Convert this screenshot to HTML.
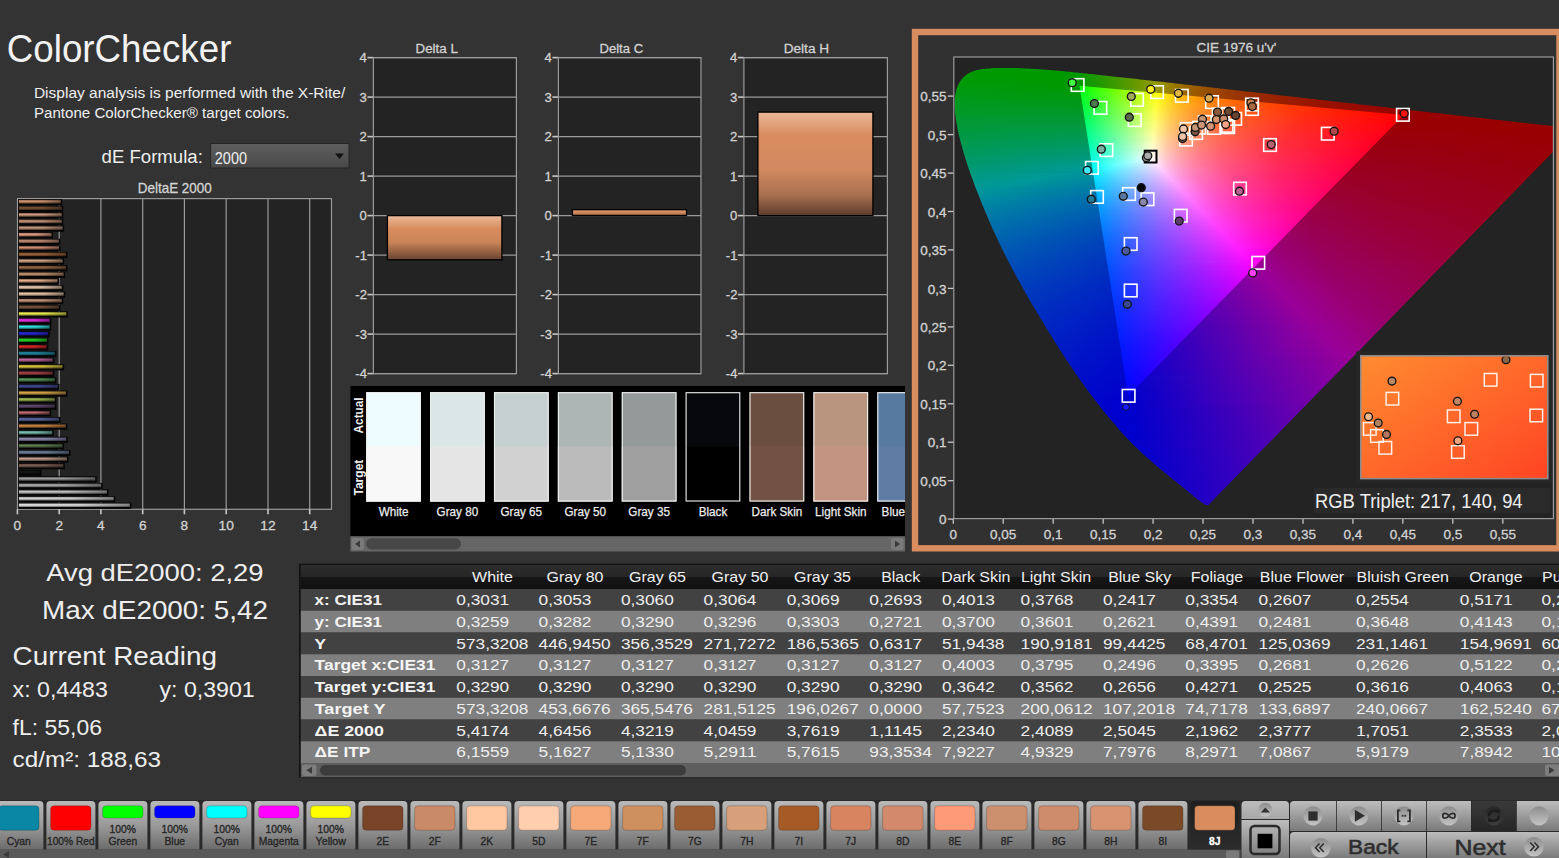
<!DOCTYPE html>
<html><head><meta charset="utf-8"><title>ColorChecker</title>
<style>html,body{margin:0;padding:0;background:#333;overflow:hidden;width:1559px;height:858px}
svg{display:block}text{font-family:"Liberation Sans",sans-serif}</style></head>
<body><svg width="1559" height="858" viewBox="0 0 1559 858" font-family="Liberation Sans, sans-serif">
<defs><linearGradient id="dd" x1="0" y1="0" x2="0" y2="1"><stop offset="0" stop-color="#5e5e5e"/><stop offset="1" stop-color="#484848"/></linearGradient>
<linearGradient id="bshade" x1="0" y1="0" x2="0" y2="1"><stop offset="0" stop-color="#000" stop-opacity="0.35"/><stop offset="0.4" stop-color="#000" stop-opacity="0"/><stop offset="1" stop-color="#000" stop-opacity="0.5"/></linearGradient>
<linearGradient id="bar0" x1="0" y1="0" x2="1" y2="0"><stop offset="0" stop-color="#f4f4f4"/><stop offset="0.55" stop-color="#f4f4f4" stop-opacity="0.95"/><stop offset="1" stop-color="#f4f4f4" stop-opacity="0.6"/></linearGradient>
<linearGradient id="bar1" x1="0" y1="0" x2="1" y2="0"><stop offset="0" stop-color="#e2e2e2"/><stop offset="0.55" stop-color="#e2e2e2" stop-opacity="0.95"/><stop offset="1" stop-color="#e2e2e2" stop-opacity="0.6"/></linearGradient>
<linearGradient id="bar2" x1="0" y1="0" x2="1" y2="0"><stop offset="0" stop-color="#cfcfcf"/><stop offset="0.55" stop-color="#cfcfcf" stop-opacity="0.95"/><stop offset="1" stop-color="#cfcfcf" stop-opacity="0.6"/></linearGradient>
<linearGradient id="bar3" x1="0" y1="0" x2="1" y2="0"><stop offset="0" stop-color="#b9b9b9"/><stop offset="0.55" stop-color="#b9b9b9" stop-opacity="0.95"/><stop offset="1" stop-color="#b9b9b9" stop-opacity="0.6"/></linearGradient>
<linearGradient id="bar4" x1="0" y1="0" x2="1" y2="0"><stop offset="0" stop-color="#a2a2a2"/><stop offset="0.55" stop-color="#a2a2a2" stop-opacity="0.95"/><stop offset="1" stop-color="#a2a2a2" stop-opacity="0.6"/></linearGradient>
<linearGradient id="bar5" x1="0" y1="0" x2="1" y2="0"><stop offset="0" stop-color="#161616"/><stop offset="0.55" stop-color="#161616" stop-opacity="0.95"/><stop offset="1" stop-color="#161616" stop-opacity="0.6"/></linearGradient>
<linearGradient id="bar6" x1="0" y1="0" x2="1" y2="0"><stop offset="0" stop-color="#846558"/><stop offset="0.55" stop-color="#846558" stop-opacity="0.95"/><stop offset="1" stop-color="#846558" stop-opacity="0.6"/></linearGradient>
<linearGradient id="bar7" x1="0" y1="0" x2="1" y2="0"><stop offset="0" stop-color="#caa595"/><stop offset="0.55" stop-color="#caa595" stop-opacity="0.95"/><stop offset="1" stop-color="#caa595" stop-opacity="0.6"/></linearGradient>
<linearGradient id="bar8" x1="0" y1="0" x2="1" y2="0"><stop offset="0" stop-color="#7389a6"/><stop offset="0.55" stop-color="#7389a6" stop-opacity="0.95"/><stop offset="1" stop-color="#7389a6" stop-opacity="0.6"/></linearGradient>
<linearGradient id="bar9" x1="0" y1="0" x2="1" y2="0"><stop offset="0" stop-color="#638455"/><stop offset="0.55" stop-color="#638455" stop-opacity="0.95"/><stop offset="1" stop-color="#638455" stop-opacity="0.6"/></linearGradient>
<linearGradient id="bar10" x1="0" y1="0" x2="1" y2="0"><stop offset="0" stop-color="#9793be"/><stop offset="0.55" stop-color="#9793be" stop-opacity="0.95"/><stop offset="1" stop-color="#9793be" stop-opacity="0.6"/></linearGradient>
<linearGradient id="bar11" x1="0" y1="0" x2="1" y2="0"><stop offset="0" stop-color="#7ec9b8"/><stop offset="0.55" stop-color="#7ec9b8" stop-opacity="0.95"/><stop offset="1" stop-color="#7ec9b8" stop-opacity="0.6"/></linearGradient>
<linearGradient id="bar12" x1="0" y1="0" x2="1" y2="0"><stop offset="0" stop-color="#d48a45"/><stop offset="0.55" stop-color="#d48a45" stop-opacity="0.95"/><stop offset="1" stop-color="#d48a45" stop-opacity="0.6"/></linearGradient>
<linearGradient id="bar13" x1="0" y1="0" x2="1" y2="0"><stop offset="0" stop-color="#606aad"/><stop offset="0.55" stop-color="#606aad" stop-opacity="0.95"/><stop offset="1" stop-color="#606aad" stop-opacity="0.6"/></linearGradient>
<linearGradient id="bar14" x1="0" y1="0" x2="1" y2="0"><stop offset="0" stop-color="#c36d75"/><stop offset="0.55" stop-color="#c36d75" stop-opacity="0.95"/><stop offset="1" stop-color="#c36d75" stop-opacity="0.6"/></linearGradient>
<linearGradient id="bar15" x1="0" y1="0" x2="1" y2="0"><stop offset="0" stop-color="#6b4e7b"/><stop offset="0.55" stop-color="#6b4e7b" stop-opacity="0.95"/><stop offset="1" stop-color="#6b4e7b" stop-opacity="0.6"/></linearGradient>
<linearGradient id="bar16" x1="0" y1="0" x2="1" y2="0"><stop offset="0" stop-color="#a6c256"/><stop offset="0.55" stop-color="#a6c256" stop-opacity="0.95"/><stop offset="1" stop-color="#a6c256" stop-opacity="0.6"/></linearGradient>
<linearGradient id="bar17" x1="0" y1="0" x2="1" y2="0"><stop offset="0" stop-color="#e1ad4a"/><stop offset="0.55" stop-color="#e1ad4a" stop-opacity="0.95"/><stop offset="1" stop-color="#e1ad4a" stop-opacity="0.6"/></linearGradient>
<linearGradient id="bar18" x1="0" y1="0" x2="1" y2="0"><stop offset="0" stop-color="#474d9c"/><stop offset="0.55" stop-color="#474d9c" stop-opacity="0.95"/><stop offset="1" stop-color="#474d9c" stop-opacity="0.6"/></linearGradient>
<linearGradient id="bar19" x1="0" y1="0" x2="1" y2="0"><stop offset="0" stop-color="#559a57"/><stop offset="0.55" stop-color="#559a57" stop-opacity="0.95"/><stop offset="1" stop-color="#559a57" stop-opacity="0.6"/></linearGradient>
<linearGradient id="bar20" x1="0" y1="0" x2="1" y2="0"><stop offset="0" stop-color="#b2454b"/><stop offset="0.55" stop-color="#b2454b" stop-opacity="0.95"/><stop offset="1" stop-color="#b2454b" stop-opacity="0.6"/></linearGradient>
<linearGradient id="bar21" x1="0" y1="0" x2="1" y2="0"><stop offset="0" stop-color="#e6cf41"/><stop offset="0.55" stop-color="#e6cf41" stop-opacity="0.95"/><stop offset="1" stop-color="#e6cf41" stop-opacity="0.6"/></linearGradient>
<linearGradient id="bar22" x1="0" y1="0" x2="1" y2="0"><stop offset="0" stop-color="#c76ba6"/><stop offset="0.55" stop-color="#c76ba6" stop-opacity="0.95"/><stop offset="1" stop-color="#c76ba6" stop-opacity="0.6"/></linearGradient>
<linearGradient id="bar23" x1="0" y1="0" x2="1" y2="0"><stop offset="0" stop-color="#2292ac"/><stop offset="0.55" stop-color="#2292ac" stop-opacity="0.95"/><stop offset="1" stop-color="#2292ac" stop-opacity="0.6"/></linearGradient>
<linearGradient id="bar24" x1="0" y1="0" x2="1" y2="0"><stop offset="0" stop-color="#e42828"/><stop offset="0.55" stop-color="#e42828" stop-opacity="0.95"/><stop offset="1" stop-color="#e42828" stop-opacity="0.6"/></linearGradient>
<linearGradient id="bar25" x1="0" y1="0" x2="1" y2="0"><stop offset="0" stop-color="#28e428"/><stop offset="0.55" stop-color="#28e428" stop-opacity="0.95"/><stop offset="1" stop-color="#28e428" stop-opacity="0.6"/></linearGradient>
<linearGradient id="bar26" x1="0" y1="0" x2="1" y2="0"><stop offset="0" stop-color="#2828e4"/><stop offset="0.55" stop-color="#2828e4" stop-opacity="0.95"/><stop offset="1" stop-color="#2828e4" stop-opacity="0.6"/></linearGradient>
<linearGradient id="bar27" x1="0" y1="0" x2="1" y2="0"><stop offset="0" stop-color="#35f1f1"/><stop offset="0.55" stop-color="#35f1f1" stop-opacity="0.95"/><stop offset="1" stop-color="#35f1f1" stop-opacity="0.6"/></linearGradient>
<linearGradient id="bar28" x1="0" y1="0" x2="1" y2="0"><stop offset="0" stop-color="#f135f1"/><stop offset="0.55" stop-color="#f135f1" stop-opacity="0.95"/><stop offset="1" stop-color="#f135f1" stop-opacity="0.6"/></linearGradient>
<linearGradient id="bar29" x1="0" y1="0" x2="1" y2="0"><stop offset="0" stop-color="#f3f352"/><stop offset="0.55" stop-color="#f3f352" stop-opacity="0.95"/><stop offset="1" stop-color="#f3f352" stop-opacity="0.6"/></linearGradient>
<linearGradient id="bar30" x1="0" y1="0" x2="1" y2="0"><stop offset="0" stop-color="#825b42"/><stop offset="0.55" stop-color="#825b42" stop-opacity="0.95"/><stop offset="1" stop-color="#825b42" stop-opacity="0.6"/></linearGradient>
<linearGradient id="bar31" x1="0" y1="0" x2="1" y2="0"><stop offset="0" stop-color="#cf9c80"/><stop offset="0.55" stop-color="#cf9c80" stop-opacity="0.95"/><stop offset="1" stop-color="#cf9c80" stop-opacity="0.6"/></linearGradient>
<linearGradient id="bar32" x1="0" y1="0" x2="1" y2="0"><stop offset="0" stop-color="#f7d1b1"/><stop offset="0.55" stop-color="#f7d1b1" stop-opacity="0.95"/><stop offset="1" stop-color="#f7d1b1" stop-opacity="0.6"/></linearGradient>
<linearGradient id="bar33" x1="0" y1="0" x2="1" y2="0"><stop offset="0" stop-color="#f8d7be"/><stop offset="0.55" stop-color="#f8d7be" stop-opacity="0.95"/><stop offset="1" stop-color="#f8d7be" stop-opacity="0.6"/></linearGradient>
<linearGradient id="bar34" x1="0" y1="0" x2="1" y2="0"><stop offset="0" stop-color="#edb28e"/><stop offset="0.55" stop-color="#edb28e" stop-opacity="0.95"/><stop offset="1" stop-color="#edb28e" stop-opacity="0.6"/></linearGradient>
<linearGradient id="bar35" x1="0" y1="0" x2="1" y2="0"><stop offset="0" stop-color="#d19d76"/><stop offset="0.55" stop-color="#d19d76" stop-opacity="0.95"/><stop offset="1" stop-color="#d19d76" stop-opacity="0.6"/></linearGradient>
<linearGradient id="bar36" x1="0" y1="0" x2="1" y2="0"><stop offset="0" stop-color="#9e6b49"/><stop offset="0.55" stop-color="#9e6b49" stop-opacity="0.95"/><stop offset="1" stop-color="#9e6b49" stop-opacity="0.6"/></linearGradient>
<linearGradient id="bar37" x1="0" y1="0" x2="1" y2="0"><stop offset="0" stop-color="#dbad8c"/><stop offset="0.55" stop-color="#dbad8c" stop-opacity="0.95"/><stop offset="1" stop-color="#dbad8c" stop-opacity="0.6"/></linearGradient>
<linearGradient id="bar38" x1="0" y1="0" x2="1" y2="0"><stop offset="0" stop-color="#ab6b3f"/><stop offset="0.55" stop-color="#ab6b3f" stop-opacity="0.95"/><stop offset="1" stop-color="#ab6b3f" stop-opacity="0.6"/></linearGradient>
<linearGradient id="bar39" x1="0" y1="0" x2="1" y2="0"><stop offset="0" stop-color="#d48f73"/><stop offset="0.55" stop-color="#d48f73" stop-opacity="0.95"/><stop offset="1" stop-color="#d48f73" stop-opacity="0.6"/></linearGradient>
<linearGradient id="bar40" x1="0" y1="0" x2="1" y2="0"><stop offset="0" stop-color="#d1967c"/><stop offset="0.55" stop-color="#d1967c" stop-opacity="0.95"/><stop offset="1" stop-color="#d1967c" stop-opacity="0.6"/></linearGradient>
<linearGradient id="bar41" x1="0" y1="0" x2="1" y2="0"><stop offset="0" stop-color="#f2a88d"/><stop offset="0.55" stop-color="#f2a88d" stop-opacity="0.95"/><stop offset="1" stop-color="#f2a88d" stop-opacity="0.6"/></linearGradient>
<linearGradient id="bar42" x1="0" y1="0" x2="1" y2="0"><stop offset="0" stop-color="#cf9e82"/><stop offset="0.55" stop-color="#cf9e82" stop-opacity="0.95"/><stop offset="1" stop-color="#cf9e82" stop-opacity="0.6"/></linearGradient>
<linearGradient id="bar43" x1="0" y1="0" x2="1" y2="0"><stop offset="0" stop-color="#d29a80"/><stop offset="0.55" stop-color="#d29a80" stop-opacity="0.95"/><stop offset="1" stop-color="#d29a80" stop-opacity="0.6"/></linearGradient>
<linearGradient id="bar44" x1="0" y1="0" x2="1" y2="0"><stop offset="0" stop-color="#daa284"/><stop offset="0.55" stop-color="#daa284" stop-opacity="0.95"/><stop offset="1" stop-color="#daa284" stop-opacity="0.6"/></linearGradient>
<linearGradient id="bar45" x1="0" y1="0" x2="1" y2="0"><stop offset="0" stop-color="#82593b"/><stop offset="0.55" stop-color="#82593b" stop-opacity="0.95"/><stop offset="1" stop-color="#82593b" stop-opacity="0.6"/></linearGradient>
<linearGradient id="bar46" x1="0" y1="0" x2="1" y2="0"><stop offset="0" stop-color="#d89a74"/><stop offset="0.55" stop-color="#d89a74" stop-opacity="0.95"/><stop offset="1" stop-color="#d89a74" stop-opacity="0.6"/></linearGradient>
<linearGradient id="dbar" x1="0" y1="0" x2="0" y2="1"><stop offset="0" stop-color="#e9b89a"/><stop offset="0.22" stop-color="#d98c5e"/><stop offset="0.55" stop-color="#d38a60"/><stop offset="0.8" stop-color="#a87050"/><stop offset="1" stop-color="#5e3c2c"/></linearGradient>
<linearGradient id="dbar2" x1="0" y1="0" x2="0" y2="1"><stop offset="0" stop-color="#e9b89a"/><stop offset="0.3" stop-color="#d98c5e"/><stop offset="0.6" stop-color="#c98458"/><stop offset="1" stop-color="#6a4430"/></linearGradient>
<linearGradient id="go7" gradientUnits="userSpaceOnUse" x1="967" y1="0" x2="1083" y2="0"><stop offset="0.0043" stop-color="#009900"/><stop offset="0.9440" stop-color="#009900"/><stop offset="0.9957" stop-color="#089900"/></linearGradient><linearGradient id="go8" gradientUnits="userSpaceOnUse" x1="964" y1="0" x2="1102" y2="0"><stop offset="0.0036" stop-color="#009900"/><stop offset="0.8225" stop-color="#009900"/><stop offset="0.9964" stop-color="#259900"/></linearGradient><linearGradient id="go9" gradientUnits="userSpaceOnUse" x1="962" y1="0" x2="1120" y2="0"><stop offset="0.0032" stop-color="#009901"/><stop offset="0.7310" stop-color="#009900"/><stop offset="0.9968" stop-color="#459900"/></linearGradient><linearGradient id="go10" gradientUnits="userSpaceOnUse" x1="960" y1="0" x2="1138" y2="0"><stop offset="0.0028" stop-color="#009903"/><stop offset="0.6657" stop-color="#009900"/><stop offset="0.8399" stop-color="#339900"/><stop offset="0.9972" stop-color="#699900"/></linearGradient><linearGradient id="go11" gradientUnits="userSpaceOnUse" x1="958" y1="0" x2="1156" y2="0"><stop offset="0.0025" stop-color="#009905"/><stop offset="0.6086" stop-color="#009900"/><stop offset="0.8157" stop-color="#459900"/><stop offset="0.9975" stop-color="#929900"/></linearGradient><linearGradient id="go12" gradientUnits="userSpaceOnUse" x1="957" y1="0" x2="1174" y2="0"><stop offset="0.0023" stop-color="#009907"/><stop offset="0.5599" stop-color="#009900"/><stop offset="0.7488" stop-color="#459900"/><stop offset="0.9240" stop-color="#979900"/><stop offset="0.9977" stop-color="#997a00"/></linearGradient><linearGradient id="go13" gradientUnits="userSpaceOnUse" x1="956" y1="0" x2="1192" y2="0"><stop offset="0.0021" stop-color="#009909"/><stop offset="0.5233" stop-color="#009900"/><stop offset="0.6970" stop-color="#469900"/><stop offset="0.8581" stop-color="#999800"/><stop offset="0.9216" stop-color="#997900"/><stop offset="0.9979" stop-color="#995f00"/></linearGradient><linearGradient id="go14" gradientUnits="userSpaceOnUse" x1="955" y1="0" x2="1209" y2="0"><stop offset="0.0020" stop-color="#00990b"/><stop offset="0.4902" stop-color="#009900"/><stop offset="0.6516" stop-color="#469900"/><stop offset="0.8012" stop-color="#999800"/><stop offset="0.8878" stop-color="#996d00"/><stop offset="0.9980" stop-color="#994c00"/></linearGradient><linearGradient id="go15" gradientUnits="userSpaceOnUse" x1="955" y1="0" x2="1227" y2="0"><stop offset="0.0018" stop-color="#00990d"/><stop offset="0.4577" stop-color="#009903"/><stop offset="0.6085" stop-color="#469900"/><stop offset="0.7445" stop-color="#989900"/><stop offset="0.7960" stop-color="#997c00"/><stop offset="0.8548" stop-color="#996300"/><stop offset="0.9982" stop-color="#993d00"/></linearGradient><linearGradient id="go16" gradientUnits="userSpaceOnUse" x1="954" y1="0" x2="1244" y2="0"><stop offset="0.0017" stop-color="#009910"/><stop offset="0.4362" stop-color="#019906"/><stop offset="0.5776" stop-color="#489901"/><stop offset="0.7017" stop-color="#999900"/><stop offset="0.7569" stop-color="#997800"/><stop offset="0.8224" stop-color="#995c00"/><stop offset="0.9983" stop-color="#993200"/></linearGradient><linearGradient id="go17" gradientUnits="userSpaceOnUse" x1="954" y1="0" x2="1262" y2="0"><stop offset="0.0016" stop-color="#009912"/><stop offset="0.4107" stop-color="#009908"/><stop offset="0.5406" stop-color="#469904"/><stop offset="0.6575" stop-color="#979900"/><stop offset="0.7256" stop-color="#997000"/><stop offset="0.7971" stop-color="#995300"/><stop offset="0.8880" stop-color="#993b00"/><stop offset="0.9984" stop-color="#992800"/></linearGradient><linearGradient id="go18" gradientUnits="userSpaceOnUse" x1="953" y1="0" x2="1280" y2="0"><stop offset="0.0015" stop-color="#009914"/><stop offset="0.3899" stop-color="#00990b"/><stop offset="0.5122" stop-color="#469907"/><stop offset="0.6223" stop-color="#979902"/><stop offset="0.6896" stop-color="#996e00"/><stop offset="0.7691" stop-color="#994e00"/><stop offset="0.8700" stop-color="#993400"/><stop offset="0.9985" stop-color="#992000"/></linearGradient><linearGradient id="go19" gradientUnits="userSpaceOnUse" x1="953" y1="0" x2="1297" y2="0"><stop offset="0.0015" stop-color="#009916"/><stop offset="0.3735" stop-color="#01990e"/><stop offset="0.4898" stop-color="#48990a"/><stop offset="0.5916" stop-color="#989906"/><stop offset="0.6613" stop-color="#996b01"/><stop offset="0.7456" stop-color="#994900"/><stop offset="0.8561" stop-color="#992e00"/><stop offset="0.9985" stop-color="#991a00"/></linearGradient><linearGradient id="go20" gradientUnits="userSpaceOnUse" x1="953" y1="0" x2="1315" y2="0"><stop offset="0.0014" stop-color="#009918"/><stop offset="0.3550" stop-color="#009911"/><stop offset="0.4655" stop-color="#48990d"/><stop offset="0.5622" stop-color="#98990a"/><stop offset="0.6312" stop-color="#996904"/><stop offset="0.7224" stop-color="#994400"/><stop offset="0.8412" stop-color="#992900"/><stop offset="0.9986" stop-color="#991400"/></linearGradient><linearGradient id="go21" gradientUnits="userSpaceOnUse" x1="953" y1="0" x2="1332" y2="0"><stop offset="0.0013" stop-color="#00991a"/><stop offset="0.3391" stop-color="#009914"/><stop offset="0.4420" stop-color="#469911"/><stop offset="0.5369" stop-color="#98990d"/><stop offset="0.6082" stop-color="#996506"/><stop offset="0.7005" stop-color="#994002"/><stop offset="0.8272" stop-color="#992400"/><stop offset="0.9987" stop-color="#990f00"/></linearGradient><linearGradient id="go22" gradientUnits="userSpaceOnUse" x1="953" y1="0" x2="1350" y2="0"><stop offset="0.0013" stop-color="#00991d"/><stop offset="0.3237" stop-color="#009917"/><stop offset="0.4219" stop-color="#469914"/><stop offset="0.5126" stop-color="#999911"/><stop offset="0.5453" stop-color="#997c0d"/><stop offset="0.5831" stop-color="#996309"/><stop offset="0.6814" stop-color="#993c03"/><stop offset="0.8149" stop-color="#992000"/><stop offset="0.9987" stop-color="#990b00"/></linearGradient><linearGradient id="go23" gradientUnits="userSpaceOnUse" x1="953" y1="0" x2="1368" y2="0"><stop offset="0.0012" stop-color="#00991f"/><stop offset="0.3120" stop-color="#00991a"/><stop offset="0.4060" stop-color="#479918"/><stop offset="0.4904" stop-color="#999815"/><stop offset="0.5241" stop-color="#997910"/><stop offset="0.5627" stop-color="#99600b"/><stop offset="0.6614" stop-color="#993805"/><stop offset="0.8012" stop-color="#991c00"/><stop offset="0.9988" stop-color="#990700"/></linearGradient><linearGradient id="go24" gradientUnits="userSpaceOnUse" x1="953" y1="0" x2="1385" y2="0"><stop offset="0.0012" stop-color="#009921"/><stop offset="0.2998" stop-color="#00991d"/><stop offset="0.3877" stop-color="#45991b"/><stop offset="0.4711" stop-color="#999819"/><stop offset="0.5035" stop-color="#997913"/><stop offset="0.5428" stop-color="#995e0e"/><stop offset="0.6447" stop-color="#993506"/><stop offset="0.7905" stop-color="#991801"/><stop offset="0.9988" stop-color="#990400"/></linearGradient><linearGradient id="go25" gradientUnits="userSpaceOnUse" x1="953" y1="0" x2="1403" y2="0"><stop offset="0.0011" stop-color="#009923"/><stop offset="0.2878" stop-color="#009920"/><stop offset="0.3700" stop-color="#43991f"/><stop offset="0.4522" stop-color="#99971d"/><stop offset="0.4856" stop-color="#997616"/><stop offset="0.5256" stop-color="#995b10"/><stop offset="0.6300" stop-color="#993207"/><stop offset="0.7811" stop-color="#991501"/><stop offset="0.9989" stop-color="#990100"/></linearGradient><linearGradient id="go26" gradientUnits="userSpaceOnUse" x1="953" y1="0" x2="1421" y2="0"><stop offset="0.0011" stop-color="#009925"/><stop offset="0.2788" stop-color="#009923"/><stop offset="0.3579" stop-color="#459922"/><stop offset="0.4348" stop-color="#999720"/><stop offset="0.4669" stop-color="#997619"/><stop offset="0.5075" stop-color="#995912"/><stop offset="0.5566" stop-color="#99420d"/><stop offset="0.6165" stop-color="#992e08"/><stop offset="0.7810" stop-color="#991102"/><stop offset="0.9989" stop-color="#990000"/></linearGradient><linearGradient id="go27" gradientUnits="userSpaceOnUse" x1="953" y1="0" x2="1438" y2="0"><stop offset="0.0010" stop-color="#009928"/><stop offset="0.2691" stop-color="#009926"/><stop offset="0.3474" stop-color="#479926"/><stop offset="0.4175" stop-color="#999925"/><stop offset="0.4505" stop-color="#99751c"/><stop offset="0.4918" stop-color="#995715"/><stop offset="0.5412" stop-color="#993f0f"/><stop offset="0.6031" stop-color="#992c0a"/><stop offset="0.7845" stop-color="#990d02"/><stop offset="0.9990" stop-color="#990000"/></linearGradient><linearGradient id="go28" gradientUnits="userSpaceOnUse" x1="953" y1="0" x2="1456" y2="0"><stop offset="0.0010" stop-color="#00992a"/><stop offset="0.2594" stop-color="#00992a"/><stop offset="0.3330" stop-color="#459929"/><stop offset="0.4026" stop-color="#999829"/><stop offset="0.4364" stop-color="#99731f"/><stop offset="0.4781" stop-color="#995416"/><stop offset="0.5298" stop-color="#993c10"/><stop offset="0.5915" stop-color="#99290b"/><stop offset="0.7903" stop-color="#990902"/><stop offset="0.8976" stop-color="#990000"/><stop offset="0.9990" stop-color="#990000"/></linearGradient><linearGradient id="go29" gradientUnits="userSpaceOnUse" x1="953" y1="0" x2="1474" y2="0"><stop offset="0.0010" stop-color="#00992c"/><stop offset="0.2524" stop-color="#01992d"/><stop offset="0.3234" stop-color="#47992d"/><stop offset="0.3887" stop-color="#99982d"/><stop offset="0.4213" stop-color="#997222"/><stop offset="0.4635" stop-color="#995319"/><stop offset="0.5154" stop-color="#993a11"/><stop offset="0.5806" stop-color="#99260c"/><stop offset="0.6747" stop-color="#991406"/><stop offset="0.7975" stop-color="#990502"/><stop offset="0.9990" stop-color="#990000"/></linearGradient><linearGradient id="go30" gradientUnits="userSpaceOnUse" x1="954" y1="0" x2="1491" y2="0"><stop offset="0.0009" stop-color="#00992f"/><stop offset="0.2430" stop-color="#009930"/><stop offset="0.3101" stop-color="#459931"/><stop offset="0.3752" stop-color="#999731"/><stop offset="0.4088" stop-color="#997025"/><stop offset="0.4497" stop-color="#99511b"/><stop offset="0.5019" stop-color="#993813"/><stop offset="0.5689" stop-color="#99230d"/><stop offset="0.6713" stop-color="#991007"/><stop offset="0.8035" stop-color="#990202"/><stop offset="0.9991" stop-color="#990000"/></linearGradient><linearGradient id="go31" gradientUnits="userSpaceOnUse" x1="954" y1="0" x2="1509" y2="0"><stop offset="0.0009" stop-color="#009931"/><stop offset="0.2351" stop-color="#009934"/><stop offset="0.2982" stop-color="#429935"/><stop offset="0.3631" stop-color="#999735"/><stop offset="0.3973" stop-color="#996e27"/><stop offset="0.4387" stop-color="#994e1d"/><stop offset="0.4928" stop-color="#993514"/><stop offset="0.5595" stop-color="#99210d"/><stop offset="0.6622" stop-color="#990e07"/><stop offset="0.7991" stop-color="#990002"/><stop offset="0.9991" stop-color="#990000"/></linearGradient><linearGradient id="go32" gradientUnits="userSpaceOnUse" x1="954" y1="0" x2="1527" y2="0"><stop offset="0.0009" stop-color="#009934"/><stop offset="0.2295" stop-color="#019937"/><stop offset="0.2906" stop-color="#449939"/><stop offset="0.3517" stop-color="#999639"/><stop offset="0.3848" stop-color="#996d2b"/><stop offset="0.4267" stop-color="#994d1f"/><stop offset="0.4808" stop-color="#993316"/><stop offset="0.5489" stop-color="#991f0e"/><stop offset="0.6466" stop-color="#990d08"/><stop offset="0.7723" stop-color="#990003"/><stop offset="0.9991" stop-color="#990000"/></linearGradient><linearGradient id="go33" gradientUnits="userSpaceOnUse" x1="955" y1="0" x2="1545" y2="0"><stop offset="0.0008" stop-color="#009936"/><stop offset="0.2212" stop-color="#00993a"/><stop offset="0.2822" stop-color="#46993c"/><stop offset="0.3381" stop-color="#99983f"/><stop offset="0.3703" stop-color="#996e2e"/><stop offset="0.4127" stop-color="#994c21"/><stop offset="0.4669" stop-color="#993217"/><stop offset="0.5364" stop-color="#991d0f"/><stop offset="0.7449" stop-color="#990004"/><stop offset="0.9992" stop-color="#990000"/></linearGradient><linearGradient id="go34" gradientUnits="userSpaceOnUse" x1="955" y1="0" x2="1553" y2="0"><stop offset="0.0008" stop-color="#009938"/><stop offset="0.2182" stop-color="#00993e"/><stop offset="0.2768" stop-color="#449940"/><stop offset="0.3336" stop-color="#999843"/><stop offset="0.3671" stop-color="#996c31"/><stop offset="0.4089" stop-color="#994a24"/><stop offset="0.4624" stop-color="#993119"/><stop offset="0.5326" stop-color="#991c11"/><stop offset="0.7316" stop-color="#990005"/><stop offset="0.9992" stop-color="#990000"/></linearGradient><linearGradient id="go35" gradientUnits="userSpaceOnUse" x1="955" y1="0" x2="1553" y2="0"><stop offset="0.0008" stop-color="#00993b"/><stop offset="0.2199" stop-color="#019942"/><stop offset="0.2784" stop-color="#469945"/><stop offset="0.3336" stop-color="#999747"/><stop offset="0.3671" stop-color="#996b34"/><stop offset="0.4089" stop-color="#994a26"/><stop offset="0.4624" stop-color="#99301b"/><stop offset="0.5326" stop-color="#991b12"/><stop offset="0.7283" stop-color="#990006"/><stop offset="0.9992" stop-color="#990000"/></linearGradient><linearGradient id="go36" gradientUnits="userSpaceOnUse" x1="956" y1="0" x2="1553" y2="0"><stop offset="0.0008" stop-color="#00993d"/><stop offset="0.2186" stop-color="#009945"/><stop offset="0.2755" stop-color="#449949"/><stop offset="0.3325" stop-color="#99974c"/><stop offset="0.3660" stop-color="#996b38"/><stop offset="0.4079" stop-color="#994929"/><stop offset="0.4615" stop-color="#99301d"/><stop offset="0.5318" stop-color="#991b14"/><stop offset="0.7245" stop-color="#990007"/><stop offset="0.9992" stop-color="#990000"/></linearGradient><linearGradient id="go37" gradientUnits="userSpaceOnUse" x1="956" y1="0" x2="1553" y2="0"><stop offset="0.0008" stop-color="#009940"/><stop offset="0.2186" stop-color="#009949"/><stop offset="0.2739" stop-color="#42994d"/><stop offset="0.3325" stop-color="#999650"/><stop offset="0.3660" stop-color="#996a3b"/><stop offset="0.4079" stop-color="#99492b"/><stop offset="0.4615" stop-color="#992f1f"/><stop offset="0.5318" stop-color="#991b15"/><stop offset="0.7211" stop-color="#990009"/><stop offset="0.9992" stop-color="#990001"/></linearGradient><linearGradient id="go38" gradientUnits="userSpaceOnUse" x1="956" y1="0" x2="1553" y2="0"><stop offset="0.0008" stop-color="#009942"/><stop offset="0.2186" stop-color="#00994d"/><stop offset="0.2755" stop-color="#449951"/><stop offset="0.3308" stop-color="#999856"/><stop offset="0.3626" stop-color="#996d40"/><stop offset="0.4045" stop-color="#994a2f"/><stop offset="0.4581" stop-color="#993022"/><stop offset="0.5285" stop-color="#991b17"/><stop offset="0.7178" stop-color="#99000a"/><stop offset="0.9992" stop-color="#990002"/></linearGradient><linearGradient id="go39" gradientUnits="userSpaceOnUse" x1="957" y1="0" x2="1553" y2="0"><stop offset="0.0008" stop-color="#009945"/><stop offset="0.2190" stop-color="#009950"/><stop offset="0.2760" stop-color="#469955"/><stop offset="0.3297" stop-color="#99985b"/><stop offset="0.3616" stop-color="#996c44"/><stop offset="0.4035" stop-color="#994a31"/><stop offset="0.4572" stop-color="#992f24"/><stop offset="0.5277" stop-color="#991b19"/><stop offset="0.7139" stop-color="#99000b"/><stop offset="0.9992" stop-color="#990002"/></linearGradient><linearGradient id="go40" gradientUnits="userSpaceOnUse" x1="957" y1="0" x2="1553" y2="0"><stop offset="0.0008" stop-color="#009948"/><stop offset="0.2190" stop-color="#009954"/><stop offset="0.2743" stop-color="#439959"/><stop offset="0.3297" stop-color="#99975f"/><stop offset="0.3616" stop-color="#996c47"/><stop offset="0.4035" stop-color="#994934"/><stop offset="0.4572" stop-color="#992f26"/><stop offset="0.5277" stop-color="#991a1a"/><stop offset="0.7106" stop-color="#99000c"/><stop offset="0.9992" stop-color="#990003"/></linearGradient><linearGradient id="go41" gradientUnits="userSpaceOnUse" x1="958" y1="0" x2="1553" y2="0"><stop offset="0.0008" stop-color="#00994a"/><stop offset="0.2176" stop-color="#009958"/><stop offset="0.2731" stop-color="#43995e"/><stop offset="0.3286" stop-color="#999764"/><stop offset="0.3605" stop-color="#996b4b"/><stop offset="0.4025" stop-color="#994937"/><stop offset="0.4563" stop-color="#992e28"/><stop offset="0.5269" stop-color="#991a1c"/><stop offset="0.7067" stop-color="#99000d"/><stop offset="0.9992" stop-color="#990003"/></linearGradient><linearGradient id="go42" gradientUnits="userSpaceOnUse" x1="958" y1="0" x2="1553" y2="0"><stop offset="0.0008" stop-color="#00994d"/><stop offset="0.2193" stop-color="#00995c"/><stop offset="0.2731" stop-color="#439962"/><stop offset="0.3286" stop-color="#999669"/><stop offset="0.3605" stop-color="#996a4e"/><stop offset="0.4025" stop-color="#994839"/><stop offset="0.4563" stop-color="#992e2a"/><stop offset="0.5269" stop-color="#99191d"/><stop offset="0.7034" stop-color="#99000e"/><stop offset="0.9992" stop-color="#990004"/></linearGradient><linearGradient id="go43" gradientUnits="userSpaceOnUse" x1="959" y1="0" x2="1553" y2="0"><stop offset="0.0008" stop-color="#009950"/><stop offset="0.2180" stop-color="#009960"/><stop offset="0.2736" stop-color="#459967"/><stop offset="0.3258" stop-color="#99986f"/><stop offset="0.3577" stop-color="#996c53"/><stop offset="0.3998" stop-color="#99493d"/><stop offset="0.4537" stop-color="#992e2c"/><stop offset="0.5244" stop-color="#99191f"/><stop offset="0.7012" stop-color="#99000f"/><stop offset="0.9992" stop-color="#990005"/></linearGradient><linearGradient id="go44" gradientUnits="userSpaceOnUse" x1="959" y1="0" x2="1553" y2="0"><stop offset="0.0008" stop-color="#009952"/><stop offset="0.2180" stop-color="#009964"/><stop offset="0.2736" stop-color="#45996c"/><stop offset="0.3258" stop-color="#999874"/><stop offset="0.3577" stop-color="#996b57"/><stop offset="0.3998" stop-color="#994840"/><stop offset="0.4537" stop-color="#992d2e"/><stop offset="0.5227" stop-color="#991921"/><stop offset="0.6978" stop-color="#990010"/><stop offset="0.9992" stop-color="#990005"/></linearGradient><linearGradient id="go45" gradientUnits="userSpaceOnUse" x1="960" y1="0" x2="1553" y2="0"><stop offset="0.0008" stop-color="#009955"/><stop offset="0.2184" stop-color="#019969"/><stop offset="0.2723" stop-color="#459970"/><stop offset="0.3246" stop-color="#999779"/><stop offset="0.3567" stop-color="#996a5a"/><stop offset="0.3988" stop-color="#994742"/><stop offset="0.4528" stop-color="#992d30"/><stop offset="0.5219" stop-color="#991922"/><stop offset="0.6939" stop-color="#990012"/><stop offset="0.9992" stop-color="#990006"/></linearGradient><linearGradient id="go46" gradientUnits="userSpaceOnUse" x1="961" y1="0" x2="1553" y2="0"><stop offset="0.0008" stop-color="#009958"/><stop offset="0.2171" stop-color="#00996d"/><stop offset="0.2711" stop-color="#459975"/><stop offset="0.3235" stop-color="#99977e"/><stop offset="0.3556" stop-color="#996a5e"/><stop offset="0.3961" stop-color="#994846"/><stop offset="0.4502" stop-color="#992d33"/><stop offset="0.5211" stop-color="#991824"/><stop offset="0.6900" stop-color="#990013"/><stop offset="0.9992" stop-color="#990006"/></linearGradient><linearGradient id="go47" gradientUnits="userSpaceOnUse" x1="961" y1="0" x2="1553" y2="0"><stop offset="0.0008" stop-color="#00995b"/><stop offset="0.2171" stop-color="#009971"/><stop offset="0.2694" stop-color="#42997a"/><stop offset="0.3235" stop-color="#999683"/><stop offset="0.3556" stop-color="#996962"/><stop offset="0.3961" stop-color="#994749"/><stop offset="0.4502" stop-color="#992d35"/><stop offset="0.5211" stop-color="#991826"/><stop offset="0.6867" stop-color="#990014"/><stop offset="0.9992" stop-color="#990007"/></linearGradient><linearGradient id="go48" gradientUnits="userSpaceOnUse" x1="962" y1="0" x2="1553" y2="0"><stop offset="0.0008" stop-color="#00995e"/><stop offset="0.2174" stop-color="#019976"/><stop offset="0.2682" stop-color="#42997f"/><stop offset="0.3223" stop-color="#999688"/><stop offset="0.3545" stop-color="#996865"/><stop offset="0.3951" stop-color="#99474b"/><stop offset="0.4492" stop-color="#992c37"/><stop offset="0.5203" stop-color="#991727"/><stop offset="0.6827" stop-color="#990015"/><stop offset="0.9992" stop-color="#990008"/></linearGradient><linearGradient id="go49" gradientUnits="userSpaceOnUse" x1="962" y1="0" x2="1552" y2="0"><stop offset="0.0008" stop-color="#009961"/><stop offset="0.2178" stop-color="#00997a"/><stop offset="0.2720" stop-color="#479984"/><stop offset="0.3212" stop-color="#999890"/><stop offset="0.3534" stop-color="#996a6b"/><stop offset="0.3941" stop-color="#99474f"/><stop offset="0.4483" stop-color="#992c3a"/><stop offset="0.5178" stop-color="#991829"/><stop offset="0.6805" stop-color="#990017"/><stop offset="0.9992" stop-color="#990008"/></linearGradient><linearGradient id="go50" gradientUnits="userSpaceOnUse" x1="963" y1="0" x2="1550" y2="0"><stop offset="0.0009" stop-color="#009964"/><stop offset="0.2172" stop-color="#00997e"/><stop offset="0.2700" stop-color="#449989"/><stop offset="0.3211" stop-color="#999795"/><stop offset="0.3535" stop-color="#99696f"/><stop offset="0.3944" stop-color="#994752"/><stop offset="0.4489" stop-color="#992c3c"/><stop offset="0.5187" stop-color="#99172b"/><stop offset="0.6789" stop-color="#990018"/><stop offset="0.9991" stop-color="#990009"/></linearGradient><linearGradient id="go51" gradientUnits="userSpaceOnUse" x1="964" y1="0" x2="1548" y2="0"><stop offset="0.0009" stop-color="#009967"/><stop offset="0.2166" stop-color="#009983"/><stop offset="0.2646" stop-color="#3d998d"/><stop offset="0.3228" stop-color="#999497"/><stop offset="0.3553" stop-color="#996671"/><stop offset="0.3964" stop-color="#994554"/><stop offset="0.4512" stop-color="#992a3d"/><stop offset="0.5214" stop-color="#99162c"/><stop offset="0.6772" stop-color="#990019"/><stop offset="0.9991" stop-color="#99000a"/></linearGradient><linearGradient id="go52" gradientUnits="userSpaceOnUse" x1="964" y1="0" x2="1546" y2="0"><stop offset="0.0009" stop-color="#00996a"/><stop offset="0.2191" stop-color="#009988"/><stop offset="0.2895" stop-color="#619998"/><stop offset="0.3273" stop-color="#998d97"/><stop offset="0.3600" stop-color="#996272"/><stop offset="0.4029" stop-color="#994154"/><stop offset="0.4579" stop-color="#99283e"/><stop offset="0.5284" stop-color="#99152d"/><stop offset="0.6761" stop-color="#99001a"/><stop offset="0.9991" stop-color="#99000a"/></linearGradient><linearGradient id="go53" gradientUnits="userSpaceOnUse" x1="965" y1="0" x2="1544" y2="0"><stop offset="0.0009" stop-color="#00996d"/><stop offset="0.2185" stop-color="#00998c"/><stop offset="0.2720" stop-color="#469898"/><stop offset="0.3307" stop-color="#998797"/><stop offset="0.3636" stop-color="#995e72"/><stop offset="0.4067" stop-color="#993e55"/><stop offset="0.4620" stop-color="#99263f"/><stop offset="0.5345" stop-color="#99132e"/><stop offset="0.6744" stop-color="#99001c"/><stop offset="0.9991" stop-color="#99000b"/></linearGradient><linearGradient id="go54" gradientUnits="userSpaceOnUse" x1="966" y1="0" x2="1542" y2="0"><stop offset="0.0009" stop-color="#009970"/><stop offset="0.2179" stop-color="#009991"/><stop offset="0.2561" stop-color="#2f9799"/><stop offset="0.3342" stop-color="#998197"/><stop offset="0.3672" stop-color="#995a73"/><stop offset="0.4106" stop-color="#993c56"/><stop offset="0.4661" stop-color="#992540"/><stop offset="0.5391" stop-color="#99122f"/><stop offset="0.6727" stop-color="#99001d"/><stop offset="0.9991" stop-color="#99000c"/></linearGradient><linearGradient id="go55" gradientUnits="userSpaceOnUse" x1="966" y1="0" x2="1540" y2="0"><stop offset="0.0009" stop-color="#009973"/><stop offset="0.2204" stop-color="#009996"/><stop offset="0.3389" stop-color="#997b97"/><stop offset="0.3737" stop-color="#995572"/><stop offset="0.4172" stop-color="#993956"/><stop offset="0.4730" stop-color="#992240"/><stop offset="0.5462" stop-color="#99112f"/><stop offset="0.6716" stop-color="#99001f"/><stop offset="0.9991" stop-color="#99000d"/></linearGradient><linearGradient id="go56" gradientUnits="userSpaceOnUse" x1="967" y1="0" x2="1538" y2="0"><stop offset="0.0009" stop-color="#009977"/><stop offset="0.2198" stop-color="#00989a"/><stop offset="0.3424" stop-color="#997597"/><stop offset="0.3774" stop-color="#995273"/><stop offset="0.4212" stop-color="#993657"/><stop offset="0.4790" stop-color="#992041"/><stop offset="0.5525" stop-color="#991030"/><stop offset="0.6699" stop-color="#990020"/><stop offset="0.9991" stop-color="#99000d"/></linearGradient><linearGradient id="go57" gradientUnits="userSpaceOnUse" x1="968" y1="0" x2="1536" y2="0"><stop offset="0.0009" stop-color="#00997a"/><stop offset="0.2192" stop-color="#00949b"/><stop offset="0.3460" stop-color="#997097"/><stop offset="0.3812" stop-color="#994e73"/><stop offset="0.4269" stop-color="#993357"/><stop offset="0.4850" stop-color="#991e41"/><stop offset="0.5590" stop-color="#990e30"/><stop offset="0.6699" stop-color="#990021"/><stop offset="0.9991" stop-color="#99000e"/></linearGradient><linearGradient id="go58" gradientUnits="userSpaceOnUse" x1="968" y1="0" x2="1534" y2="0"><stop offset="0.0009" stop-color="#00997d"/><stop offset="0.1652" stop-color="#009998"/><stop offset="0.2217" stop-color="#01919d"/><stop offset="0.3507" stop-color="#996b97"/><stop offset="0.3860" stop-color="#994b74"/><stop offset="0.4320" stop-color="#993158"/><stop offset="0.4903" stop-color="#991d42"/><stop offset="0.5645" stop-color="#990d31"/><stop offset="0.6687" stop-color="#990023"/><stop offset="0.9991" stop-color="#99000f"/></linearGradient><linearGradient id="go59" gradientUnits="userSpaceOnUse" x1="969" y1="0" x2="1532" y2="0"><stop offset="0.0009" stop-color="#009981"/><stop offset="0.1465" stop-color="#009998"/><stop offset="0.2211" stop-color="#008e9e"/><stop offset="0.2425" stop-color="#178499"/><stop offset="0.3544" stop-color="#996797"/><stop offset="0.3917" stop-color="#994673"/><stop offset="0.4378" stop-color="#992e58"/><stop offset="0.4964" stop-color="#991b43"/><stop offset="0.5710" stop-color="#990c32"/><stop offset="0.6670" stop-color="#990024"/><stop offset="0.9991" stop-color="#990010"/></linearGradient><linearGradient id="go60" gradientUnits="userSpaceOnUse" x1="970" y1="0" x2="1530" y2="0"><stop offset="0.0009" stop-color="#009984"/><stop offset="0.1259" stop-color="#009998"/><stop offset="0.2205" stop-color="#008ba0"/><stop offset="0.2473" stop-color="#1c7f99"/><stop offset="0.3580" stop-color="#996297"/><stop offset="0.3920" stop-color="#994677"/><stop offset="0.4330" stop-color="#99305d"/><stop offset="0.5473" stop-color="#991038"/><stop offset="0.6652" stop-color="#990026"/><stop offset="0.9991" stop-color="#990010"/></linearGradient><linearGradient id="go61" gradientUnits="userSpaceOnUse" x1="970" y1="0" x2="1529" y2="0"><stop offset="0.0009" stop-color="#009987"/><stop offset="0.1082" stop-color="#009999"/><stop offset="0.2227" stop-color="#0187a1"/><stop offset="0.2531" stop-color="#207a99"/><stop offset="0.3623" stop-color="#995e97"/><stop offset="0.3962" stop-color="#994377"/><stop offset="0.4374" stop-color="#992e5e"/><stop offset="0.5519" stop-color="#990f39"/><stop offset="0.6628" stop-color="#990028"/><stop offset="0.9991" stop-color="#990011"/></linearGradient><linearGradient id="go62" gradientUnits="userSpaceOnUse" x1="971" y1="0" x2="1527" y2="0"><stop offset="0.0009" stop-color="#00998b"/><stop offset="0.0908" stop-color="#009899"/><stop offset="0.2221" stop-color="#0085a2"/><stop offset="0.2581" stop-color="#257599"/><stop offset="0.3660" stop-color="#995a97"/><stop offset="0.4002" stop-color="#994078"/><stop offset="0.4415" stop-color="#992c5f"/><stop offset="0.5567" stop-color="#990e3a"/><stop offset="0.6610" stop-color="#990029"/><stop offset="0.9991" stop-color="#990012"/></linearGradient><linearGradient id="go63" gradientUnits="userSpaceOnUse" x1="972" y1="0" x2="1525" y2="0"><stop offset="0.0009" stop-color="#00998f"/><stop offset="0.0714" stop-color="#009899"/><stop offset="0.2215" stop-color="#0082a4"/><stop offset="0.2649" stop-color="#2b7099"/><stop offset="0.3698" stop-color="#995697"/><stop offset="0.4042" stop-color="#993d78"/><stop offset="0.4458" stop-color="#992a5f"/><stop offset="0.5615" stop-color="#990c3b"/><stop offset="0.6591" stop-color="#99002b"/><stop offset="0.9991" stop-color="#990013"/></linearGradient><linearGradient id="go64" gradientUnits="userSpaceOnUse" x1="973" y1="0" x2="1523" y2="0"><stop offset="0.0009" stop-color="#009992"/><stop offset="0.0500" stop-color="#00989a"/><stop offset="0.2227" stop-color="#017fa5"/><stop offset="0.2700" stop-color="#2e6b99"/><stop offset="0.3736" stop-color="#995297"/><stop offset="0.4082" stop-color="#993a79"/><stop offset="0.4500" stop-color="#992860"/><stop offset="0.5645" stop-color="#990c3c"/><stop offset="0.6573" stop-color="#99002c"/><stop offset="0.9991" stop-color="#990013"/></linearGradient><linearGradient id="go65" gradientUnits="userSpaceOnUse" x1="973" y1="0" x2="1521" y2="0"><stop offset="0.0009" stop-color="#009996"/><stop offset="0.2235" stop-color="#007ca6"/><stop offset="0.2765" stop-color="#326799"/><stop offset="0.3786" stop-color="#994e97"/><stop offset="0.4133" stop-color="#993879"/><stop offset="0.4553" stop-color="#992661"/><stop offset="0.5703" stop-color="#990b3d"/><stop offset="0.6560" stop-color="#99002e"/><stop offset="0.9991" stop-color="#990014"/></linearGradient><linearGradient id="go66" gradientUnits="userSpaceOnUse" x1="974" y1="0" x2="1519" y2="0"><stop offset="0.0009" stop-color="#009899"/><stop offset="0.2229" stop-color="#0079a7"/><stop offset="0.2817" stop-color="#366399"/><stop offset="0.3826" stop-color="#994b97"/><stop offset="0.4174" stop-color="#993579"/><stop offset="0.4596" stop-color="#992461"/><stop offset="0.5752" stop-color="#990a3d"/><stop offset="0.6541" stop-color="#990030"/><stop offset="0.9991" stop-color="#990015"/></linearGradient><linearGradient id="go67" gradientUnits="userSpaceOnUse" x1="975" y1="0" x2="1517" y2="0"><stop offset="0.0009" stop-color="#00969a"/><stop offset="0.2223" stop-color="#0077a8"/><stop offset="0.2887" stop-color="#3b5e99"/><stop offset="0.3865" stop-color="#994797"/><stop offset="0.4216" stop-color="#99337a"/><stop offset="0.4640" stop-color="#992262"/><stop offset="0.5784" stop-color="#99093f"/><stop offset="0.6522" stop-color="#990032"/><stop offset="0.7482" stop-color="#990026"/><stop offset="0.9991" stop-color="#990016"/></linearGradient><linearGradient id="go68" gradientUnits="userSpaceOnUse" x1="976" y1="0" x2="1515" y2="0"><stop offset="0.0009" stop-color="#00939c"/><stop offset="0.2236" stop-color="#0074a9"/><stop offset="0.2941" stop-color="#3f5a99"/><stop offset="0.3887" stop-color="#994598"/><stop offset="0.4239" stop-color="#99317b"/><stop offset="0.4666" stop-color="#992164"/><stop offset="0.5816" stop-color="#990840"/><stop offset="0.6503" stop-color="#990033"/><stop offset="0.7505" stop-color="#990027"/><stop offset="0.9991" stop-color="#990017"/></linearGradient><linearGradient id="go69" gradientUnits="userSpaceOnUse" x1="976" y1="0" x2="1513" y2="0"><stop offset="0.0009" stop-color="#00919d"/><stop offset="0.2244" stop-color="#0071aa"/><stop offset="0.3007" stop-color="#425799"/><stop offset="0.3939" stop-color="#994298"/><stop offset="0.4292" stop-color="#992f7c"/><stop offset="0.4721" stop-color="#991f64"/><stop offset="0.5875" stop-color="#990740"/><stop offset="0.6490" stop-color="#990035"/><stop offset="0.7551" stop-color="#990028"/><stop offset="0.9991" stop-color="#990018"/></linearGradient><linearGradient id="go70" gradientUnits="userSpaceOnUse" x1="977" y1="0" x2="1511" y2="0"><stop offset="0.0009" stop-color="#008f9e"/><stop offset="0.2238" stop-color="#006fab"/><stop offset="0.3081" stop-color="#475399"/><stop offset="0.3979" stop-color="#993f98"/><stop offset="0.4335" stop-color="#992d7c"/><stop offset="0.4766" stop-color="#991e65"/><stop offset="0.5908" stop-color="#990742"/><stop offset="0.6470" stop-color="#990037"/><stop offset="0.7575" stop-color="#990029"/><stop offset="0.9991" stop-color="#990018"/></linearGradient><linearGradient id="go71" gradientUnits="userSpaceOnUse" x1="978" y1="0" x2="1509" y2="0"><stop offset="0.0009" stop-color="#008c9f"/><stop offset="0.2250" stop-color="#006cac"/><stop offset="0.3136" stop-color="#4a4f99"/><stop offset="0.4021" stop-color="#993c98"/><stop offset="0.4379" stop-color="#992b7d"/><stop offset="0.4812" stop-color="#991c65"/><stop offset="0.5960" stop-color="#990642"/><stop offset="0.6450" stop-color="#990039"/><stop offset="0.7618" stop-color="#99002a"/><stop offset="0.9991" stop-color="#990019"/></linearGradient><linearGradient id="go72" gradientUnits="userSpaceOnUse" x1="979" y1="0" x2="1507" y2="0"><stop offset="0.0009" stop-color="#008aa0"/><stop offset="0.2244" stop-color="#006aad"/><stop offset="0.3191" stop-color="#4d4c99"/><stop offset="0.4062" stop-color="#993998"/><stop offset="0.4422" stop-color="#99287d"/><stop offset="0.4858" stop-color="#991a66"/><stop offset="0.5994" stop-color="#990543"/><stop offset="0.7642" stop-color="#99002b"/><stop offset="0.9991" stop-color="#99001a"/></linearGradient><linearGradient id="go73" gradientUnits="userSpaceOnUse" x1="980" y1="0" x2="1505" y2="0"><stop offset="0.0010" stop-color="#0087a1"/><stop offset="0.2238" stop-color="#0068ae"/><stop offset="0.3267" stop-color="#524899"/><stop offset="0.4105" stop-color="#993698"/><stop offset="0.4467" stop-color="#99267d"/><stop offset="0.4905" stop-color="#991967"/><stop offset="0.6048" stop-color="#990444"/><stop offset="0.7667" stop-color="#99002c"/><stop offset="0.9990" stop-color="#99001b"/></linearGradient><linearGradient id="go74" gradientUnits="userSpaceOnUse" x1="980" y1="0" x2="1503" y2="0"><stop offset="0.0010" stop-color="#0085a2"/><stop offset="0.2266" stop-color="#0065ae"/><stop offset="0.3337" stop-color="#544599"/><stop offset="0.4159" stop-color="#993498"/><stop offset="0.4522" stop-color="#99247e"/><stop offset="0.4962" stop-color="#991767"/><stop offset="0.6090" stop-color="#990345"/><stop offset="0.7696" stop-color="#99002d"/><stop offset="0.9990" stop-color="#99001c"/></linearGradient><linearGradient id="go75" gradientUnits="userSpaceOnUse" x1="981" y1="0" x2="1501" y2="0"><stop offset="0.0010" stop-color="#0083a3"/><stop offset="0.2260" stop-color="#0063af"/><stop offset="0.3394" stop-color="#574299"/><stop offset="0.4202" stop-color="#993198"/><stop offset="0.4567" stop-color="#99227e"/><stop offset="0.5010" stop-color="#991668"/><stop offset="0.6144" stop-color="#990346"/><stop offset="0.7740" stop-color="#99002e"/><stop offset="0.9990" stop-color="#99001d"/></linearGradient><linearGradient id="go76" gradientUnits="userSpaceOnUse" x1="982" y1="0" x2="1499" y2="0"><stop offset="0.0010" stop-color="#0081a4"/><stop offset="0.2253" stop-color="#0061b0"/><stop offset="0.3453" stop-color="#5a3f99"/><stop offset="0.4246" stop-color="#992f98"/><stop offset="0.4613" stop-color="#99207e"/><stop offset="0.5058" stop-color="#991468"/><stop offset="0.6180" stop-color="#990247"/><stop offset="0.7766" stop-color="#99002f"/><stop offset="0.9990" stop-color="#99001e"/></linearGradient><linearGradient id="go77" gradientUnits="userSpaceOnUse" x1="983" y1="0" x2="1497" y2="0"><stop offset="0.0010" stop-color="#007ea5"/><stop offset="0.2267" stop-color="#005eb1"/><stop offset="0.3531" stop-color="#5e3b99"/><stop offset="0.4290" stop-color="#992c98"/><stop offset="0.5088" stop-color="#99136a"/><stop offset="0.6216" stop-color="#990148"/><stop offset="0.7792" stop-color="#990030"/><stop offset="0.9990" stop-color="#99001f"/></linearGradient><linearGradient id="go78" gradientUnits="userSpaceOnUse" x1="984" y1="0" x2="1495" y2="0"><stop offset="0.0010" stop-color="#007ca6"/><stop offset="0.2260" stop-color="#005cb1"/><stop offset="0.3591" stop-color="#603899"/><stop offset="0.4335" stop-color="#992a98"/><stop offset="0.5137" stop-color="#99126a"/><stop offset="0.6272" stop-color="#990049"/><stop offset="0.7838" stop-color="#990031"/><stop offset="0.9990" stop-color="#990020"/></linearGradient><linearGradient id="go79" gradientUnits="userSpaceOnUse" x1="985" y1="0" x2="1493" y2="0"><stop offset="0.0010" stop-color="#007aa7"/><stop offset="0.2254" stop-color="#005bb2"/><stop offset="0.3652" stop-color="#633699"/><stop offset="0.4380" stop-color="#992898"/><stop offset="0.5187" stop-color="#99116b"/><stop offset="0.6309" stop-color="#99004a"/><stop offset="0.7864" stop-color="#990032"/><stop offset="0.9990" stop-color="#990021"/></linearGradient><linearGradient id="go80" gradientUnits="userSpaceOnUse" x1="985" y1="0" x2="1491" y2="0"><stop offset="0.0010" stop-color="#0078a7"/><stop offset="0.2283" stop-color="#0158b3"/><stop offset="0.3745" stop-color="#663399"/><stop offset="0.4437" stop-color="#992598"/><stop offset="0.5247" stop-color="#990f6b"/><stop offset="0.6354" stop-color="#99004b"/><stop offset="0.7875" stop-color="#990033"/><stop offset="0.9990" stop-color="#990022"/></linearGradient><linearGradient id="go81" gradientUnits="userSpaceOnUse" x1="986" y1="0" x2="1490" y2="0"><stop offset="0.0010" stop-color="#0076a8"/><stop offset="0.2272" stop-color="#0056b3"/><stop offset="0.3800" stop-color="#693099"/><stop offset="0.4474" stop-color="#992398"/><stop offset="0.5288" stop-color="#990e6b"/><stop offset="0.6399" stop-color="#99004b"/><stop offset="0.7907" stop-color="#990034"/><stop offset="0.9990" stop-color="#990022"/></linearGradient><linearGradient id="go82" gradientUnits="userSpaceOnUse" x1="987" y1="0" x2="1488" y2="0"><stop offset="0.0010" stop-color="#0074a9"/><stop offset="0.2265" stop-color="#0055b4"/><stop offset="0.3862" stop-color="#6b2d99"/><stop offset="0.4521" stop-color="#992198"/><stop offset="0.5339" stop-color="#990d6c"/><stop offset="0.6437" stop-color="#99004c"/><stop offset="0.7934" stop-color="#990035"/><stop offset="0.9990" stop-color="#990023"/></linearGradient><linearGradient id="go83" gradientUnits="userSpaceOnUse" x1="988" y1="0" x2="1486" y2="0"><stop offset="0.0010" stop-color="#0072aa"/><stop offset="0.2279" stop-color="#0152b5"/><stop offset="0.3946" stop-color="#6e2b99"/><stop offset="0.4568" stop-color="#991f98"/><stop offset="0.5371" stop-color="#990c6d"/><stop offset="0.6476" stop-color="#99004d"/><stop offset="0.7962" stop-color="#990036"/><stop offset="0.9990" stop-color="#990024"/></linearGradient><linearGradient id="go84" gradientUnits="userSpaceOnUse" x1="989" y1="0" x2="1484" y2="0"><stop offset="0.0010" stop-color="#0070ab"/><stop offset="0.2273" stop-color="#0051b5"/><stop offset="0.4010" stop-color="#702899"/><stop offset="0.4616" stop-color="#991d98"/><stop offset="0.5424" stop-color="#990a6e"/><stop offset="0.6535" stop-color="#99004e"/><stop offset="0.8010" stop-color="#990037"/><stop offset="0.9990" stop-color="#990025"/></linearGradient><linearGradient id="go85" gradientUnits="userSpaceOnUse" x1="990" y1="0" x2="1482" y2="0"><stop offset="0.0010" stop-color="#006eab"/><stop offset="0.2266" stop-color="#004fb6"/><stop offset="0.4075" stop-color="#722699"/><stop offset="0.4665" stop-color="#991b98"/><stop offset="0.5478" stop-color="#99096e"/><stop offset="0.6575" stop-color="#99004f"/><stop offset="0.8039" stop-color="#990038"/><stop offset="0.9990" stop-color="#990026"/></linearGradient><linearGradient id="go86" gradientUnits="userSpaceOnUse" x1="991" y1="0" x2="1480" y2="0"><stop offset="0.0010" stop-color="#006cac"/><stop offset="0.2280" stop-color="#014db6"/><stop offset="0.4162" stop-color="#762399"/><stop offset="0.4693" stop-color="#991a99"/><stop offset="0.5511" stop-color="#99086f"/><stop offset="0.6595" stop-color="#990050"/><stop offset="0.8047" stop-color="#990039"/><stop offset="0.9990" stop-color="#990027"/></linearGradient><linearGradient id="go87" gradientUnits="userSpaceOnUse" x1="992" y1="0" x2="1478" y2="0"><stop offset="0.0010" stop-color="#006aad"/><stop offset="0.2274" stop-color="#004bb7"/><stop offset="0.4228" stop-color="#782199"/><stop offset="0.4743" stop-color="#991899"/><stop offset="0.5566" stop-color="#990770"/><stop offset="0.6636" stop-color="#990051"/><stop offset="0.8076" stop-color="#99003a"/><stop offset="0.9990" stop-color="#990029"/></linearGradient><linearGradient id="go88" gradientUnits="userSpaceOnUse" x1="993" y1="0" x2="1476" y2="0"><stop offset="0.0010" stop-color="#0068ad"/><stop offset="0.2267" stop-color="#004ab7"/><stop offset="0.4296" stop-color="#791f99"/><stop offset="0.4793" stop-color="#991699"/><stop offset="0.5621" stop-color="#990670"/><stop offset="0.6698" stop-color="#990052"/><stop offset="0.8126" stop-color="#99003b"/><stop offset="0.9990" stop-color="#99002a"/></linearGradient><linearGradient id="go89" gradientUnits="userSpaceOnUse" x1="993" y1="0" x2="1474" y2="0"><stop offset="0.0010" stop-color="#0066ae"/><stop offset="0.2277" stop-color="#0048b8"/><stop offset="0.4397" stop-color="#7c1c99"/><stop offset="0.4854" stop-color="#991598"/><stop offset="0.5686" stop-color="#990570"/><stop offset="0.6746" stop-color="#990053"/><stop offset="0.8139" stop-color="#99003c"/><stop offset="0.9990" stop-color="#99002b"/></linearGradient><linearGradient id="go90" gradientUnits="userSpaceOnUse" x1="994" y1="0" x2="1472" y2="0"><stop offset="0.0010" stop-color="#0064af"/><stop offset="0.2291" stop-color="#0046b8"/><stop offset="0.3421" stop-color="#462ea9"/><stop offset="0.4467" stop-color="#7e1a99"/><stop offset="0.4906" stop-color="#991398"/><stop offset="0.5722" stop-color="#990471"/><stop offset="0.6789" stop-color="#990054"/><stop offset="0.8169" stop-color="#99003d"/><stop offset="0.9990" stop-color="#99002c"/></linearGradient><linearGradient id="go91" gradientUnits="userSpaceOnUse" x1="995" y1="0" x2="1470" y2="0"><stop offset="0.0011" stop-color="#0063af"/><stop offset="0.2284" stop-color="#0045b9"/><stop offset="0.3463" stop-color="#472ca9"/><stop offset="0.4537" stop-color="#801899"/><stop offset="0.4958" stop-color="#991198"/><stop offset="0.5779" stop-color="#990372"/><stop offset="0.6832" stop-color="#990055"/><stop offset="0.8200" stop-color="#99003e"/><stop offset="0.9989" stop-color="#99002d"/></linearGradient><linearGradient id="go92" gradientUnits="userSpaceOnUse" x1="996" y1="0" x2="1468" y2="0"><stop offset="0.0011" stop-color="#0061b0"/><stop offset="0.2278" stop-color="#0043ba"/><stop offset="0.3485" stop-color="#482baa"/><stop offset="0.5011" stop-color="#991098"/><stop offset="0.5816" stop-color="#990273"/><stop offset="0.6875" stop-color="#990056"/><stop offset="0.8231" stop-color="#99003f"/><stop offset="0.9989" stop-color="#99002e"/></linearGradient><linearGradient id="go93" gradientUnits="userSpaceOnUse" x1="997" y1="0" x2="1466" y2="0"><stop offset="0.0011" stop-color="#005fb1"/><stop offset="0.2292" stop-color="#0041ba"/><stop offset="0.3507" stop-color="#4829aa"/><stop offset="0.5064" stop-color="#990e98"/><stop offset="0.5874" stop-color="#990173"/><stop offset="0.6919" stop-color="#990056"/><stop offset="0.8262" stop-color="#990040"/><stop offset="0.9989" stop-color="#99002f"/></linearGradient><linearGradient id="go94" gradientUnits="userSpaceOnUse" x1="998" y1="0" x2="1464" y2="0"><stop offset="0.0011" stop-color="#005db1"/><stop offset="0.2285" stop-color="#0040ba"/><stop offset="0.3573" stop-color="#4a27aa"/><stop offset="0.5118" stop-color="#990d98"/><stop offset="0.5933" stop-color="#990074"/><stop offset="0.6964" stop-color="#990057"/><stop offset="0.8294" stop-color="#990041"/><stop offset="0.9989" stop-color="#990030"/></linearGradient><linearGradient id="go95" gradientUnits="userSpaceOnUse" x1="999" y1="0" x2="1462" y2="0"><stop offset="0.0011" stop-color="#005bb2"/><stop offset="0.2279" stop-color="#003fbb"/><stop offset="0.3639" stop-color="#4d25aa"/><stop offset="0.5173" stop-color="#990b98"/><stop offset="0.5972" stop-color="#990075"/><stop offset="0.7009" stop-color="#990058"/><stop offset="0.8326" stop-color="#990042"/><stop offset="0.9989" stop-color="#990031"/></linearGradient><linearGradient id="go96" gradientUnits="userSpaceOnUse" x1="1000" y1="0" x2="1460" y2="0"><stop offset="0.0011" stop-color="#005ab2"/><stop offset="0.2293" stop-color="#003dbb"/><stop offset="0.3663" stop-color="#4d24aa"/><stop offset="0.5228" stop-color="#990a98"/><stop offset="0.6033" stop-color="#990075"/><stop offset="0.7054" stop-color="#990059"/><stop offset="0.8337" stop-color="#990044"/><stop offset="0.9989" stop-color="#990033"/></linearGradient><linearGradient id="go97" gradientUnits="userSpaceOnUse" x1="1001" y1="0" x2="1458" y2="0"><stop offset="0.0011" stop-color="#0058b3"/><stop offset="0.2287" stop-color="#003cbc"/><stop offset="0.3731" stop-color="#4f22aa"/><stop offset="0.5284" stop-color="#990998"/><stop offset="0.6094" stop-color="#990075"/><stop offset="0.7101" stop-color="#99005a"/><stop offset="0.8370" stop-color="#990045"/><stop offset="0.9989" stop-color="#990034"/></linearGradient><linearGradient id="go98" gradientUnits="userSpaceOnUse" x1="1002" y1="0" x2="1456" y2="0"><stop offset="0.0011" stop-color="#0056b3"/><stop offset="0.2280" stop-color="#003abc"/><stop offset="0.3800" stop-color="#511faa"/><stop offset="0.5341" stop-color="#990798"/><stop offset="0.6134" stop-color="#990076"/><stop offset="0.7148" stop-color="#99005b"/><stop offset="0.8403" stop-color="#990046"/><stop offset="0.9989" stop-color="#990035"/></linearGradient><linearGradient id="go99" gradientUnits="userSpaceOnUse" x1="1003" y1="0" x2="1454" y2="0"><stop offset="0.0011" stop-color="#0055b4"/><stop offset="0.2295" stop-color="#0039bd"/><stop offset="0.3847" stop-color="#531eaa"/><stop offset="0.5399" stop-color="#990698"/><stop offset="0.6197" stop-color="#990077"/><stop offset="0.7195" stop-color="#99005c"/><stop offset="0.8437" stop-color="#990047"/><stop offset="0.9989" stop-color="#990036"/></linearGradient><linearGradient id="go100" gradientUnits="userSpaceOnUse" x1="1004" y1="0" x2="1452" y2="0"><stop offset="0.0011" stop-color="#0053b5"/><stop offset="0.2288" stop-color="#0038bd"/><stop offset="0.3895" stop-color="#541cab"/><stop offset="0.5458" stop-color="#990598"/><stop offset="0.6239" stop-color="#990078"/><stop offset="0.7221" stop-color="#99005d"/><stop offset="0.8449" stop-color="#990048"/><stop offset="0.9989" stop-color="#990037"/></linearGradient><linearGradient id="go101" gradientUnits="userSpaceOnUse" x1="1005" y1="0" x2="1450" y2="0"><stop offset="0.0011" stop-color="#0052b5"/><stop offset="0.2281" stop-color="#0036bd"/><stop offset="0.3966" stop-color="#561aaa"/><stop offset="0.5517" stop-color="#990398"/><stop offset="0.6303" stop-color="#990078"/><stop offset="0.7270" stop-color="#99005e"/><stop offset="0.8483" stop-color="#990049"/><stop offset="0.9989" stop-color="#990039"/></linearGradient><linearGradient id="go102" gradientUnits="userSpaceOnUse" x1="1006" y1="0" x2="1449" y2="0"><stop offset="0.0011" stop-color="#0050b6"/><stop offset="0.2291" stop-color="#0135be"/><stop offset="0.4007" stop-color="#5719ab"/><stop offset="0.5564" stop-color="#990298"/><stop offset="0.6332" stop-color="#990079"/><stop offset="0.7302" stop-color="#99005f"/><stop offset="0.9989" stop-color="#99003a"/></linearGradient><linearGradient id="go103" gradientUnits="userSpaceOnUse" x1="1007" y1="0" x2="1447" y2="0"><stop offset="0.0011" stop-color="#004eb6"/><stop offset="0.2284" stop-color="#0034be"/><stop offset="0.4057" stop-color="#5817ab"/><stop offset="0.5625" stop-color="#990198"/><stop offset="0.6398" stop-color="#990079"/><stop offset="0.7352" stop-color="#990060"/><stop offset="0.9989" stop-color="#99003b"/></linearGradient><linearGradient id="go104" gradientUnits="userSpaceOnUse" x1="1008" y1="0" x2="1445" y2="0"><stop offset="0.0011" stop-color="#004db7"/><stop offset="0.2277" stop-color="#0032be"/><stop offset="0.4085" stop-color="#5816ab"/><stop offset="0.5664" stop-color="#990099"/><stop offset="0.6442" stop-color="#99007a"/><stop offset="0.7403" stop-color="#990061"/><stop offset="0.9989" stop-color="#99003c"/></linearGradient><linearGradient id="go105" gradientUnits="userSpaceOnUse" x1="1009" y1="0" x2="1443" y2="0"><stop offset="0.0012" stop-color="#004bb7"/><stop offset="0.2293" stop-color="#0131bf"/><stop offset="0.4136" stop-color="#5915ab"/><stop offset="0.5726" stop-color="#990099"/><stop offset="0.6509" stop-color="#99007a"/><stop offset="0.7431" stop-color="#990062"/><stop offset="0.9988" stop-color="#99003e"/></linearGradient><linearGradient id="go106" gradientUnits="userSpaceOnUse" x1="1010" y1="0" x2="1441" y2="0"><stop offset="0.0012" stop-color="#004ab7"/><stop offset="0.2285" stop-color="#0030bf"/><stop offset="0.4188" stop-color="#5a13ac"/><stop offset="0.5789" stop-color="#990099"/><stop offset="0.6555" stop-color="#99007b"/><stop offset="0.7483" stop-color="#990063"/><stop offset="0.9988" stop-color="#99003f"/></linearGradient><linearGradient id="go107" gradientUnits="userSpaceOnUse" x1="1011" y1="0" x2="1439" y2="0"><stop offset="0.0012" stop-color="#0048b8"/><stop offset="0.2278" stop-color="#002fc0"/><stop offset="0.4264" stop-color="#5c11ab"/><stop offset="0.5853" stop-color="#990099"/><stop offset="0.6624" stop-color="#99007c"/><stop offset="0.7535" stop-color="#990064"/><stop offset="0.9988" stop-color="#990040"/></linearGradient><linearGradient id="go108" gradientUnits="userSpaceOnUse" x1="1013" y1="0" x2="1437" y2="0"><stop offset="0.0012" stop-color="#0047b8"/><stop offset="0.2252" stop-color="#002ec0"/><stop offset="0.4328" stop-color="#5e10ab"/><stop offset="0.5908" stop-color="#990099"/><stop offset="0.6663" stop-color="#99007d"/><stop offset="0.7583" stop-color="#990065"/><stop offset="0.9988" stop-color="#990042"/></linearGradient><linearGradient id="go109" gradientUnits="userSpaceOnUse" x1="1014" y1="0" x2="1435" y2="0"><stop offset="0.0012" stop-color="#0045b9"/><stop offset="0.2268" stop-color="#002cc0"/><stop offset="0.4359" stop-color="#5e0fac"/><stop offset="0.5499" stop-color="#8a00a0"/><stop offset="0.5974" stop-color="#990099"/><stop offset="0.6734" stop-color="#99007d"/><stop offset="0.7613" stop-color="#990066"/><stop offset="0.9988" stop-color="#990043"/></linearGradient><linearGradient id="go110" gradientUnits="userSpaceOnUse" x1="1015" y1="0" x2="1433" y2="0"><stop offset="0.0012" stop-color="#0044b9"/><stop offset="0.2261" stop-color="#002bc0"/><stop offset="0.4438" stop-color="#600dac"/><stop offset="0.5467" stop-color="#8700a1"/><stop offset="0.6041" stop-color="#990099"/><stop offset="0.6782" stop-color="#99007e"/><stop offset="0.7667" stop-color="#990067"/><stop offset="0.9988" stop-color="#990044"/></linearGradient><linearGradient id="go111" gradientUnits="userSpaceOnUse" x1="1016" y1="0" x2="1431" y2="0"><stop offset="0.0012" stop-color="#0043ba"/><stop offset="0.2253" stop-color="#002ac1"/><stop offset="0.4518" stop-color="#620bac"/><stop offset="0.5434" stop-color="#8400a2"/><stop offset="0.6108" stop-color="#990099"/><stop offset="0.6855" stop-color="#99007e"/><stop offset="0.7723" stop-color="#990068"/><stop offset="0.9988" stop-color="#990046"/></linearGradient><linearGradient id="go112" gradientUnits="userSpaceOnUse" x1="1017" y1="0" x2="1429" y2="0"><stop offset="0.0012" stop-color="#0041ba"/><stop offset="0.2269" stop-color="#0029c1"/><stop offset="0.5376" stop-color="#8000a4"/><stop offset="0.6177" stop-color="#990099"/><stop offset="0.7755" stop-color="#990069"/><stop offset="0.9988" stop-color="#990047"/></linearGradient><linearGradient id="go113" gradientUnits="userSpaceOnUse" x1="1018" y1="0" x2="1427" y2="0"><stop offset="0.0012" stop-color="#0040bb"/><stop offset="0.2262" stop-color="#0028c1"/><stop offset="0.5367" stop-color="#7e00a5"/><stop offset="0.6247" stop-color="#990099"/><stop offset="0.7812" stop-color="#99006a"/><stop offset="0.9988" stop-color="#990049"/></linearGradient><linearGradient id="go114" gradientUnits="userSpaceOnUse" x1="1019" y1="0" x2="1425" y2="0"><stop offset="0.0012" stop-color="#003fbb"/><stop offset="0.2254" stop-color="#0027c2"/><stop offset="0.5333" stop-color="#7c00a6"/><stop offset="0.6318" stop-color="#990099"/><stop offset="0.7869" stop-color="#99006b"/><stop offset="0.9988" stop-color="#99004a"/></linearGradient><linearGradient id="go115" gradientUnits="userSpaceOnUse" x1="1020" y1="0" x2="1423" y2="0"><stop offset="0.0012" stop-color="#003dbb"/><stop offset="0.2270" stop-color="#0026c2"/><stop offset="0.5298" stop-color="#7900a7"/><stop offset="0.6365" stop-color="#990099"/><stop offset="0.7903" stop-color="#99006c"/><stop offset="0.9988" stop-color="#99004c"/></linearGradient><linearGradient id="go116" gradientUnits="userSpaceOnUse" x1="1021" y1="0" x2="1421" y2="0"><stop offset="0.0013" stop-color="#003cbc"/><stop offset="0.2263" stop-color="#0025c2"/><stop offset="0.5262" stop-color="#7600a8"/><stop offset="0.6438" stop-color="#990099"/><stop offset="0.7963" stop-color="#99006d"/><stop offset="0.9988" stop-color="#99004d"/></linearGradient><linearGradient id="go117" gradientUnits="userSpaceOnUse" x1="1023" y1="0" x2="1419" y2="0"><stop offset="0.0013" stop-color="#003bbc"/><stop offset="0.2235" stop-color="#0024c3"/><stop offset="0.5215" stop-color="#7300a9"/><stop offset="0.6503" stop-color="#990099"/><stop offset="0.7992" stop-color="#99006f"/><stop offset="0.9987" stop-color="#99004f"/></linearGradient><linearGradient id="go118" gradientUnits="userSpaceOnUse" x1="1024" y1="0" x2="1417" y2="0"><stop offset="0.0013" stop-color="#0039bd"/><stop offset="0.2252" stop-color="#0023c3"/><stop offset="0.5178" stop-color="#7000aa"/><stop offset="0.6578" stop-color="#990099"/><stop offset="0.8053" stop-color="#99006f"/><stop offset="0.9987" stop-color="#990050"/></linearGradient><linearGradient id="go119" gradientUnits="userSpaceOnUse" x1="1025" y1="0" x2="1415" y2="0"><stop offset="0.0013" stop-color="#0038bd"/><stop offset="0.2244" stop-color="#0022c3"/><stop offset="0.5141" stop-color="#6d00ab"/><stop offset="0.6654" stop-color="#990099"/><stop offset="0.8090" stop-color="#990071"/><stop offset="0.9987" stop-color="#990052"/></linearGradient><linearGradient id="go120" gradientUnits="userSpaceOnUse" x1="1026" y1="0" x2="1413" y2="0"><stop offset="0.0013" stop-color="#0037bd"/><stop offset="0.2235" stop-color="#0021c3"/><stop offset="0.5103" stop-color="#6b00ac"/><stop offset="0.6731" stop-color="#990099"/><stop offset="0.8152" stop-color="#990072"/><stop offset="0.9987" stop-color="#990054"/></linearGradient><linearGradient id="go121" gradientUnits="userSpaceOnUse" x1="1027" y1="0" x2="1411" y2="0"><stop offset="0.0013" stop-color="#0036be"/><stop offset="0.2253" stop-color="#0120c4"/><stop offset="0.5065" stop-color="#6800ad"/><stop offset="0.6810" stop-color="#990099"/><stop offset="0.8190" stop-color="#990073"/><stop offset="0.9987" stop-color="#990055"/></linearGradient><linearGradient id="go122" gradientUnits="userSpaceOnUse" x1="1028" y1="0" x2="1410" y2="0"><stop offset="0.0013" stop-color="#0034be"/><stop offset="0.2238" stop-color="#001fc4"/><stop offset="0.5013" stop-color="#6500ae"/><stop offset="0.6872" stop-color="#990099"/><stop offset="0.8233" stop-color="#990074"/><stop offset="0.9987" stop-color="#990057"/></linearGradient><linearGradient id="go123" gradientUnits="userSpaceOnUse" x1="1029" y1="0" x2="1408" y2="0"><stop offset="0.0013" stop-color="#0033be"/><stop offset="0.2230" stop-color="#001ec4"/><stop offset="0.5000" stop-color="#6300af"/><stop offset="0.6953" stop-color="#990099"/><stop offset="0.8298" stop-color="#990074"/><stop offset="0.9987" stop-color="#990058"/></linearGradient><linearGradient id="go124" gradientUnits="userSpaceOnUse" x1="1031" y1="0" x2="1406" y2="0"><stop offset="0.0013" stop-color="#0032bf"/><stop offset="0.2227" stop-color="#011dc4"/><stop offset="0.4947" stop-color="#6000b0"/><stop offset="0.7027" stop-color="#990099"/><stop offset="0.8333" stop-color="#990076"/><stop offset="0.9987" stop-color="#99005a"/></linearGradient><linearGradient id="go125" gradientUnits="userSpaceOnUse" x1="1032" y1="0" x2="1404" y2="0"><stop offset="0.0013" stop-color="#0031bf"/><stop offset="0.2218" stop-color="#001dc5"/><stop offset="0.4906" stop-color="#5e00b1"/><stop offset="0.7110" stop-color="#990099"/><stop offset="0.8401" stop-color="#990077"/><stop offset="0.9987" stop-color="#99005c"/></linearGradient><linearGradient id="go126" gradientUnits="userSpaceOnUse" x1="1033" y1="0" x2="1402" y2="0"><stop offset="0.0014" stop-color="#0030bf"/><stop offset="0.2209" stop-color="#001cc5"/><stop offset="0.4864" stop-color="#5b00b2"/><stop offset="0.7195" stop-color="#990099"/><stop offset="0.8442" stop-color="#990078"/><stop offset="0.9986" stop-color="#99005e"/></linearGradient><linearGradient id="go127" gradientUnits="userSpaceOnUse" x1="1034" y1="0" x2="1400" y2="0"><stop offset="0.0014" stop-color="#002fc0"/><stop offset="0.2199" stop-color="#001bc5"/><stop offset="0.4822" stop-color="#5900b3"/><stop offset="0.7281" stop-color="#990099"/><stop offset="0.8511" stop-color="#990079"/><stop offset="0.9986" stop-color="#990060"/></linearGradient><linearGradient id="go128" gradientUnits="userSpaceOnUse" x1="1035" y1="0" x2="1398" y2="0"><stop offset="0.0014" stop-color="#002dc0"/><stop offset="0.2218" stop-color="#001ac5"/><stop offset="0.4780" stop-color="#5600b4"/><stop offset="0.7369" stop-color="#990099"/><stop offset="0.8554" stop-color="#99007a"/><stop offset="0.9986" stop-color="#990061"/></linearGradient><linearGradient id="go129" gradientUnits="userSpaceOnUse" x1="1037" y1="0" x2="1396" y2="0"><stop offset="0.0014" stop-color="#002cc0"/><stop offset="0.2187" stop-color="#0019c5"/><stop offset="0.4721" stop-color="#5300b4"/><stop offset="0.7451" stop-color="#990099"/><stop offset="0.8593" stop-color="#99007c"/><stop offset="0.9986" stop-color="#990063"/></linearGradient><linearGradient id="go130" gradientUnits="userSpaceOnUse" x1="1038" y1="0" x2="1394" y2="0"><stop offset="0.0014" stop-color="#002bc1"/><stop offset="0.2177" stop-color="#0018c6"/><stop offset="0.4677" stop-color="#5100b5"/><stop offset="0.7514" stop-color="#980099"/><stop offset="0.8666" stop-color="#99007c"/><stop offset="0.9986" stop-color="#990065"/></linearGradient><linearGradient id="go131" gradientUnits="userSpaceOnUse" x1="1039" y1="0" x2="1392" y2="0"><stop offset="0.0014" stop-color="#002ac1"/><stop offset="0.2195" stop-color="#0017c6"/><stop offset="0.4632" stop-color="#4e00b6"/><stop offset="0.7606" stop-color="#980099"/><stop offset="0.8711" stop-color="#99007e"/><stop offset="0.9986" stop-color="#990067"/></linearGradient><linearGradient id="go132" gradientUnits="userSpaceOnUse" x1="1040" y1="0" x2="1390" y2="0"><stop offset="0.0014" stop-color="#0029c1"/><stop offset="0.2186" stop-color="#0017c6"/><stop offset="0.4586" stop-color="#4c00b7"/><stop offset="0.7700" stop-color="#990099"/><stop offset="0.9986" stop-color="#990069"/></linearGradient><linearGradient id="go133" gradientUnits="userSpaceOnUse" x1="1041" y1="0" x2="1388" y2="0"><stop offset="0.0014" stop-color="#0028c1"/><stop offset="0.2176" stop-color="#0016c6"/><stop offset="0.4539" stop-color="#4900b8"/><stop offset="0.7795" stop-color="#990099"/><stop offset="0.9986" stop-color="#99006b"/></linearGradient><linearGradient id="go134" gradientUnits="userSpaceOnUse" x1="1043" y1="0" x2="1386" y2="0"><stop offset="0.0015" stop-color="#0027c2"/><stop offset="0.2172" stop-color="#0015c6"/><stop offset="0.4475" stop-color="#4700b8"/><stop offset="0.7799" stop-color="#97009a"/><stop offset="0.9985" stop-color="#99006d"/></linearGradient><linearGradient id="go135" gradientUnits="userSpaceOnUse" x1="1044" y1="0" x2="1384" y2="0"><stop offset="0.0015" stop-color="#0026c2"/><stop offset="0.2162" stop-color="#0014c7"/><stop offset="0.4426" stop-color="#4400b9"/><stop offset="0.7779" stop-color="#95009b"/><stop offset="0.9985" stop-color="#99006f"/></linearGradient><linearGradient id="go136" gradientUnits="userSpaceOnUse" x1="1045" y1="0" x2="1382" y2="0"><stop offset="0.0015" stop-color="#0025c2"/><stop offset="0.2151" stop-color="#0014c7"/><stop offset="0.4377" stop-color="#4200ba"/><stop offset="0.7760" stop-color="#92009c"/><stop offset="0.8116" stop-color="#990099"/><stop offset="0.9985" stop-color="#990071"/></linearGradient><linearGradient id="go137" gradientUnits="userSpaceOnUse" x1="1046" y1="0" x2="1380" y2="0"><stop offset="0.0015" stop-color="#0024c3"/><stop offset="0.2171" stop-color="#0013c7"/><stop offset="0.4326" stop-color="#4000bb"/><stop offset="0.7740" stop-color="#90009d"/><stop offset="0.8219" stop-color="#990099"/><stop offset="0.9985" stop-color="#990073"/></linearGradient><linearGradient id="go138" gradientUnits="userSpaceOnUse" x1="1047" y1="0" x2="1378" y2="0"><stop offset="0.0015" stop-color="#0023c3"/><stop offset="0.2160" stop-color="#0012c7"/><stop offset="0.4305" stop-color="#3e00bb"/><stop offset="0.7689" stop-color="#8d009f"/><stop offset="0.8323" stop-color="#990099"/><stop offset="0.9985" stop-color="#990076"/></linearGradient><linearGradient id="go139" gradientUnits="userSpaceOnUse" x1="1049" y1="0" x2="1376" y2="0"><stop offset="0.0015" stop-color="#0022c3"/><stop offset="0.2125" stop-color="#0012c7"/><stop offset="0.4235" stop-color="#3c00bc"/><stop offset="0.7630" stop-color="#8b00a0"/><stop offset="0.8425" stop-color="#990099"/><stop offset="0.9985" stop-color="#990078"/></linearGradient><linearGradient id="go140" gradientUnits="userSpaceOnUse" x1="1050" y1="0" x2="1374" y2="0"><stop offset="0.0015" stop-color="#0021c3"/><stop offset="0.2114" stop-color="#0011c8"/><stop offset="0.4182" stop-color="#3900bc"/><stop offset="0.7608" stop-color="#8800a1"/><stop offset="0.8534" stop-color="#990099"/><stop offset="0.9985" stop-color="#99007a"/></linearGradient><linearGradient id="go141" gradientUnits="userSpaceOnUse" x1="1051" y1="0" x2="1372" y2="0"><stop offset="0.0016" stop-color="#0020c4"/><stop offset="0.2134" stop-color="#0010c8"/><stop offset="0.4128" stop-color="#3700bd"/><stop offset="0.7523" stop-color="#8500a2"/><stop offset="0.8614" stop-color="#990099"/><stop offset="0.9984" stop-color="#99007c"/></linearGradient><linearGradient id="go142" gradientUnits="userSpaceOnUse" x1="1052" y1="0" x2="1371" y2="0"><stop offset="0.0016" stop-color="#001fc4"/><stop offset="0.2116" stop-color="#000fc8"/><stop offset="0.4060" stop-color="#3500be"/><stop offset="0.7476" stop-color="#8300a3"/><stop offset="0.8699" stop-color="#990099"/><stop offset="0.9984" stop-color="#99007e"/></linearGradient><linearGradient id="go143" gradientUnits="userSpaceOnUse" x1="1054" y1="0" x2="1369" y2="0"><stop offset="0.0016" stop-color="#001ec4"/><stop offset="0.2079" stop-color="#000fc8"/><stop offset="0.3984" stop-color="#3300be"/><stop offset="0.7413" stop-color="#8000a4"/><stop offset="0.8810" stop-color="#990099"/><stop offset="0.9984" stop-color="#990081"/></linearGradient><linearGradient id="go144" gradientUnits="userSpaceOnUse" x1="1055" y1="0" x2="1367" y2="0"><stop offset="0.0016" stop-color="#001dc4"/><stop offset="0.2099" stop-color="#000ec8"/><stop offset="0.3926" stop-color="#3000bf"/><stop offset="0.7324" stop-color="#7c00a6"/><stop offset="0.8926" stop-color="#990099"/><stop offset="0.9984" stop-color="#990083"/></linearGradient><linearGradient id="go145" gradientUnits="userSpaceOnUse" x1="1056" y1="0" x2="1365" y2="0"><stop offset="0.0016" stop-color="#001cc5"/><stop offset="0.2087" stop-color="#000dc9"/><stop offset="0.3867" stop-color="#2e00c0"/><stop offset="0.7233" stop-color="#7900a7"/><stop offset="0.9045" stop-color="#990099"/><stop offset="0.9984" stop-color="#990086"/></linearGradient><linearGradient id="go146" gradientUnits="userSpaceOnUse" x1="1057" y1="0" x2="1363" y2="0"><stop offset="0.0016" stop-color="#001bc5"/><stop offset="0.2075" stop-color="#000dc9"/><stop offset="0.3807" stop-color="#2c00c0"/><stop offset="0.7141" stop-color="#7500a8"/><stop offset="0.9167" stop-color="#990099"/><stop offset="0.9984" stop-color="#990088"/></linearGradient><linearGradient id="go147" gradientUnits="userSpaceOnUse" x1="1059" y1="0" x2="1361" y2="0"><stop offset="0.0017" stop-color="#001ac5"/><stop offset="0.2070" stop-color="#000cc9"/><stop offset="0.3725" stop-color="#2a00c1"/><stop offset="0.7003" stop-color="#7100aa"/><stop offset="0.9255" stop-color="#980099"/><stop offset="0.9983" stop-color="#99008b"/></linearGradient><linearGradient id="go148" gradientUnits="userSpaceOnUse" x1="1060" y1="0" x2="1359" y2="0"><stop offset="0.0017" stop-color="#0019c5"/><stop offset="0.2057" stop-color="#000cc9"/><stop offset="0.3662" stop-color="#2800c2"/><stop offset="0.6906" stop-color="#6e00ab"/><stop offset="0.9381" stop-color="#980099"/><stop offset="0.9983" stop-color="#99008d"/></linearGradient><linearGradient id="go149" gradientUnits="userSpaceOnUse" x1="1061" y1="0" x2="1357" y2="0"><stop offset="0.0017" stop-color="#0018c6"/><stop offset="0.2044" stop-color="#000bc9"/><stop offset="0.3598" stop-color="#2600c2"/><stop offset="0.6774" stop-color="#6a00ad"/><stop offset="0.9510" stop-color="#980099"/><stop offset="0.9983" stop-color="#990090"/></linearGradient><linearGradient id="go150" gradientUnits="userSpaceOnUse" x1="1063" y1="0" x2="1355" y2="0"><stop offset="0.0017" stop-color="#0017c6"/><stop offset="0.2038" stop-color="#000ac9"/><stop offset="0.3510" stop-color="#2400c3"/><stop offset="0.6592" stop-color="#6500af"/><stop offset="0.9127" stop-color="#91009d"/><stop offset="0.9983" stop-color="#990093"/></linearGradient><linearGradient id="go151" gradientUnits="userSpaceOnUse" x1="1064" y1="0" x2="1353" y2="0"><stop offset="0.0017" stop-color="#0017c6"/><stop offset="0.2024" stop-color="#000aca"/><stop offset="0.3443" stop-color="#2100c3"/><stop offset="0.6419" stop-color="#6000b0"/><stop offset="0.9983" stop-color="#990095"/></linearGradient><linearGradient id="go152" gradientUnits="userSpaceOnUse" x1="1065" y1="0" x2="1351" y2="0"><stop offset="0.0017" stop-color="#0016c6"/><stop offset="0.2010" stop-color="#0009ca"/><stop offset="0.3374" stop-color="#1f00c4"/><stop offset="0.6241" stop-color="#5b00b2"/><stop offset="0.9983" stop-color="#990098"/></linearGradient><linearGradient id="go153" gradientUnits="userSpaceOnUse" x1="1067" y1="0" x2="1349" y2="0"><stop offset="0.0018" stop-color="#0015c7"/><stop offset="0.2004" stop-color="#0008ca"/><stop offset="0.3280" stop-color="#1d00c4"/><stop offset="0.6152" stop-color="#5800b3"/><stop offset="0.9982" stop-color="#98009a"/></linearGradient><linearGradient id="go154" gradientUnits="userSpaceOnUse" x1="1068" y1="0" x2="1347" y2="0"><stop offset="0.0018" stop-color="#0014c7"/><stop offset="0.1989" stop-color="#0008ca"/><stop offset="0.3208" stop-color="#1b00c5"/><stop offset="0.6147" stop-color="#5700b3"/><stop offset="0.9982" stop-color="#96009b"/></linearGradient><linearGradient id="go155" gradientUnits="userSpaceOnUse" x1="1069" y1="0" x2="1345" y2="0"><stop offset="0.0018" stop-color="#0013c7"/><stop offset="0.1975" stop-color="#0007ca"/><stop offset="0.3134" stop-color="#1900c5"/><stop offset="0.6178" stop-color="#5600b3"/><stop offset="0.9982" stop-color="#94009c"/></linearGradient><linearGradient id="go156" gradientUnits="userSpaceOnUse" x1="1071" y1="0" x2="1343" y2="0"><stop offset="0.0018" stop-color="#0012c7"/><stop offset="0.1967" stop-color="#0007ca"/><stop offset="0.3070" stop-color="#1800c6"/><stop offset="0.6158" stop-color="#5500b4"/><stop offset="0.9982" stop-color="#92009c"/></linearGradient><linearGradient id="go157" gradientUnits="userSpaceOnUse" x1="1072" y1="0" x2="1341" y2="0"><stop offset="0.0019" stop-color="#0011c8"/><stop offset="0.1952" stop-color="#0006ca"/><stop offset="0.2993" stop-color="#1600c6"/><stop offset="0.6152" stop-color="#5300b4"/><stop offset="0.9981" stop-color="#90009d"/></linearGradient><linearGradient id="go158" gradientUnits="userSpaceOnUse" x1="1073" y1="0" x2="1339" y2="0"><stop offset="0.0019" stop-color="#0011c8"/><stop offset="0.1936" stop-color="#0006cb"/><stop offset="0.2914" stop-color="#1400c7"/><stop offset="0.6147" stop-color="#5200b5"/><stop offset="0.9981" stop-color="#8e009e"/></linearGradient><linearGradient id="go159" gradientUnits="userSpaceOnUse" x1="1075" y1="0" x2="1337" y2="0"><stop offset="0.0019" stop-color="#0010c8"/><stop offset="0.1927" stop-color="#0005cb"/><stop offset="0.6126" stop-color="#5100b5"/><stop offset="0.9981" stop-color="#8c009f"/></linearGradient><linearGradient id="go160" gradientUnits="userSpaceOnUse" x1="1076" y1="0" x2="1335" y2="0"><stop offset="0.0019" stop-color="#000fc8"/><stop offset="0.1911" stop-color="#0005cb"/><stop offset="0.6120" stop-color="#4f00b6"/><stop offset="0.9981" stop-color="#8a00a0"/></linearGradient><linearGradient id="go161" gradientUnits="userSpaceOnUse" x1="1078" y1="0" x2="1333" y2="0"><stop offset="0.0020" stop-color="#000ec8"/><stop offset="0.1863" stop-color="#0004cb"/><stop offset="0.6098" stop-color="#4e00b6"/><stop offset="0.9980" stop-color="#8800a1"/></linearGradient><linearGradient id="go162" gradientUnits="userSpaceOnUse" x1="1079" y1="0" x2="1331" y2="0"><stop offset="0.0020" stop-color="#000dc9"/><stop offset="0.1885" stop-color="#0103cb"/><stop offset="0.6091" stop-color="#4d00b7"/><stop offset="0.9980" stop-color="#8600a2"/></linearGradient><linearGradient id="go163" gradientUnits="userSpaceOnUse" x1="1080" y1="0" x2="1330" y2="0"><stop offset="0.0020" stop-color="#000dc9"/><stop offset="0.1860" stop-color="#0003cb"/><stop offset="0.6060" stop-color="#4b00b7"/><stop offset="0.9980" stop-color="#8500a2"/></linearGradient><linearGradient id="go164" gradientUnits="userSpaceOnUse" x1="1082" y1="0" x2="1328" y2="0"><stop offset="0.0020" stop-color="#000cc9"/><stop offset="0.1809" stop-color="#0002cb"/><stop offset="0.6077" stop-color="#4b00b7"/><stop offset="0.9980" stop-color="#8300a3"/></linearGradient><linearGradient id="go165" gradientUnits="userSpaceOnUse" x1="1083" y1="0" x2="1326" y2="0"><stop offset="0.0021" stop-color="#000bc9"/><stop offset="0.1831" stop-color="#0102cb"/><stop offset="0.6070" stop-color="#4900b8"/><stop offset="0.9979" stop-color="#8100a4"/></linearGradient><linearGradient id="go166" gradientUnits="userSpaceOnUse" x1="1085" y1="0" x2="1324" y2="0"><stop offset="0.0021" stop-color="#000ac9"/><stop offset="0.1778" stop-color="#0001cc"/><stop offset="0.6004" stop-color="#4700b8"/><stop offset="0.9979" stop-color="#7f00a5"/></linearGradient><linearGradient id="go167" gradientUnits="userSpaceOnUse" x1="1086" y1="0" x2="1322" y2="0"><stop offset="0.0021" stop-color="#000aca"/><stop offset="0.1758" stop-color="#0001cc"/><stop offset="0.6038" stop-color="#4700b8"/><stop offset="0.9979" stop-color="#7d00a5"/></linearGradient><linearGradient id="go168" gradientUnits="userSpaceOnUse" x1="1088" y1="0" x2="1320" y2="0"><stop offset="0.0022" stop-color="#0009ca"/><stop offset="0.1703" stop-color="#0001cc"/><stop offset="0.6013" stop-color="#4500b9"/><stop offset="0.9978" stop-color="#7b00a6"/></linearGradient><linearGradient id="go169" gradientUnits="userSpaceOnUse" x1="1089" y1="0" x2="1318" y2="0"><stop offset="0.0022" stop-color="#0008ca"/><stop offset="0.1725" stop-color="#0000cc"/><stop offset="0.6004" stop-color="#4400b9"/><stop offset="0.9978" stop-color="#7a00a7"/></linearGradient><linearGradient id="go170" gradientUnits="userSpaceOnUse" x1="1091" y1="0" x2="1316" y2="0"><stop offset="0.0022" stop-color="#0007ca"/><stop offset="0.1667" stop-color="#0000cc"/><stop offset="0.5978" stop-color="#4300ba"/><stop offset="0.9978" stop-color="#7800a8"/></linearGradient><linearGradient id="go171" gradientUnits="userSpaceOnUse" x1="1092" y1="0" x2="1314" y2="0"><stop offset="0.0023" stop-color="#0006ca"/><stop offset="0.1644" stop-color="#0000cc"/><stop offset="0.5968" stop-color="#4200ba"/><stop offset="0.9977" stop-color="#7600a8"/></linearGradient><linearGradient id="go172" gradientUnits="userSpaceOnUse" x1="1094" y1="0" x2="1312" y2="0"><stop offset="0.0023" stop-color="#0006cb"/><stop offset="0.1628" stop-color="#0000cc"/><stop offset="0.5940" stop-color="#4100ba"/><stop offset="0.9977" stop-color="#7400a9"/></linearGradient><linearGradient id="go173" gradientUnits="userSpaceOnUse" x1="1095" y1="0" x2="1310" y2="0"><stop offset="0.0023" stop-color="#0005cb"/><stop offset="0.1605" stop-color="#0000cc"/><stop offset="0.5930" stop-color="#3f00bb"/><stop offset="0.9977" stop-color="#7200aa"/></linearGradient><linearGradient id="go174" gradientUnits="userSpaceOnUse" x1="1097" y1="0" x2="1308" y2="0"><stop offset="0.0024" stop-color="#0004cb"/><stop offset="0.1540" stop-color="#0000cc"/><stop offset="0.5900" stop-color="#3e00bb"/><stop offset="0.9976" stop-color="#7000aa"/></linearGradient><linearGradient id="go175" gradientUnits="userSpaceOnUse" x1="1098" y1="0" x2="1306" y2="0"><stop offset="0.0024" stop-color="#0004cb"/><stop offset="0.1562" stop-color="#0000cc"/><stop offset="0.9976" stop-color="#6f00ab"/></linearGradient><linearGradient id="go176" gradientUnits="userSpaceOnUse" x1="1100" y1="0" x2="1304" y2="0"><stop offset="0.0025" stop-color="#0003cb"/><stop offset="0.1495" stop-color="#0000cc"/><stop offset="0.9975" stop-color="#6d00ac"/></linearGradient><linearGradient id="go177" gradientUnits="userSpaceOnUse" x1="1102" y1="0" x2="1302" y2="0"><stop offset="0.0025" stop-color="#0002cc"/><stop offset="0.1425" stop-color="#0000cc"/><stop offset="0.9975" stop-color="#6b00ac"/></linearGradient><linearGradient id="go178" gradientUnits="userSpaceOnUse" x1="1103" y1="0" x2="1300" y2="0"><stop offset="0.0025" stop-color="#0001cc"/><stop offset="0.1447" stop-color="#0000cc"/><stop offset="0.9975" stop-color="#6900ad"/></linearGradient><linearGradient id="go179" gradientUnits="userSpaceOnUse" x1="1105" y1="0" x2="1298" y2="0"><stop offset="0.0026" stop-color="#0001cc"/><stop offset="0.1373" stop-color="#0000cc"/><stop offset="0.9974" stop-color="#6700ae"/></linearGradient><linearGradient id="go180" gradientUnits="userSpaceOnUse" x1="1106" y1="0" x2="1296" y2="0"><stop offset="0.0026" stop-color="#0000cc"/><stop offset="0.1342" stop-color="#0000cc"/><stop offset="0.9974" stop-color="#6600ae"/></linearGradient><linearGradient id="go181" gradientUnits="userSpaceOnUse" x1="1108" y1="0" x2="1294" y2="0"><stop offset="0.0027" stop-color="#0000cc"/><stop offset="0.1317" stop-color="#0000cc"/><stop offset="0.9973" stop-color="#6400af"/></linearGradient><linearGradient id="go182" gradientUnits="userSpaceOnUse" x1="1110" y1="0" x2="1292" y2="0"><stop offset="0.0027" stop-color="#0000cc"/><stop offset="0.1236" stop-color="#0000cc"/><stop offset="0.9973" stop-color="#6200b0"/></linearGradient><linearGradient id="go183" gradientUnits="userSpaceOnUse" x1="1111" y1="0" x2="1291" y2="0"><stop offset="0.0028" stop-color="#0000cc"/><stop offset="0.1194" stop-color="#0000cc"/><stop offset="0.9972" stop-color="#6100b0"/></linearGradient><linearGradient id="go184" gradientUnits="userSpaceOnUse" x1="1113" y1="0" x2="1289" y2="0"><stop offset="0.0028" stop-color="#0000cc"/><stop offset="0.1165" stop-color="#0100cc"/><stop offset="0.9972" stop-color="#5f00b1"/></linearGradient><linearGradient id="go185" gradientUnits="userSpaceOnUse" x1="1115" y1="0" x2="1287" y2="0"><stop offset="0.0029" stop-color="#0000cc"/><stop offset="0.1076" stop-color="#0000cc"/><stop offset="0.9971" stop-color="#5d00b1"/></linearGradient><linearGradient id="go186" gradientUnits="userSpaceOnUse" x1="1117" y1="0" x2="1285" y2="0"><stop offset="0.0030" stop-color="#0000cc"/><stop offset="0.0982" stop-color="#0000cc"/><stop offset="0.9970" stop-color="#5c00b2"/></linearGradient><linearGradient id="go187" gradientUnits="userSpaceOnUse" x1="1118" y1="0" x2="1283" y2="0"><stop offset="0.0030" stop-color="#0000cc"/><stop offset="0.1000" stop-color="#0100cc"/><stop offset="0.9970" stop-color="#5a00b2"/></linearGradient><linearGradient id="go188" gradientUnits="userSpaceOnUse" x1="1120" y1="0" x2="1281" y2="0"><stop offset="0.0031" stop-color="#0000cc"/><stop offset="0.0901" stop-color="#0000cc"/><stop offset="0.9969" stop-color="#5800b3"/></linearGradient><linearGradient id="go189" gradientUnits="userSpaceOnUse" x1="1122" y1="0" x2="1279" y2="0"><stop offset="0.0032" stop-color="#0000cc"/><stop offset="0.0796" stop-color="#0000cc"/><stop offset="0.9968" stop-color="#5700b3"/></linearGradient><linearGradient id="go190" gradientUnits="userSpaceOnUse" x1="1124" y1="0" x2="1277" y2="0"><stop offset="0.0033" stop-color="#0000cc"/><stop offset="0.0752" stop-color="#0100cc"/><stop offset="0.9967" stop-color="#5500b4"/></linearGradient><linearGradient id="go191" gradientUnits="userSpaceOnUse" x1="1126" y1="0" x2="1275" y2="0"><stop offset="0.0034" stop-color="#0000cc"/><stop offset="0.0638" stop-color="#0000cc"/><stop offset="0.9966" stop-color="#5300b5"/></linearGradient><linearGradient id="go192" gradientUnits="userSpaceOnUse" x1="1128" y1="0" x2="1273" y2="0"><stop offset="0.0034" stop-color="#0000cc"/><stop offset="0.9966" stop-color="#5100b5"/></linearGradient><linearGradient id="go193" gradientUnits="userSpaceOnUse" x1="1130" y1="0" x2="1271" y2="0"><stop offset="0.0035" stop-color="#0000cc"/><stop offset="0.9965" stop-color="#5000b6"/></linearGradient><linearGradient id="go194" gradientUnits="userSpaceOnUse" x1="1132" y1="0" x2="1269" y2="0"><stop offset="0.0036" stop-color="#0000cc"/><stop offset="0.9964" stop-color="#4e00b6"/></linearGradient><linearGradient id="go195" gradientUnits="userSpaceOnUse" x1="1134" y1="0" x2="1267" y2="0"><stop offset="0.0038" stop-color="#0000cc"/><stop offset="0.9962" stop-color="#4d00b7"/></linearGradient><linearGradient id="go196" gradientUnits="userSpaceOnUse" x1="1136" y1="0" x2="1265" y2="0"><stop offset="0.0039" stop-color="#0000cc"/><stop offset="0.9961" stop-color="#4b00b7"/></linearGradient><linearGradient id="go197" gradientUnits="userSpaceOnUse" x1="1138" y1="0" x2="1263" y2="0"><stop offset="0.0040" stop-color="#0100cc"/><stop offset="0.9960" stop-color="#4900b8"/></linearGradient><linearGradient id="go198" gradientUnits="userSpaceOnUse" x1="1140" y1="0" x2="1261" y2="0"><stop offset="0.0041" stop-color="#0200cb"/><stop offset="0.9959" stop-color="#4800b8"/></linearGradient><linearGradient id="go199" gradientUnits="userSpaceOnUse" x1="1142" y1="0" x2="1259" y2="0"><stop offset="0.0043" stop-color="#0300cb"/><stop offset="0.9957" stop-color="#4600b9"/></linearGradient><linearGradient id="go200" gradientUnits="userSpaceOnUse" x1="1144" y1="0" x2="1257" y2="0"><stop offset="0.0044" stop-color="#0400cb"/><stop offset="0.9956" stop-color="#4500b9"/></linearGradient><linearGradient id="go201" gradientUnits="userSpaceOnUse" x1="1147" y1="0" x2="1255" y2="0"><stop offset="0.0046" stop-color="#0600cb"/><stop offset="0.9954" stop-color="#4300ba"/></linearGradient><linearGradient id="go202" gradientUnits="userSpaceOnUse" x1="1149" y1="0" x2="1253" y2="0"><stop offset="0.0048" stop-color="#0700ca"/><stop offset="0.9952" stop-color="#4100ba"/></linearGradient><linearGradient id="go203" gradientUnits="userSpaceOnUse" x1="1151" y1="0" x2="1251" y2="0"><stop offset="0.0050" stop-color="#0800ca"/><stop offset="0.9950" stop-color="#4000bb"/></linearGradient><linearGradient id="go204" gradientUnits="userSpaceOnUse" x1="1154" y1="0" x2="1250" y2="0"><stop offset="0.0052" stop-color="#0900ca"/><stop offset="0.9948" stop-color="#3f00bb"/></linearGradient><linearGradient id="go205" gradientUnits="userSpaceOnUse" x1="1156" y1="0" x2="1248" y2="0"><stop offset="0.0054" stop-color="#0a00c9"/><stop offset="0.9946" stop-color="#3d00bb"/></linearGradient><linearGradient id="go206" gradientUnits="userSpaceOnUse" x1="1158" y1="0" x2="1246" y2="0"><stop offset="0.0057" stop-color="#0b00c9"/><stop offset="0.9943" stop-color="#3c00bc"/></linearGradient><linearGradient id="go207" gradientUnits="userSpaceOnUse" x1="1161" y1="0" x2="1244" y2="0"><stop offset="0.0060" stop-color="#0d00c9"/><stop offset="0.9940" stop-color="#3a00bc"/></linearGradient><linearGradient id="go208" gradientUnits="userSpaceOnUse" x1="1163" y1="0" x2="1242" y2="0"><stop offset="0.0063" stop-color="#0e00c9"/><stop offset="0.9937" stop-color="#3900bd"/></linearGradient><linearGradient id="go209" gradientUnits="userSpaceOnUse" x1="1166" y1="0" x2="1240" y2="0"><stop offset="0.0068" stop-color="#0f00c8"/><stop offset="0.9932" stop-color="#3700bd"/></linearGradient><linearGradient id="go210" gradientUnits="userSpaceOnUse" x1="1168" y1="0" x2="1238" y2="0"><stop offset="0.0071" stop-color="#1000c8"/><stop offset="0.9929" stop-color="#3600be"/></linearGradient><linearGradient id="go211" gradientUnits="userSpaceOnUse" x1="1171" y1="0" x2="1236" y2="0"><stop offset="0.0077" stop-color="#1100c8"/><stop offset="0.9923" stop-color="#3400be"/></linearGradient><linearGradient id="go212" gradientUnits="userSpaceOnUse" x1="1173" y1="0" x2="1234" y2="0"><stop offset="0.0082" stop-color="#1200c7"/><stop offset="0.9918" stop-color="#3300be"/></linearGradient><linearGradient id="go213" gradientUnits="userSpaceOnUse" x1="1176" y1="0" x2="1232" y2="0"><stop offset="0.0089" stop-color="#1400c7"/><stop offset="0.9911" stop-color="#3100bf"/></linearGradient><linearGradient id="go214" gradientUnits="userSpaceOnUse" x1="1178" y1="0" x2="1230" y2="0"><stop offset="0.0096" stop-color="#1500c7"/><stop offset="0.9904" stop-color="#3000bf"/></linearGradient><linearGradient id="go215" gradientUnits="userSpaceOnUse" x1="1180" y1="0" x2="1228" y2="0"><stop offset="0.0104" stop-color="#1500c7"/><stop offset="0.9896" stop-color="#2f00c0"/></linearGradient><linearGradient id="go216" gradientUnits="userSpaceOnUse" x1="1183" y1="0" x2="1226" y2="0"><stop offset="0.0116" stop-color="#1700c6"/><stop offset="0.9884" stop-color="#2d00c0"/></linearGradient><linearGradient id="go217" gradientUnits="userSpaceOnUse" x1="1185" y1="0" x2="1224" y2="0"><stop offset="0.0128" stop-color="#1800c6"/><stop offset="0.9872" stop-color="#2c00c0"/></linearGradient><linearGradient id="go218" gradientUnits="userSpaceOnUse" x1="1188" y1="0" x2="1222" y2="0"><stop offset="0.0147" stop-color="#1900c6"/><stop offset="0.9853" stop-color="#2a00c1"/></linearGradient><linearGradient id="go219" gradientUnits="userSpaceOnUse" x1="1190" y1="0" x2="1220" y2="0"><stop offset="0.0167" stop-color="#1a00c5"/><stop offset="0.9833" stop-color="#2900c1"/></linearGradient><linearGradient id="go220" gradientUnits="userSpaceOnUse" x1="1193" y1="0" x2="1218" y2="0"><stop offset="0.0200" stop-color="#1b00c5"/><stop offset="0.9800" stop-color="#2800c2"/></linearGradient><linearGradient id="go221" gradientUnits="userSpaceOnUse" x1="1195" y1="0" x2="1216" y2="0"><stop offset="0.0238" stop-color="#1c00c5"/><stop offset="0.9762" stop-color="#2600c2"/></linearGradient><linearGradient id="go222" gradientUnits="userSpaceOnUse" x1="1198" y1="0" x2="1214" y2="0"><stop offset="0.0312" stop-color="#1d00c4"/><stop offset="0.9688" stop-color="#2500c2"/></linearGradient><linearGradient id="go223" gradientUnits="userSpaceOnUse" x1="1201" y1="0" x2="1212" y2="0"><stop offset="0.0455" stop-color="#1e00c4"/><stop offset="0.9545" stop-color="#2300c3"/></linearGradient><linearGradient id="gi14" gradientUnits="userSpaceOnUse" x1="1077" y1="0" x2="1094" y2="0"><stop offset="0.0294" stop-color="#00ff02"/><stop offset="0.1471" stop-color="#01ff02"/><stop offset="0.9706" stop-color="#31ff00"/></linearGradient><linearGradient id="gi15" gradientUnits="userSpaceOnUse" x1="1078" y1="0" x2="1117" y2="0"><stop offset="0.0128" stop-color="#00ff09"/><stop offset="0.9872" stop-color="#77ff00"/></linearGradient><linearGradient id="gi16" gradientUnits="userSpaceOnUse" x1="1078" y1="0" x2="1139" y2="0"><stop offset="0.0082" stop-color="#00ff10"/><stop offset="0.0410" stop-color="#02ff0f"/><stop offset="0.9918" stop-color="#bdff00"/></linearGradient><linearGradient id="gi17" gradientUnits="userSpaceOnUse" x1="1078" y1="0" x2="1161" y2="0"><stop offset="0.0060" stop-color="#00ff16"/><stop offset="0.0301" stop-color="#01ff16"/><stop offset="0.9458" stop-color="#fcff00"/><stop offset="0.9940" stop-color="#fff400"/></linearGradient><linearGradient id="gi18" gradientUnits="userSpaceOnUse" x1="1079" y1="0" x2="1183" y2="0"><stop offset="0.0048" stop-color="#00ff1c"/><stop offset="0.7548" stop-color="#fffe06"/><stop offset="0.8702" stop-color="#ffd802"/><stop offset="0.9952" stop-color="#ffb800"/></linearGradient><linearGradient id="gi19" gradientUnits="userSpaceOnUse" x1="1079" y1="0" x2="1206" y2="0"><stop offset="0.0039" stop-color="#00ff22"/><stop offset="0.4055" stop-color="#a3ff17"/><stop offset="0.6102" stop-color="#fdff10"/><stop offset="0.7913" stop-color="#ffbe05"/><stop offset="0.9961" stop-color="#ff8d00"/></linearGradient><linearGradient id="gi20" gradientUnits="userSpaceOnUse" x1="1079" y1="0" x2="1228" y2="0"><stop offset="0.0034" stop-color="#00ff28"/><stop offset="0.0168" stop-color="#01ff27"/><stop offset="0.5201" stop-color="#feff18"/><stop offset="0.6208" stop-color="#ffd110"/><stop offset="0.7215" stop-color="#ffae0a"/><stop offset="0.8490" stop-color="#ff8c03"/><stop offset="0.9966" stop-color="#ff7000"/></linearGradient><linearGradient id="gi21" gradientUnits="userSpaceOnUse" x1="1080" y1="0" x2="1250" y2="0"><stop offset="0.0029" stop-color="#00ff2d"/><stop offset="0.4500" stop-color="#feff20"/><stop offset="0.5559" stop-color="#ffc815"/><stop offset="0.6735" stop-color="#ff9e0d"/><stop offset="0.8206" stop-color="#ff7805"/><stop offset="0.9971" stop-color="#ff5900"/></linearGradient><linearGradient id="gi22" gradientUnits="userSpaceOnUse" x1="1080" y1="0" x2="1272" y2="0"><stop offset="0.0026" stop-color="#00ff33"/><stop offset="0.2630" stop-color="#a3ff2c"/><stop offset="0.3984" stop-color="#fffe27"/><stop offset="0.5026" stop-color="#ffc21b"/><stop offset="0.6328" stop-color="#ff9110"/><stop offset="0.7943" stop-color="#ff6807"/><stop offset="0.9974" stop-color="#ff4600"/></linearGradient><linearGradient id="gi23" gradientUnits="userSpaceOnUse" x1="1080" y1="0" x2="1295" y2="0"><stop offset="0.0023" stop-color="#00ff39"/><stop offset="0.0116" stop-color="#01ff38"/><stop offset="0.3558" stop-color="#fffe2f"/><stop offset="0.4070" stop-color="#ffda27"/><stop offset="0.4628" stop-color="#ffbb1f"/><stop offset="0.5977" stop-color="#ff8613"/><stop offset="0.7744" stop-color="#ff5a08"/><stop offset="0.9977" stop-color="#ff3600"/></linearGradient><linearGradient id="gi24" gradientUnits="userSpaceOnUse" x1="1080" y1="0" x2="1317" y2="0"><stop offset="0.0021" stop-color="#00ff3e"/><stop offset="0.0105" stop-color="#00ff3e"/><stop offset="0.3228" stop-color="#fffd36"/><stop offset="0.3734" stop-color="#ffd62c"/><stop offset="0.4283" stop-color="#ffb524"/><stop offset="0.5717" stop-color="#ff7b15"/><stop offset="0.7574" stop-color="#ff4e09"/><stop offset="0.9979" stop-color="#ff2900"/></linearGradient><linearGradient id="gi25" gradientUnits="userSpaceOnUse" x1="1081" y1="0" x2="1339" y2="0"><stop offset="0.0019" stop-color="#00ff44"/><stop offset="0.2926" stop-color="#fffd3d"/><stop offset="0.3430" stop-color="#ffd232"/><stop offset="0.4012" stop-color="#ffae28"/><stop offset="0.4671" stop-color="#ff8f1f"/><stop offset="0.5446" stop-color="#ff7318"/><stop offset="0.7384" stop-color="#ff440a"/><stop offset="0.9981" stop-color="#ff1e00"/></linearGradient><linearGradient id="gi26" gradientUnits="userSpaceOnUse" x1="1081" y1="0" x2="1361" y2="0"><stop offset="0.0018" stop-color="#00ff49"/><stop offset="0.0089" stop-color="#02ff49"/><stop offset="0.2661" stop-color="#feff45"/><stop offset="0.3161" stop-color="#ffd238"/><stop offset="0.3732" stop-color="#ffab2d"/><stop offset="0.4411" stop-color="#ff8923"/><stop offset="0.5196" stop-color="#ff6c1a"/><stop offset="0.7196" stop-color="#ff3c0c"/><stop offset="0.9982" stop-color="#ff1400"/></linearGradient><linearGradient id="gi27" gradientUnits="userSpaceOnUse" x1="1081" y1="0" x2="1384" y2="0"><stop offset="0.0017" stop-color="#00ff4f"/><stop offset="0.0083" stop-color="#01ff4f"/><stop offset="0.2459" stop-color="#ffff4c"/><stop offset="0.2954" stop-color="#ffce3d"/><stop offset="0.3515" stop-color="#ffa631"/><stop offset="0.4175" stop-color="#ff8426"/><stop offset="0.4967" stop-color="#ff661d"/><stop offset="0.7013" stop-color="#ff340d"/><stop offset="0.9983" stop-color="#ff0a00"/></linearGradient><linearGradient id="gi28" gradientUnits="userSpaceOnUse" x1="1082" y1="0" x2="1406" y2="0"><stop offset="0.0015" stop-color="#00ff54"/><stop offset="0.2269" stop-color="#fffe53"/><stop offset="0.2731" stop-color="#ffcd43"/><stop offset="0.3287" stop-color="#ffa335"/><stop offset="0.3966" stop-color="#ff7f29"/><stop offset="0.4769" stop-color="#ff601f"/><stop offset="0.6775" stop-color="#ff2f0e"/><stop offset="0.9985" stop-color="#ff0000"/></linearGradient><linearGradient id="gi29" gradientUnits="userSpaceOnUse" x1="1082" y1="0" x2="1406" y2="0"><stop offset="0.0015" stop-color="#00ff5a"/><stop offset="0.0077" stop-color="#02ff5a"/><stop offset="0.2269" stop-color="#fffd5a"/><stop offset="0.2731" stop-color="#ffcc49"/><stop offset="0.3287" stop-color="#ffa23a"/><stop offset="0.3966" stop-color="#ff7e2d"/><stop offset="0.4769" stop-color="#ff5f22"/><stop offset="0.6806" stop-color="#ff2d11"/><stop offset="0.9985" stop-color="#ff0001"/></linearGradient><linearGradient id="gi30" gradientUnits="userSpaceOnUse" x1="1082" y1="0" x2="1404" y2="0"><stop offset="0.0016" stop-color="#00ff60"/><stop offset="0.0078" stop-color="#01ff60"/><stop offset="0.2283" stop-color="#fffd61"/><stop offset="0.2748" stop-color="#ffcb4f"/><stop offset="0.3307" stop-color="#ffa23f"/><stop offset="0.3991" stop-color="#ff7d32"/><stop offset="0.4798" stop-color="#ff5e26"/><stop offset="0.6848" stop-color="#ff2d14"/><stop offset="0.9984" stop-color="#ff0004"/></linearGradient><linearGradient id="gi31" gradientUnits="userSpaceOnUse" x1="1083" y1="0" x2="1402" y2="0"><stop offset="0.0016" stop-color="#00ff65"/><stop offset="0.2273" stop-color="#fffc68"/><stop offset="0.2743" stop-color="#ffcb55"/><stop offset="0.3307" stop-color="#ffa144"/><stop offset="0.3966" stop-color="#ff7e36"/><stop offset="0.4781" stop-color="#ff5e2a"/><stop offset="0.6818" stop-color="#ff2d17"/><stop offset="0.9984" stop-color="#ff0007"/></linearGradient><linearGradient id="gi32" gradientUnits="userSpaceOnUse" x1="1083" y1="0" x2="1400" y2="0"><stop offset="0.0016" stop-color="#00ff6b"/><stop offset="0.0079" stop-color="#02ff6b"/><stop offset="0.2256" stop-color="#feff70"/><stop offset="0.2729" stop-color="#ffcd5b"/><stop offset="0.3297" stop-color="#ffa24a"/><stop offset="0.3959" stop-color="#ff7e3b"/><stop offset="0.4779" stop-color="#ff5f2e"/><stop offset="0.6830" stop-color="#ff2d1a"/><stop offset="0.9984" stop-color="#ff000a"/></linearGradient><linearGradient id="gi33" gradientUnits="userSpaceOnUse" x1="1083" y1="0" x2="1398" y2="0"><stop offset="0.0016" stop-color="#00ff70"/><stop offset="0.0079" stop-color="#01ff71"/><stop offset="0.2270" stop-color="#fffe77"/><stop offset="0.2746" stop-color="#ffcc61"/><stop offset="0.3317" stop-color="#ffa14f"/><stop offset="0.3984" stop-color="#ff7d3f"/><stop offset="0.4778" stop-color="#ff5f32"/><stop offset="0.6810" stop-color="#ff2d1d"/><stop offset="0.9984" stop-color="#ff000c"/></linearGradient><linearGradient id="gi34" gradientUnits="userSpaceOnUse" x1="1084" y1="0" x2="1396" y2="0"><stop offset="0.0016" stop-color="#00ff76"/><stop offset="0.2260" stop-color="#fffd7e"/><stop offset="0.2740" stop-color="#ffcb67"/><stop offset="0.3285" stop-color="#ffa255"/><stop offset="0.3958" stop-color="#ff7e44"/><stop offset="0.4760" stop-color="#ff5f36"/><stop offset="0.6811" stop-color="#ff2d20"/><stop offset="0.9984" stop-color="#ff000e"/></linearGradient><linearGradient id="gi35" gradientUnits="userSpaceOnUse" x1="1084" y1="0" x2="1394" y2="0"><stop offset="0.0016" stop-color="#00ff7c"/><stop offset="0.0081" stop-color="#03ff7c"/><stop offset="0.2274" stop-color="#fffd85"/><stop offset="0.2758" stop-color="#ffca6d"/><stop offset="0.3306" stop-color="#ffa159"/><stop offset="0.3984" stop-color="#ff7d48"/><stop offset="0.4790" stop-color="#ff5e3a"/><stop offset="0.6823" stop-color="#ff2d23"/><stop offset="0.9984" stop-color="#ff0011"/></linearGradient><linearGradient id="gi36" gradientUnits="userSpaceOnUse" x1="1084" y1="0" x2="1392" y2="0"><stop offset="0.0016" stop-color="#00ff82"/><stop offset="0.0081" stop-color="#01ff82"/><stop offset="0.2289" stop-color="#fffc8c"/><stop offset="0.2776" stop-color="#ffc973"/><stop offset="0.3328" stop-color="#ffa05e"/><stop offset="0.4010" stop-color="#ff7c4d"/><stop offset="0.4789" stop-color="#ff5e3e"/><stop offset="0.6834" stop-color="#ff2d26"/><stop offset="0.9984" stop-color="#ff0013"/></linearGradient><linearGradient id="gi37" gradientUnits="userSpaceOnUse" x1="1085" y1="0" x2="1390" y2="0"><stop offset="0.0016" stop-color="#00ff88"/><stop offset="0.1525" stop-color="#a8ff90"/><stop offset="0.2246" stop-color="#feff95"/><stop offset="0.2738" stop-color="#ffcb7a"/><stop offset="0.3295" stop-color="#ffa164"/><stop offset="0.3984" stop-color="#ff7d51"/><stop offset="0.4770" stop-color="#ff5f42"/><stop offset="0.6803" stop-color="#ff2d29"/><stop offset="0.9984" stop-color="#ff0015"/></linearGradient><linearGradient id="gi38" gradientUnits="userSpaceOnUse" x1="1085" y1="0" x2="1388" y2="0"><stop offset="0.0017" stop-color="#00ff8d"/><stop offset="0.0083" stop-color="#03ff8e"/><stop offset="0.2261" stop-color="#fffe9c"/><stop offset="0.2723" stop-color="#ffcd81"/><stop offset="0.3284" stop-color="#ffa36a"/><stop offset="0.3944" stop-color="#ff7f57"/><stop offset="0.4769" stop-color="#ff5f46"/><stop offset="0.6815" stop-color="#ff2d2c"/><stop offset="0.9983" stop-color="#ff0018"/></linearGradient><linearGradient id="gi39" gradientUnits="userSpaceOnUse" x1="1085" y1="0" x2="1386" y2="0"><stop offset="0.0017" stop-color="#00ff93"/><stop offset="0.0083" stop-color="#02ff94"/><stop offset="0.2276" stop-color="#fffea3"/><stop offset="0.2741" stop-color="#ffcc87"/><stop offset="0.3306" stop-color="#ffa26f"/><stop offset="0.3970" stop-color="#ff7e5b"/><stop offset="0.4767" stop-color="#ff5f4a"/><stop offset="0.6794" stop-color="#ff2e30"/><stop offset="0.9983" stop-color="#ff001a"/></linearGradient><linearGradient id="gi40" gradientUnits="userSpaceOnUse" x1="1085" y1="0" x2="1384" y2="0"><stop offset="0.0017" stop-color="#00ff99"/><stop offset="0.0084" stop-color="#00ff9a"/><stop offset="0.2291" stop-color="#fffdaa"/><stop offset="0.2759" stop-color="#ffcb8d"/><stop offset="0.3328" stop-color="#ffa174"/><stop offset="0.3997" stop-color="#ff7d60"/><stop offset="0.4799" stop-color="#ff5e4e"/><stop offset="0.6839" stop-color="#ff2d32"/><stop offset="0.9983" stop-color="#ff001c"/></linearGradient><linearGradient id="gi41" gradientUnits="userSpaceOnUse" x1="1086" y1="0" x2="1382" y2="0"><stop offset="0.0017" stop-color="#00ff9f"/><stop offset="0.0084" stop-color="#03ffa0"/><stop offset="0.2280" stop-color="#fffcb1"/><stop offset="0.2753" stop-color="#ffca93"/><stop offset="0.3294" stop-color="#ffa27b"/><stop offset="0.3970" stop-color="#ff7e65"/><stop offset="0.4780" stop-color="#ff5f52"/><stop offset="0.6807" stop-color="#ff2d36"/><stop offset="0.9983" stop-color="#ff001f"/></linearGradient><linearGradient id="gi42" gradientUnits="userSpaceOnUse" x1="1086" y1="0" x2="1380" y2="0"><stop offset="0.0017" stop-color="#00ffa5"/><stop offset="0.0085" stop-color="#02ffa6"/><stop offset="0.2262" stop-color="#feffbb"/><stop offset="0.2738" stop-color="#ffcc9b"/><stop offset="0.3316" stop-color="#ffa17f"/><stop offset="0.3997" stop-color="#ff7d69"/><stop offset="0.4779" stop-color="#ff5f56"/><stop offset="0.6820" stop-color="#ff2d39"/><stop offset="0.9983" stop-color="#ff0021"/></linearGradient><linearGradient id="gi43" gradientUnits="userSpaceOnUse" x1="1086" y1="0" x2="1378" y2="0"><stop offset="0.0017" stop-color="#00ffab"/><stop offset="0.0086" stop-color="#01ffac"/><stop offset="0.2277" stop-color="#fffec2"/><stop offset="0.2757" stop-color="#ffcca1"/><stop offset="0.3305" stop-color="#ffa286"/><stop offset="0.3990" stop-color="#ff7d6e"/><stop offset="0.4777" stop-color="#ff5f5b"/><stop offset="0.6798" stop-color="#ff2e3c"/><stop offset="0.9983" stop-color="#ff0023"/></linearGradient><linearGradient id="gi44" gradientUnits="userSpaceOnUse" x1="1087" y1="0" x2="1376" y2="0"><stop offset="0.0017" stop-color="#00ffb2"/><stop offset="0.2266" stop-color="#fffeca"/><stop offset="0.2751" stop-color="#ffcba7"/><stop offset="0.3304" stop-color="#ffa18b"/><stop offset="0.3962" stop-color="#ff7e73"/><stop offset="0.4758" stop-color="#ff5f5f"/><stop offset="0.6799" stop-color="#ff2e3f"/><stop offset="0.9983" stop-color="#ff0026"/></linearGradient><linearGradient id="gi45" gradientUnits="userSpaceOnUse" x1="1087" y1="0" x2="1374" y2="0"><stop offset="0.0017" stop-color="#00ffb8"/><stop offset="0.0087" stop-color="#02ffb8"/><stop offset="0.2282" stop-color="#fffdd1"/><stop offset="0.2770" stop-color="#ffcaad"/><stop offset="0.3328" stop-color="#ffa090"/><stop offset="0.3990" stop-color="#ff7d78"/><stop offset="0.4791" stop-color="#ff5e63"/><stop offset="0.6812" stop-color="#ff2d42"/><stop offset="0.9983" stop-color="#ff0028"/></linearGradient><linearGradient id="gi46" gradientUnits="userSpaceOnUse" x1="1087" y1="0" x2="1372" y2="0"><stop offset="0.0018" stop-color="#00ffbe"/><stop offset="0.0088" stop-color="#01ffbf"/><stop offset="0.2298" stop-color="#fffcd8"/><stop offset="0.2754" stop-color="#ffccb5"/><stop offset="0.3316" stop-color="#ffa297"/><stop offset="0.3982" stop-color="#ff7e7d"/><stop offset="0.4789" stop-color="#ff5f67"/><stop offset="0.6825" stop-color="#ff2d45"/><stop offset="0.9982" stop-color="#ff002a"/></linearGradient><linearGradient id="gi47" gradientUnits="userSpaceOnUse" x1="1088" y1="0" x2="1370" y2="0"><stop offset="0.0018" stop-color="#00ffc5"/><stop offset="0.1472" stop-color="#a1ffd6"/><stop offset="0.2252" stop-color="#feffe2"/><stop offset="0.2748" stop-color="#ffcbbb"/><stop offset="0.3280" stop-color="#ffa39d"/><stop offset="0.3954" stop-color="#ff7e82"/><stop offset="0.4770" stop-color="#ff5f6b"/><stop offset="0.6826" stop-color="#ff2d48"/><stop offset="0.9982" stop-color="#ff002d"/></linearGradient><linearGradient id="gi48" gradientUnits="userSpaceOnUse" x1="1088" y1="0" x2="1368" y2="0"><stop offset="0.0018" stop-color="#00ffcb"/><stop offset="0.0089" stop-color="#03ffcc"/><stop offset="0.2268" stop-color="#fffeea"/><stop offset="0.2732" stop-color="#ffcdc4"/><stop offset="0.3304" stop-color="#ffa2a2"/><stop offset="0.3982" stop-color="#ff7e87"/><stop offset="0.4768" stop-color="#ff5f70"/><stop offset="0.6804" stop-color="#ff2e4c"/><stop offset="0.9982" stop-color="#ff002f"/></linearGradient><linearGradient id="gi49" gradientUnits="userSpaceOnUse" x1="1088" y1="0" x2="1366" y2="0"><stop offset="0.0018" stop-color="#00ffd1"/><stop offset="0.0090" stop-color="#01ffd2"/><stop offset="0.2284" stop-color="#fffef2"/><stop offset="0.2752" stop-color="#ffccca"/><stop offset="0.3291" stop-color="#ffa3a9"/><stop offset="0.3975" stop-color="#ff7e8c"/><stop offset="0.4766" stop-color="#ff5f74"/><stop offset="0.6817" stop-color="#ff2d4f"/><stop offset="0.9982" stop-color="#ff0032"/></linearGradient><linearGradient id="gi50" gradientUnits="userSpaceOnUse" x1="1089" y1="0" x2="1364" y2="0"><stop offset="0.0018" stop-color="#00ffd8"/><stop offset="0.2273" stop-color="#fffdf9"/><stop offset="0.2745" stop-color="#ffcbd0"/><stop offset="0.3291" stop-color="#ffa2af"/><stop offset="0.3982" stop-color="#ff7d91"/><stop offset="0.4782" stop-color="#ff5f78"/><stop offset="0.6818" stop-color="#ff2d52"/><stop offset="0.9982" stop-color="#ff0034"/></linearGradient><linearGradient id="gi51" gradientUnits="userSpaceOnUse" x1="1089" y1="0" x2="1362" y2="0"><stop offset="0.0018" stop-color="#00ffdf"/><stop offset="0.0092" stop-color="#03ffe0"/><stop offset="0.1923" stop-color="#d4fffc"/><stop offset="0.2326" stop-color="#fff7fd"/><stop offset="0.2802" stop-color="#ffc7d4"/><stop offset="0.3352" stop-color="#ff9fb2"/><stop offset="0.4011" stop-color="#ff7c95"/><stop offset="0.4817" stop-color="#ff5e7c"/><stop offset="0.6832" stop-color="#ff2d55"/><stop offset="0.9982" stop-color="#ff0036"/></linearGradient><linearGradient id="gi52" gradientUnits="userSpaceOnUse" x1="1089" y1="0" x2="1361" y2="0"><stop offset="0.0018" stop-color="#00ffe5"/><stop offset="0.0092" stop-color="#01ffe6"/><stop offset="0.0386" stop-color="#27ffea"/><stop offset="0.1599" stop-color="#aefefe"/><stop offset="0.2408" stop-color="#ffeefd"/><stop offset="0.2886" stop-color="#ffc0d5"/><stop offset="0.3438" stop-color="#ff99b3"/><stop offset="0.4099" stop-color="#ff7897"/><stop offset="0.4908" stop-color="#ff5a7e"/><stop offset="0.6930" stop-color="#ff2b57"/><stop offset="0.9982" stop-color="#ff0039"/></linearGradient><linearGradient id="gi53" gradientUnits="userSpaceOnUse" x1="1090" y1="0" x2="1359" y2="0"><stop offset="0.0019" stop-color="#00ffec"/><stop offset="0.1208" stop-color="#84fefe"/><stop offset="0.2472" stop-color="#ffe5fd"/><stop offset="0.2955" stop-color="#ffb9d5"/><stop offset="0.3513" stop-color="#ff94b5"/><stop offset="0.4182" stop-color="#ff7498"/><stop offset="0.4963" stop-color="#ff5880"/><stop offset="0.7045" stop-color="#ff2959"/><stop offset="0.9981" stop-color="#ff003b"/></linearGradient><linearGradient id="gi54" gradientUnits="userSpaceOnUse" x1="1090" y1="0" x2="1357" y2="0"><stop offset="0.0019" stop-color="#00fff3"/><stop offset="0.0094" stop-color="#03fff4"/><stop offset="0.0880" stop-color="#5efdff"/><stop offset="0.2566" stop-color="#ffdcfd"/><stop offset="0.3052" stop-color="#ffb2d6"/><stop offset="0.3614" stop-color="#ff8fb6"/><stop offset="0.4288" stop-color="#ff709a"/><stop offset="0.5075" stop-color="#ff5582"/><stop offset="0.7135" stop-color="#ff275b"/><stop offset="0.9981" stop-color="#ff003e"/></linearGradient><linearGradient id="gi55" gradientUnits="userSpaceOnUse" x1="1090" y1="0" x2="1355" y2="0"><stop offset="0.0019" stop-color="#00fffa"/><stop offset="0.0094" stop-color="#02fffb"/><stop offset="0.0472" stop-color="#30fdff"/><stop offset="0.1151" stop-color="#75f1ff"/><stop offset="0.2660" stop-color="#ffd4fc"/><stop offset="0.3151" stop-color="#ffacd7"/><stop offset="0.3717" stop-color="#ff8ab7"/><stop offset="0.5151" stop-color="#ff5384"/><stop offset="0.7189" stop-color="#ff275d"/><stop offset="0.9981" stop-color="#ff0040"/></linearGradient><linearGradient id="gi56" gradientUnits="userSpaceOnUse" x1="1090" y1="0" x2="1353" y2="0"><stop offset="0.0019" stop-color="#00fdff"/><stop offset="0.0095" stop-color="#01fcff"/><stop offset="0.0475" stop-color="#2ef6ff"/><stop offset="0.1236" stop-color="#78e9ff"/><stop offset="0.2757" stop-color="#ffccfc"/><stop offset="0.3251" stop-color="#ffa6d8"/><stop offset="0.3821" stop-color="#ff85b8"/><stop offset="0.5266" stop-color="#ff5086"/><stop offset="0.7281" stop-color="#ff255f"/><stop offset="0.9981" stop-color="#ff0043"/></linearGradient><linearGradient id="gi57" gradientUnits="userSpaceOnUse" x1="1091" y1="0" x2="1351" y2="0"><stop offset="0.0019" stop-color="#00f6ff"/><stop offset="0.1135" stop-color="#6ee4ff"/><stop offset="0.2827" stop-color="#ffc4fc"/><stop offset="0.3327" stop-color="#ffa0d8"/><stop offset="0.3904" stop-color="#ff81b9"/><stop offset="0.5365" stop-color="#ff4d87"/><stop offset="0.7327" stop-color="#ff2462"/><stop offset="0.9981" stop-color="#ff0045"/></linearGradient><linearGradient id="gi58" gradientUnits="userSpaceOnUse" x1="1091" y1="0" x2="1349" y2="0"><stop offset="0.0019" stop-color="#00f0ff"/><stop offset="0.0097" stop-color="#02eeff"/><stop offset="0.0484" stop-color="#2ee8ff"/><stop offset="0.1221" stop-color="#71dcff"/><stop offset="0.2926" stop-color="#ffbdfc"/><stop offset="0.3430" stop-color="#ff9ad9"/><stop offset="0.4012" stop-color="#ff7cba"/><stop offset="0.5446" stop-color="#ff4b8a"/><stop offset="0.7384" stop-color="#ff2365"/><stop offset="0.9981" stop-color="#ff0048"/></linearGradient><linearGradient id="gi59" gradientUnits="userSpaceOnUse" x1="1091" y1="0" x2="1347" y2="0"><stop offset="0.0020" stop-color="#00e9ff"/><stop offset="0.0098" stop-color="#01e8ff"/><stop offset="0.0488" stop-color="#2ce2ff"/><stop offset="0.1191" stop-color="#6bd7ff"/><stop offset="0.2988" stop-color="#feb8fe"/><stop offset="0.3535" stop-color="#ff94d9"/><stop offset="0.4082" stop-color="#ff79bd"/><stop offset="0.5527" stop-color="#ff498c"/><stop offset="0.7441" stop-color="#ff2267"/><stop offset="0.9980" stop-color="#ff004b"/></linearGradient><linearGradient id="gi60" gradientUnits="userSpaceOnUse" x1="1092" y1="0" x2="1345" y2="0"><stop offset="0.0020" stop-color="#00e3ff"/><stop offset="0.1126" stop-color="#64d2ff"/><stop offset="0.3063" stop-color="#feb1fe"/><stop offset="0.3617" stop-color="#ff8fda"/><stop offset="0.4170" stop-color="#ff75be"/><stop offset="0.5593" stop-color="#ff478f"/><stop offset="0.7490" stop-color="#ff226a"/><stop offset="0.9980" stop-color="#ff004d"/></linearGradient><linearGradient id="gi61" gradientUnits="userSpaceOnUse" x1="1092" y1="0" x2="1343" y2="0"><stop offset="0.0020" stop-color="#00ddff"/><stop offset="0.0100" stop-color="#02dcff"/><stop offset="0.0498" stop-color="#2bd6ff"/><stop offset="0.1215" stop-color="#68cbff"/><stop offset="0.3167" stop-color="#feaafe"/><stop offset="0.3725" stop-color="#ff8adb"/><stop offset="0.4283" stop-color="#ff71bf"/><stop offset="0.5677" stop-color="#ff4591"/><stop offset="0.7550" stop-color="#ff216c"/><stop offset="0.9980" stop-color="#ff0050"/></linearGradient><linearGradient id="gi62" gradientUnits="userSpaceOnUse" x1="1092" y1="0" x2="1341" y2="0"><stop offset="0.0020" stop-color="#00d8ff"/><stop offset="0.0100" stop-color="#01d7ff"/><stop offset="0.0502" stop-color="#29d1ff"/><stop offset="0.1305" stop-color="#6bc5ff"/><stop offset="0.3273" stop-color="#fea4fe"/><stop offset="0.4357" stop-color="#ff6ec2"/><stop offset="0.5763" stop-color="#ff4393"/><stop offset="0.7610" stop-color="#ff206f"/><stop offset="0.9980" stop-color="#ff0053"/></linearGradient><linearGradient id="gi63" gradientUnits="userSpaceOnUse" x1="1093" y1="0" x2="1339" y2="0"><stop offset="0.0020" stop-color="#00d2ff"/><stop offset="0.1199" stop-color="#62c1ff"/><stop offset="0.3354" stop-color="#fe9efe"/><stop offset="0.4451" stop-color="#ff6ac3"/><stop offset="0.5833" stop-color="#ff4196"/><stop offset="0.7622" stop-color="#ff2072"/><stop offset="0.9980" stop-color="#ff0056"/></linearGradient><linearGradient id="gi64" gradientUnits="userSpaceOnUse" x1="1093" y1="0" x2="1337" y2="0"><stop offset="0.0020" stop-color="#00cdff"/><stop offset="0.0102" stop-color="#02ccff"/><stop offset="0.0512" stop-color="#29c6ff"/><stop offset="0.1291" stop-color="#66bbff"/><stop offset="0.3463" stop-color="#fe98fe"/><stop offset="0.4529" stop-color="#ff67c5"/><stop offset="0.5922" stop-color="#ff3f98"/><stop offset="0.7684" stop-color="#ff1f75"/><stop offset="0.9980" stop-color="#ff0058"/></linearGradient><linearGradient id="gi65" gradientUnits="userSpaceOnUse" x1="1093" y1="0" x2="1335" y2="0"><stop offset="0.0021" stop-color="#00c8ff"/><stop offset="0.0103" stop-color="#01c7ff"/><stop offset="0.0558" stop-color="#2bc1ff"/><stop offset="0.1384" stop-color="#69b5ff"/><stop offset="0.3574" stop-color="#fe92fe"/><stop offset="0.4649" stop-color="#ff63c6"/><stop offset="0.6012" stop-color="#ff3d9a"/><stop offset="0.7748" stop-color="#ff1e77"/><stop offset="0.9979" stop-color="#ff005b"/></linearGradient><linearGradient id="gi66" gradientUnits="userSpaceOnUse" x1="1094" y1="0" x2="1333" y2="0"><stop offset="0.0021" stop-color="#00c3ff"/><stop offset="0.1276" stop-color="#60b2ff"/><stop offset="0.3661" stop-color="#ff8cfe"/><stop offset="0.4749" stop-color="#ff5fc7"/><stop offset="0.6088" stop-color="#ff3b9c"/><stop offset="0.7803" stop-color="#ff1d7a"/><stop offset="0.9979" stop-color="#ff005e"/></linearGradient><linearGradient id="gi67" gradientUnits="userSpaceOnUse" x1="1094" y1="0" x2="1331" y2="0"><stop offset="0.0021" stop-color="#00beff"/><stop offset="0.1371" stop-color="#64acff"/><stop offset="0.3776" stop-color="#ff87fe"/><stop offset="0.4831" stop-color="#ff5dc9"/><stop offset="0.6181" stop-color="#ff3a9e"/><stop offset="0.7869" stop-color="#ff1c7c"/><stop offset="0.9979" stop-color="#ff0061"/></linearGradient><linearGradient id="gi68" gradientUnits="userSpaceOnUse" x1="1094" y1="0" x2="1329" y2="0"><stop offset="0.0021" stop-color="#00baff"/><stop offset="0.0106" stop-color="#01b9ff"/><stop offset="0.0574" stop-color="#29b3ff"/><stop offset="0.1468" stop-color="#67a7ff"/><stop offset="0.3894" stop-color="#ff82fe"/><stop offset="0.4957" stop-color="#ff59ca"/><stop offset="0.6277" stop-color="#ff38a1"/><stop offset="0.7936" stop-color="#ff1b7f"/><stop offset="0.9979" stop-color="#ff0064"/></linearGradient><linearGradient id="gi69" gradientUnits="userSpaceOnUse" x1="1095" y1="0" x2="1327" y2="0"><stop offset="0.0022" stop-color="#00b5ff"/><stop offset="0.1401" stop-color="#62a3ff"/><stop offset="0.3987" stop-color="#ff7dfe"/><stop offset="0.5065" stop-color="#ff55cb"/><stop offset="0.6358" stop-color="#ff36a3"/><stop offset="0.7953" stop-color="#ff1b82"/><stop offset="0.9978" stop-color="#ff0067"/></linearGradient><linearGradient id="gi70" gradientUnits="userSpaceOnUse" x1="1095" y1="0" x2="1325" y2="0"><stop offset="0.0022" stop-color="#00b1ff"/><stop offset="0.1500" stop-color="#659eff"/><stop offset="0.4109" stop-color="#ff78fe"/><stop offset="0.5152" stop-color="#ff53cd"/><stop offset="0.6413" stop-color="#ff35a6"/><stop offset="0.8022" stop-color="#ff1a85"/><stop offset="0.9978" stop-color="#ff006a"/></linearGradient><linearGradient id="gi71" gradientUnits="userSpaceOnUse" x1="1095" y1="0" x2="1323" y2="0"><stop offset="0.0022" stop-color="#00adff"/><stop offset="0.0110" stop-color="#01acff"/><stop offset="0.0636" stop-color="#2aa6ff"/><stop offset="0.1601" stop-color="#6899ff"/><stop offset="0.4232" stop-color="#ff73fe"/><stop offset="0.5241" stop-color="#ff51cf"/><stop offset="0.6513" stop-color="#ff33a8"/><stop offset="0.8048" stop-color="#ff1988"/><stop offset="0.9978" stop-color="#ff006d"/></linearGradient><linearGradient id="gi72" gradientUnits="userSpaceOnUse" x1="1096" y1="0" x2="1321" y2="0"><stop offset="0.0022" stop-color="#00a9ff"/><stop offset="0.1489" stop-color="#6097ff"/><stop offset="0.4333" stop-color="#ff6efe"/><stop offset="0.5356" stop-color="#ff4dd0"/><stop offset="0.6600" stop-color="#ff31aa"/><stop offset="0.8111" stop-color="#ff188b"/><stop offset="0.9978" stop-color="#ff0070"/></linearGradient><linearGradient id="gi73" gradientUnits="userSpaceOnUse" x1="1096" y1="0" x2="1319" y2="0"><stop offset="0.0022" stop-color="#00a5ff"/><stop offset="0.1592" stop-color="#6392ff"/><stop offset="0.4462" stop-color="#ff6afe"/><stop offset="0.5493" stop-color="#ff4ad1"/><stop offset="0.6704" stop-color="#ff2fac"/><stop offset="0.8184" stop-color="#ff178d"/><stop offset="0.9978" stop-color="#ff0074"/></linearGradient><linearGradient id="gi74" gradientUnits="userSpaceOnUse" x1="1096" y1="0" x2="1317" y2="0"><stop offset="0.0023" stop-color="#00a2ff"/><stop offset="0.0113" stop-color="#01a0ff"/><stop offset="0.0611" stop-color="#269bff"/><stop offset="0.1606" stop-color="#618eff"/><stop offset="0.4548" stop-color="#fe66ff"/><stop offset="0.5633" stop-color="#ff46d1"/><stop offset="0.6810" stop-color="#ff2dae"/><stop offset="0.8258" stop-color="#ff1690"/><stop offset="0.9977" stop-color="#ff0077"/></linearGradient><linearGradient id="gi75" gradientUnits="userSpaceOnUse" x1="1096" y1="0" x2="1315" y2="0"><stop offset="0.0023" stop-color="#009eff"/><stop offset="0.0114" stop-color="#009dff"/><stop offset="0.0662" stop-color="#2797ff"/><stop offset="0.1712" stop-color="#648aff"/><stop offset="0.4680" stop-color="#fe62ff"/><stop offset="0.5731" stop-color="#ff44d3"/><stop offset="0.6872" stop-color="#ff2cb1"/><stop offset="0.8288" stop-color="#ff1693"/><stop offset="0.9977" stop-color="#ff007a"/></linearGradient><linearGradient id="gi76" gradientUnits="userSpaceOnUse" x1="1097" y1="0" x2="1313" y2="0"><stop offset="0.0023" stop-color="#009aff"/><stop offset="0.1644" stop-color="#5f87ff"/><stop offset="0.4792" stop-color="#fe5eff"/><stop offset="0.5810" stop-color="#ff42d5"/><stop offset="0.6968" stop-color="#ff2ab3"/><stop offset="0.8356" stop-color="#ff1596"/><stop offset="0.9977" stop-color="#ff007e"/></linearGradient><linearGradient id="gi77" gradientUnits="userSpaceOnUse" x1="1097" y1="0" x2="1311" y2="0"><stop offset="0.0023" stop-color="#0097ff"/><stop offset="0.1706" stop-color="#5f84ff"/><stop offset="0.4930" stop-color="#fe5aff"/><stop offset="0.5958" stop-color="#ff3fd6"/><stop offset="0.7079" stop-color="#ff29b5"/><stop offset="0.8388" stop-color="#ff159a"/><stop offset="0.9977" stop-color="#ff0081"/></linearGradient><linearGradient id="gi78" gradientUnits="userSpaceOnUse" x1="1097" y1="0" x2="1310" y2="0"><stop offset="0.0023" stop-color="#0094ff"/><stop offset="0.0117" stop-color="#0193ff"/><stop offset="0.0681" stop-color="#268cff"/><stop offset="0.1808" stop-color="#627fff"/><stop offset="0.5047" stop-color="#fe56ff"/><stop offset="0.6033" stop-color="#ff3dd8"/><stop offset="0.7160" stop-color="#ff27b7"/><stop offset="0.9977" stop-color="#ff0084"/></linearGradient><linearGradient id="gi79" gradientUnits="userSpaceOnUse" x1="1098" y1="0" x2="1308" y2="0"><stop offset="0.0024" stop-color="#0090ff"/><stop offset="0.1738" stop-color="#5e7dff"/><stop offset="0.5167" stop-color="#fe52ff"/><stop offset="0.6167" stop-color="#ff39d8"/><stop offset="0.7214" stop-color="#ff26ba"/><stop offset="0.9976" stop-color="#ff0088"/></linearGradient><linearGradient id="gi80" gradientUnits="userSpaceOnUse" x1="1098" y1="0" x2="1306" y2="0"><stop offset="0.0024" stop-color="#008dff"/><stop offset="0.1851" stop-color="#6079ff"/><stop offset="0.5312" stop-color="#fe4eff"/><stop offset="0.6274" stop-color="#ff37da"/><stop offset="0.7332" stop-color="#ff24bc"/><stop offset="0.9976" stop-color="#ff008b"/></linearGradient><linearGradient id="gi81" gradientUnits="userSpaceOnUse" x1="1098" y1="0" x2="1304" y2="0"><stop offset="0.0024" stop-color="#008aff"/><stop offset="0.0121" stop-color="#0189ff"/><stop offset="0.0752" stop-color="#2782ff"/><stop offset="0.1966" stop-color="#6375ff"/><stop offset="0.5461" stop-color="#fe4aff"/><stop offset="0.6383" stop-color="#ff35dc"/><stop offset="0.7403" stop-color="#ff23bf"/><stop offset="0.9976" stop-color="#ff008f"/></linearGradient><linearGradient id="gi82" gradientUnits="userSpaceOnUse" x1="1099" y1="0" x2="1302" y2="0"><stop offset="0.0025" stop-color="#0087ff"/><stop offset="0.1847" stop-color="#5c73ff"/><stop offset="0.5591" stop-color="#fe46ff"/><stop offset="0.7512" stop-color="#ff21c1"/><stop offset="0.9975" stop-color="#ff0093"/></linearGradient><linearGradient id="gi83" gradientUnits="userSpaceOnUse" x1="1099" y1="0" x2="1300" y2="0"><stop offset="0.0025" stop-color="#0084ff"/><stop offset="0.1965" stop-color="#5f70ff"/><stop offset="0.5746" stop-color="#fe43fe"/><stop offset="0.7587" stop-color="#ff20c4"/><stop offset="0.9975" stop-color="#ff0096"/></linearGradient><linearGradient id="gi84" gradientUnits="userSpaceOnUse" x1="1099" y1="0" x2="1298" y2="0"><stop offset="0.0025" stop-color="#0081ff"/><stop offset="0.2085" stop-color="#616cff"/><stop offset="0.5905" stop-color="#fe3ffe"/><stop offset="0.7714" stop-color="#ff1ec6"/><stop offset="0.9975" stop-color="#ff009a"/></linearGradient><linearGradient id="gi85" gradientUnits="userSpaceOnUse" x1="1100" y1="0" x2="1296" y2="0"><stop offset="0.0026" stop-color="#007eff"/><stop offset="0.2015" stop-color="#5d6aff"/><stop offset="0.6046" stop-color="#ff3cfe"/><stop offset="0.7781" stop-color="#ff1dc9"/><stop offset="0.9974" stop-color="#ff009e"/></linearGradient><linearGradient id="gi86" gradientUnits="userSpaceOnUse" x1="1100" y1="0" x2="1294" y2="0"><stop offset="0.0026" stop-color="#007bff"/><stop offset="0.2088" stop-color="#5e67ff"/><stop offset="0.6211" stop-color="#ff38fe"/><stop offset="0.7912" stop-color="#ff1bcb"/><stop offset="0.9974" stop-color="#ff00a2"/></linearGradient><linearGradient id="gi87" gradientUnits="userSpaceOnUse" x1="1100" y1="0" x2="1292" y2="0"><stop offset="0.0026" stop-color="#0079ff"/><stop offset="0.2161" stop-color="#5e64ff"/><stop offset="0.6328" stop-color="#fd36ff"/><stop offset="0.8047" stop-color="#ff19cd"/><stop offset="0.9974" stop-color="#ff00a6"/></linearGradient><linearGradient id="gi88" gradientUnits="userSpaceOnUse" x1="1101" y1="0" x2="1290" y2="0"><stop offset="0.0026" stop-color="#0076ff"/><stop offset="0.2090" stop-color="#5a62ff"/><stop offset="0.6481" stop-color="#fd33ff"/><stop offset="0.8122" stop-color="#ff18d0"/><stop offset="0.9974" stop-color="#ff00ab"/></linearGradient><linearGradient id="gi89" gradientUnits="userSpaceOnUse" x1="1101" y1="0" x2="1288" y2="0"><stop offset="0.0027" stop-color="#0074ff"/><stop offset="0.2166" stop-color="#5b60ff"/><stop offset="0.6658" stop-color="#fd2fff"/><stop offset="0.8262" stop-color="#ff16d1"/><stop offset="0.9973" stop-color="#ff00af"/></linearGradient><linearGradient id="gi90" gradientUnits="userSpaceOnUse" x1="1101" y1="0" x2="1286" y2="0"><stop offset="0.0027" stop-color="#0071ff"/><stop offset="0.2297" stop-color="#5d5cff"/><stop offset="0.6838" stop-color="#fe2cff"/><stop offset="0.8351" stop-color="#ff15d4"/><stop offset="0.9973" stop-color="#ff00b3"/></linearGradient><linearGradient id="gi91" gradientUnits="userSpaceOnUse" x1="1101" y1="0" x2="1284" y2="0"><stop offset="0.0027" stop-color="#006fff"/><stop offset="0.2432" stop-color="#5f59ff"/><stop offset="0.7022" stop-color="#fe29ff"/><stop offset="0.8443" stop-color="#ff13d7"/><stop offset="0.9973" stop-color="#ff00b8"/></linearGradient><linearGradient id="gi92" gradientUnits="userSpaceOnUse" x1="1102" y1="0" x2="1282" y2="0"><stop offset="0.0028" stop-color="#006cff"/><stop offset="0.2361" stop-color="#5c58ff"/><stop offset="0.7194" stop-color="#fe26ff"/><stop offset="0.8583" stop-color="#ff11d9"/><stop offset="0.9972" stop-color="#ff00bc"/></linearGradient><linearGradient id="gi93" gradientUnits="userSpaceOnUse" x1="1102" y1="0" x2="1280" y2="0"><stop offset="0.0028" stop-color="#006aff"/><stop offset="0.2444" stop-color="#5c55ff"/><stop offset="0.7388" stop-color="#fe23ff"/><stop offset="0.9972" stop-color="#ff00c1"/></linearGradient><linearGradient id="gi94" gradientUnits="userSpaceOnUse" x1="1102" y1="0" x2="1278" y2="0"><stop offset="0.0028" stop-color="#0068ff"/><stop offset="0.2585" stop-color="#5e52ff"/><stop offset="0.7585" stop-color="#fe20ff"/><stop offset="0.9972" stop-color="#ff00c6"/></linearGradient><linearGradient id="gi95" gradientUnits="userSpaceOnUse" x1="1103" y1="0" x2="1276" y2="0"><stop offset="0.0029" stop-color="#0065ff"/><stop offset="0.2514" stop-color="#5b51ff"/><stop offset="0.7775" stop-color="#fe1dff"/><stop offset="0.9971" stop-color="#ff00ca"/></linearGradient><linearGradient id="gi96" gradientUnits="userSpaceOnUse" x1="1103" y1="0" x2="1274" y2="0"><stop offset="0.0029" stop-color="#0063ff"/><stop offset="0.2661" stop-color="#5d4eff"/><stop offset="0.7982" stop-color="#fe1aff"/><stop offset="0.9971" stop-color="#ff00cf"/></linearGradient><linearGradient id="gi97" gradientUnits="userSpaceOnUse" x1="1103" y1="0" x2="1272" y2="0"><stop offset="0.0030" stop-color="#0061ff"/><stop offset="0.2811" stop-color="#5f4bff"/><stop offset="0.8195" stop-color="#fe17ff"/><stop offset="0.9970" stop-color="#ff00d5"/></linearGradient><linearGradient id="gi98" gradientUnits="userSpaceOnUse" x1="1104" y1="0" x2="1270" y2="0"><stop offset="0.0030" stop-color="#005fff"/><stop offset="0.2681" stop-color="#5a4aff"/><stop offset="0.8343" stop-color="#fd14ff"/><stop offset="0.9970" stop-color="#ff00da"/></linearGradient><linearGradient id="gi99" gradientUnits="userSpaceOnUse" x1="1104" y1="0" x2="1268" y2="0"><stop offset="0.0030" stop-color="#005dff"/><stop offset="0.2774" stop-color="#5a48ff"/><stop offset="0.8567" stop-color="#fd11ff"/><stop offset="0.9970" stop-color="#ff00df"/></linearGradient><linearGradient id="gi100" gradientUnits="userSpaceOnUse" x1="1104" y1="0" x2="1266" y2="0"><stop offset="0.0031" stop-color="#005bff"/><stop offset="0.2932" stop-color="#5c45ff"/><stop offset="0.8796" stop-color="#fd0eff"/><stop offset="0.9969" stop-color="#ff00e5"/></linearGradient><linearGradient id="gi101" gradientUnits="userSpaceOnUse" x1="1105" y1="0" x2="1264" y2="0"><stop offset="0.0031" stop-color="#0059ff"/><stop offset="0.2862" stop-color="#5944ff"/><stop offset="0.9025" stop-color="#fd0bff"/><stop offset="0.9969" stop-color="#ff00ea"/></linearGradient><linearGradient id="gi102" gradientUnits="userSpaceOnUse" x1="1105" y1="0" x2="1262" y2="0"><stop offset="0.0032" stop-color="#0057ff"/><stop offset="0.2389" stop-color="#4946ff"/><stop offset="0.6592" stop-color="#b924ff"/><stop offset="0.9331" stop-color="#fe07ff"/><stop offset="0.9968" stop-color="#ff00f0"/></linearGradient><linearGradient id="gi103" gradientUnits="userSpaceOnUse" x1="1105" y1="0" x2="1260" y2="0"><stop offset="0.0032" stop-color="#0055ff"/><stop offset="0.1968" stop-color="#3c48ff"/><stop offset="0.4742" stop-color="#8532ff"/><stop offset="0.9516" stop-color="#fd05ff"/><stop offset="0.9968" stop-color="#ff00f6"/></linearGradient><linearGradient id="gi104" gradientUnits="userSpaceOnUse" x1="1106" y1="0" x2="1259" y2="0"><stop offset="0.0033" stop-color="#0053ff"/><stop offset="0.1471" stop-color="#2d49ff"/><stop offset="0.3693" stop-color="#6939ff"/><stop offset="0.9706" stop-color="#fd01ff"/><stop offset="0.9967" stop-color="#ff00fa"/></linearGradient><linearGradient id="gi105" gradientUnits="userSpaceOnUse" x1="1106" y1="0" x2="1257" y2="0"><stop offset="0.0033" stop-color="#0051ff"/><stop offset="0.3212" stop-color="#5a3bff"/><stop offset="0.9967" stop-color="#fd00ff"/></linearGradient><linearGradient id="gi106" gradientUnits="userSpaceOnUse" x1="1106" y1="0" x2="1255" y2="0"><stop offset="0.0034" stop-color="#0050ff"/><stop offset="0.3322" stop-color="#5b39ff"/><stop offset="0.9966" stop-color="#f700ff"/></linearGradient><linearGradient id="gi107" gradientUnits="userSpaceOnUse" x1="1106" y1="0" x2="1253" y2="0"><stop offset="0.0034" stop-color="#004eff"/><stop offset="0.3435" stop-color="#5b37ff"/><stop offset="0.9966" stop-color="#f100ff"/></linearGradient><linearGradient id="gi108" gradientUnits="userSpaceOnUse" x1="1107" y1="0" x2="1251" y2="0"><stop offset="0.0035" stop-color="#004cff"/><stop offset="0.3229" stop-color="#5537ff"/><stop offset="0.9965" stop-color="#eb00ff"/></linearGradient><linearGradient id="gi109" gradientUnits="userSpaceOnUse" x1="1107" y1="0" x2="1249" y2="0"><stop offset="0.0035" stop-color="#004aff"/><stop offset="0.3345" stop-color="#5535ff"/><stop offset="0.9965" stop-color="#e600ff"/></linearGradient><linearGradient id="gi110" gradientUnits="userSpaceOnUse" x1="1107" y1="0" x2="1247" y2="0"><stop offset="0.0036" stop-color="#0049ff"/><stop offset="0.3464" stop-color="#5533ff"/><stop offset="0.9964" stop-color="#e000ff"/></linearGradient><linearGradient id="gi111" gradientUnits="userSpaceOnUse" x1="1108" y1="0" x2="1245" y2="0"><stop offset="0.0036" stop-color="#0047ff"/><stop offset="0.3321" stop-color="#5133ff"/><stop offset="0.9964" stop-color="#db00ff"/></linearGradient><linearGradient id="gi112" gradientUnits="userSpaceOnUse" x1="1108" y1="0" x2="1243" y2="0"><stop offset="0.0037" stop-color="#0045ff"/><stop offset="0.3370" stop-color="#5031ff"/><stop offset="0.9963" stop-color="#d500ff"/></linearGradient><linearGradient id="gi113" gradientUnits="userSpaceOnUse" x1="1108" y1="0" x2="1241" y2="0"><stop offset="0.0038" stop-color="#0044ff"/><stop offset="0.3496" stop-color="#5030ff"/><stop offset="0.9962" stop-color="#d000ff"/></linearGradient><linearGradient id="gi114" gradientUnits="userSpaceOnUse" x1="1109" y1="0" x2="1239" y2="0"><stop offset="0.0038" stop-color="#0042ff"/><stop offset="0.3346" stop-color="#4c2fff"/><stop offset="0.9962" stop-color="#cb00ff"/></linearGradient><linearGradient id="gi115" gradientUnits="userSpaceOnUse" x1="1109" y1="0" x2="1237" y2="0"><stop offset="0.0039" stop-color="#0041ff"/><stop offset="0.3477" stop-color="#4c2dff"/><stop offset="0.9961" stop-color="#c600ff"/></linearGradient><linearGradient id="gi116" gradientUnits="userSpaceOnUse" x1="1109" y1="0" x2="1235" y2="0"><stop offset="0.0040" stop-color="#003fff"/><stop offset="0.3532" stop-color="#4b2cff"/><stop offset="0.9960" stop-color="#c100ff"/></linearGradient><linearGradient id="gi117" gradientUnits="userSpaceOnUse" x1="1110" y1="0" x2="1233" y2="0"><stop offset="0.0041" stop-color="#003dff"/><stop offset="0.3374" stop-color="#472cff"/><stop offset="0.9959" stop-color="#bc00ff"/></linearGradient><linearGradient id="gi118" gradientUnits="userSpaceOnUse" x1="1110" y1="0" x2="1231" y2="0"><stop offset="0.0041" stop-color="#003cff"/><stop offset="0.3512" stop-color="#472aff"/><stop offset="0.9959" stop-color="#b700ff"/></linearGradient><linearGradient id="gi119" gradientUnits="userSpaceOnUse" x1="1110" y1="0" x2="1229" y2="0"><stop offset="0.0042" stop-color="#003bff"/><stop offset="0.3571" stop-color="#4629ff"/><stop offset="0.9958" stop-color="#b200ff"/></linearGradient><linearGradient id="gi120" gradientUnits="userSpaceOnUse" x1="1111" y1="0" x2="1227" y2="0"><stop offset="0.0043" stop-color="#0039ff"/><stop offset="0.3405" stop-color="#4228ff"/><stop offset="0.9957" stop-color="#ad00ff"/></linearGradient><linearGradient id="gi121" gradientUnits="userSpaceOnUse" x1="1111" y1="0" x2="1225" y2="0"><stop offset="0.0044" stop-color="#0038ff"/><stop offset="0.3553" stop-color="#4327ff"/><stop offset="0.9956" stop-color="#a900ff"/></linearGradient><linearGradient id="gi122" gradientUnits="userSpaceOnUse" x1="1111" y1="0" x2="1223" y2="0"><stop offset="0.0045" stop-color="#0036ff"/><stop offset="0.3616" stop-color="#4225ff"/><stop offset="0.9955" stop-color="#a400ff"/></linearGradient><linearGradient id="gi123" gradientUnits="userSpaceOnUse" x1="1111" y1="0" x2="1221" y2="0"><stop offset="0.0045" stop-color="#0035ff"/><stop offset="0.3773" stop-color="#4224ff"/><stop offset="0.9955" stop-color="#a000ff"/></linearGradient><linearGradient id="gi124" gradientUnits="userSpaceOnUse" x1="1112" y1="0" x2="1219" y2="0"><stop offset="0.0047" stop-color="#0033ff"/><stop offset="0.3598" stop-color="#3e23ff"/><stop offset="0.9953" stop-color="#9c00ff"/></linearGradient><linearGradient id="gi125" gradientUnits="userSpaceOnUse" x1="1112" y1="0" x2="1217" y2="0"><stop offset="0.0048" stop-color="#0032ff"/><stop offset="0.3667" stop-color="#3d22ff"/><stop offset="0.9952" stop-color="#9700ff"/></linearGradient><linearGradient id="gi126" gradientUnits="userSpaceOnUse" x1="1112" y1="0" x2="1215" y2="0"><stop offset="0.0049" stop-color="#0031ff"/><stop offset="0.3835" stop-color="#3e21ff"/><stop offset="0.9951" stop-color="#9300ff"/></linearGradient><linearGradient id="gi127" gradientUnits="userSpaceOnUse" x1="1113" y1="0" x2="1213" y2="0"><stop offset="0.0050" stop-color="#002fff"/><stop offset="0.3650" stop-color="#3a20ff"/><stop offset="0.9950" stop-color="#8f00ff"/></linearGradient><linearGradient id="gi128" gradientUnits="userSpaceOnUse" x1="1113" y1="0" x2="1211" y2="0"><stop offset="0.0051" stop-color="#002eff"/><stop offset="0.3724" stop-color="#391fff"/><stop offset="0.9949" stop-color="#8b00ff"/></linearGradient><linearGradient id="gi129" gradientUnits="userSpaceOnUse" x1="1113" y1="0" x2="1209" y2="0"><stop offset="0.0052" stop-color="#002dff"/><stop offset="0.3906" stop-color="#3a1eff"/><stop offset="0.9948" stop-color="#8700ff"/></linearGradient><linearGradient id="gi130" gradientUnits="userSpaceOnUse" x1="1114" y1="0" x2="1207" y2="0"><stop offset="0.0054" stop-color="#002cff"/><stop offset="0.3710" stop-color="#361dff"/><stop offset="0.9946" stop-color="#8300ff"/></linearGradient><linearGradient id="gi131" gradientUnits="userSpaceOnUse" x1="1114" y1="0" x2="1206" y2="0"><stop offset="0.0054" stop-color="#002aff"/><stop offset="0.3750" stop-color="#351cff"/><stop offset="0.9946" stop-color="#8000ff"/></linearGradient><linearGradient id="gi132" gradientUnits="userSpaceOnUse" x1="1114" y1="0" x2="1204" y2="0"><stop offset="0.0056" stop-color="#0029ff"/><stop offset="0.3944" stop-color="#361bff"/><stop offset="0.9944" stop-color="#7c00ff"/></linearGradient><linearGradient id="gi133" gradientUnits="userSpaceOnUse" x1="1115" y1="0" x2="1202" y2="0"><stop offset="0.0057" stop-color="#0028ff"/><stop offset="0.3736" stop-color="#321bff"/><stop offset="0.9943" stop-color="#7900ff"/></linearGradient><linearGradient id="gi134" gradientUnits="userSpaceOnUse" x1="1115" y1="0" x2="1200" y2="0"><stop offset="0.0059" stop-color="#0027ff"/><stop offset="0.3824" stop-color="#311aff"/><stop offset="0.9941" stop-color="#7500ff"/></linearGradient><linearGradient id="gi135" gradientUnits="userSpaceOnUse" x1="1115" y1="0" x2="1198" y2="0"><stop offset="0.0060" stop-color="#0026ff"/><stop offset="0.4036" stop-color="#3218ff"/><stop offset="0.9940" stop-color="#7100ff"/></linearGradient><linearGradient id="gi136" gradientUnits="userSpaceOnUse" x1="1116" y1="0" x2="1196" y2="0"><stop offset="0.0063" stop-color="#0024ff"/><stop offset="0.3688" stop-color="#2d18ff"/><stop offset="0.9938" stop-color="#6d00ff"/></linearGradient><linearGradient id="gi137" gradientUnits="userSpaceOnUse" x1="1116" y1="0" x2="1194" y2="0"><stop offset="0.0064" stop-color="#0023ff"/><stop offset="0.3910" stop-color="#2e17ff"/><stop offset="0.9936" stop-color="#6a00ff"/></linearGradient><linearGradient id="gi138" gradientUnits="userSpaceOnUse" x1="1116" y1="0" x2="1192" y2="0"><stop offset="0.0066" stop-color="#0022ff"/><stop offset="0.9934" stop-color="#6600ff"/></linearGradient><linearGradient id="gi139" gradientUnits="userSpaceOnUse" x1="1116" y1="0" x2="1190" y2="0"><stop offset="0.0068" stop-color="#0021ff"/><stop offset="0.9932" stop-color="#6300ff"/></linearGradient><linearGradient id="gi140" gradientUnits="userSpaceOnUse" x1="1117" y1="0" x2="1188" y2="0"><stop offset="0.0070" stop-color="#0020ff"/><stop offset="0.9930" stop-color="#5f00ff"/></linearGradient><linearGradient id="gi141" gradientUnits="userSpaceOnUse" x1="1117" y1="0" x2="1186" y2="0"><stop offset="0.0072" stop-color="#001fff"/><stop offset="0.9928" stop-color="#5c00ff"/></linearGradient><linearGradient id="gi142" gradientUnits="userSpaceOnUse" x1="1117" y1="0" x2="1184" y2="0"><stop offset="0.0075" stop-color="#001eff"/><stop offset="0.9925" stop-color="#5800ff"/></linearGradient><linearGradient id="gi143" gradientUnits="userSpaceOnUse" x1="1118" y1="0" x2="1182" y2="0"><stop offset="0.0078" stop-color="#001cff"/><stop offset="0.9922" stop-color="#5500ff"/></linearGradient><linearGradient id="gi144" gradientUnits="userSpaceOnUse" x1="1118" y1="0" x2="1180" y2="0"><stop offset="0.0081" stop-color="#001bff"/><stop offset="0.9919" stop-color="#5200ff"/></linearGradient><linearGradient id="gi145" gradientUnits="userSpaceOnUse" x1="1118" y1="0" x2="1178" y2="0"><stop offset="0.0083" stop-color="#001aff"/><stop offset="0.9917" stop-color="#4e00ff"/></linearGradient><linearGradient id="gi146" gradientUnits="userSpaceOnUse" x1="1119" y1="0" x2="1176" y2="0"><stop offset="0.0088" stop-color="#0019ff"/><stop offset="0.9912" stop-color="#4b00ff"/></linearGradient><linearGradient id="gi147" gradientUnits="userSpaceOnUse" x1="1119" y1="0" x2="1174" y2="0"><stop offset="0.0091" stop-color="#0018ff"/><stop offset="0.9909" stop-color="#4800ff"/></linearGradient><linearGradient id="gi148" gradientUnits="userSpaceOnUse" x1="1119" y1="0" x2="1172" y2="0"><stop offset="0.0094" stop-color="#0017ff"/><stop offset="0.9906" stop-color="#4500ff"/></linearGradient><linearGradient id="gi149" gradientUnits="userSpaceOnUse" x1="1120" y1="0" x2="1170" y2="0"><stop offset="0.0100" stop-color="#0016ff"/><stop offset="0.9900" stop-color="#4200ff"/></linearGradient><linearGradient id="gi150" gradientUnits="userSpaceOnUse" x1="1120" y1="0" x2="1168" y2="0"><stop offset="0.0104" stop-color="#0015ff"/><stop offset="0.9896" stop-color="#3e00ff"/></linearGradient><linearGradient id="gi151" gradientUnits="userSpaceOnUse" x1="1120" y1="0" x2="1166" y2="0"><stop offset="0.0109" stop-color="#0014ff"/><stop offset="0.9891" stop-color="#3b00ff"/></linearGradient><linearGradient id="gi152" gradientUnits="userSpaceOnUse" x1="1121" y1="0" x2="1164" y2="0"><stop offset="0.0116" stop-color="#0013ff"/><stop offset="0.9884" stop-color="#3800ff"/></linearGradient><linearGradient id="gi153" gradientUnits="userSpaceOnUse" x1="1121" y1="0" x2="1162" y2="0"><stop offset="0.0122" stop-color="#0012ff"/><stop offset="0.9878" stop-color="#3500ff"/></linearGradient><linearGradient id="gi154" gradientUnits="userSpaceOnUse" x1="1121" y1="0" x2="1160" y2="0"><stop offset="0.0128" stop-color="#0011ff"/><stop offset="0.9872" stop-color="#3200ff"/></linearGradient><linearGradient id="gi155" gradientUnits="userSpaceOnUse" x1="1121" y1="0" x2="1158" y2="0"><stop offset="0.0135" stop-color="#0010ff"/><stop offset="0.9865" stop-color="#2f00ff"/></linearGradient><linearGradient id="gi156" gradientUnits="userSpaceOnUse" x1="1122" y1="0" x2="1156" y2="0"><stop offset="0.0147" stop-color="#000fff"/><stop offset="0.9853" stop-color="#2c00ff"/></linearGradient><linearGradient id="gi157" gradientUnits="userSpaceOnUse" x1="1122" y1="0" x2="1155" y2="0"><stop offset="0.0152" stop-color="#000eff"/><stop offset="0.9848" stop-color="#2a00ff"/></linearGradient><linearGradient id="gi158" gradientUnits="userSpaceOnUse" x1="1122" y1="0" x2="1153" y2="0"><stop offset="0.0161" stop-color="#000dff"/><stop offset="0.9839" stop-color="#2700ff"/></linearGradient><linearGradient id="gi159" gradientUnits="userSpaceOnUse" x1="1123" y1="0" x2="1151" y2="0"><stop offset="0.0179" stop-color="#000cff"/><stop offset="0.9821" stop-color="#2400ff"/></linearGradient><linearGradient id="gi160" gradientUnits="userSpaceOnUse" x1="1123" y1="0" x2="1149" y2="0"><stop offset="0.0192" stop-color="#000bff"/><stop offset="0.9808" stop-color="#2100ff"/></linearGradient><linearGradient id="gi161" gradientUnits="userSpaceOnUse" x1="1123" y1="0" x2="1147" y2="0"><stop offset="0.0208" stop-color="#000aff"/><stop offset="0.9792" stop-color="#1e00ff"/></linearGradient><linearGradient id="gi162" gradientUnits="userSpaceOnUse" x1="1124" y1="0" x2="1145" y2="0"><stop offset="0.0238" stop-color="#0009ff"/><stop offset="0.9762" stop-color="#1b00ff"/></linearGradient><linearGradient id="gi163" gradientUnits="userSpaceOnUse" x1="1124" y1="0" x2="1143" y2="0"><stop offset="0.0263" stop-color="#0008ff"/><stop offset="0.9737" stop-color="#1800ff"/></linearGradient><linearGradient id="gi164" gradientUnits="userSpaceOnUse" x1="1124" y1="0" x2="1141" y2="0"><stop offset="0.0294" stop-color="#0007ff"/><stop offset="0.9706" stop-color="#1500ff"/></linearGradient><linearGradient id="gi165" gradientUnits="userSpaceOnUse" x1="1125" y1="0" x2="1139" y2="0"><stop offset="0.0357" stop-color="#0006ff"/><stop offset="0.9643" stop-color="#1200ff"/></linearGradient><linearGradient id="gi166" gradientUnits="userSpaceOnUse" x1="1125" y1="0" x2="1137" y2="0"><stop offset="0.0417" stop-color="#0005ff"/><stop offset="0.9583" stop-color="#0f00ff"/></linearGradient><linearGradient id="gi167" gradientUnits="userSpaceOnUse" x1="1125" y1="0" x2="1135" y2="0"><stop offset="0.0500" stop-color="#0004ff"/><stop offset="0.9500" stop-color="#0c00ff"/></linearGradient><linearGradient id="gi168" gradientUnits="userSpaceOnUse" x1="1126" y1="0" x2="1133" y2="0"><stop offset="0.0714" stop-color="#0002ff"/><stop offset="0.9286" stop-color="#0800ff"/></linearGradient><linearGradient id="gi169" gradientUnits="userSpaceOnUse" x1="1126" y1="0" x2="1131" y2="0"><stop offset="0.1000" stop-color="#0001ff"/><stop offset="0.9000" stop-color="#0500ff"/></linearGradient><clipPath id="locus"><polygon points="1209.8,503.6 1209.8,503.6 1209.8,503.6 1209.8,503.6 1209.8,503.6 1209.8,503.6 1209.7,503.7 1209.7,503.7 1209.7,503.7 1209.7,503.8 1209.7,503.8 1209.7,503.8 1209.6,503.9 1209.6,503.9 1209.6,504.0 1209.6,504.0 1209.6,504.1 1209.5,504.1 1209.5,504.1 1209.5,504.2 1209.5,504.2 1209.4,504.2 1209.4,504.2 1209.4,504.3 1209.3,504.3 1209.3,504.3 1209.3,504.3 1209.2,504.3 1209.2,504.3 1209.2,504.3 1209.1,504.4 1209.1,504.4 1209.1,504.4 1209.0,504.5 1209.0,504.5 1208.9,504.5 1208.9,504.6 1208.9,504.6 1208.8,504.7 1208.8,504.7 1208.7,504.8 1208.7,504.8 1208.7,504.8 1208.6,504.8 1208.6,504.8 1208.5,504.9 1208.5,504.9 1208.4,504.9 1208.4,504.9 1208.3,504.9 1208.2,504.9 1208.2,504.9 1208.1,504.9 1208.1,504.9 1208.0,504.9 1207.9,505.0 1207.9,505.0 1207.8,505.0 1207.7,505.0 1207.7,505.0 1207.6,505.1 1207.5,505.1 1207.4,505.1 1207.4,505.1 1207.3,505.2 1207.2,505.2 1207.1,505.2 1207.0,505.2 1206.9,505.2 1206.9,505.2 1206.8,505.2 1206.6,505.2 1206.5,505.2 1206.4,505.1 1206.3,505.1 1206.1,505.0 1206.0,505.0 1205.8,504.9 1205.6,504.8 1205.5,504.7 1205.3,504.6 1205.0,504.5 1204.8,504.4 1204.6,504.2 1204.3,504.1 1204.1,503.9 1203.8,503.8 1203.5,503.6 1203.3,503.4 1203.0,503.2 1202.7,503.0 1202.4,502.8 1202.1,502.6 1201.7,502.4 1201.4,502.2 1201.1,501.9 1200.7,501.7 1200.4,501.4 1200.0,501.1 1199.6,500.8 1199.2,500.5 1198.7,500.2 1198.3,499.8 1197.8,499.5 1197.3,499.1 1196.8,498.7 1196.3,498.3 1195.8,497.9 1195.2,497.5 1194.7,497.0 1194.1,496.6 1193.5,496.1 1193.0,495.6 1192.3,495.1 1191.7,494.6 1191.1,494.1 1190.5,493.5 1189.8,493.0 1189.1,492.4 1188.5,491.9 1187.8,491.3 1187.0,490.7 1186.3,490.1 1185.6,489.5 1184.8,488.9 1184.0,488.2 1183.2,487.6 1182.4,486.9 1181.5,486.2 1180.6,485.5 1179.7,484.8 1178.8,484.0 1177.8,483.2 1176.8,482.4 1175.8,481.6 1174.7,480.7 1173.6,479.9 1172.5,479.0 1171.4,478.1 1170.3,477.2 1169.1,476.2 1168.0,475.3 1166.8,474.3 1165.6,473.4 1164.4,472.4 1163.1,471.3 1161.8,470.3 1160.5,469.2 1159.2,468.1 1157.8,466.9 1156.4,465.8 1155.0,464.5 1153.5,463.3 1152.0,462.0 1150.5,460.6 1149.0,459.2 1147.4,457.8 1145.8,456.4 1144.2,454.9 1142.5,453.4 1140.8,451.8 1139.1,450.2 1137.4,448.6 1135.7,446.9 1133.9,445.2 1132.1,443.4 1130.2,441.5 1128.3,439.5 1126.3,437.4 1124.2,435.2 1122.1,432.9 1119.9,430.4 1117.6,427.8 1115.3,425.1 1112.9,422.3 1110.4,419.4 1107.9,416.3 1105.3,413.2 1102.6,409.9 1100.0,406.5 1097.2,403.0 1094.5,399.4 1091.6,395.7 1088.8,391.8 1085.9,387.9 1083.0,383.8 1080.0,379.7 1077.0,375.4 1074.0,371.0 1071.0,366.5 1067.9,361.9 1064.8,357.2 1061.6,352.4 1058.5,347.5 1055.3,342.4 1052.1,337.3 1048.9,332.2 1045.7,326.9 1042.5,321.6 1039.3,316.2 1036.0,310.8 1032.8,305.4 1029.6,299.9 1026.4,294.4 1023.3,288.9 1020.2,283.3 1017.1,277.8 1014.1,272.2 1011.1,266.7 1008.2,261.1 1005.4,255.6 1002.6,250.1 1000.0,244.6 997.4,239.1 994.9,233.7 992.4,228.4 990.1,223.1 987.8,217.8 985.6,212.6 983.5,207.5 981.4,202.5 979.5,197.6 977.6,192.7 975.7,188.0 974.0,183.4 972.3,178.8 970.7,174.4 969.2,170.1 967.8,165.9 966.4,161.8 965.2,157.8 964.0,153.9 962.9,150.2 961.9,146.6 960.9,143.1 960.1,139.7 959.3,136.5 958.5,133.3 957.9,130.3 957.3,127.4 956.8,124.6 956.3,121.8 955.9,119.2 955.6,116.7 955.3,114.3 955.0,111.9 954.9,109.6 954.8,107.5 954.7,105.4 954.7,103.4 954.7,101.4 954.8,99.5 955.0,97.7 955.2,96.0 955.4,94.3 955.7,92.7 956.1,91.1 956.5,89.6 956.9,88.2 957.4,86.8 957.9,85.5 958.5,84.2 959.1,83.0 959.8,81.9 960.5,80.8 961.3,79.8 962.1,78.8 962.9,77.9 963.7,77.0 964.6,76.2 965.6,75.4 966.5,74.7 967.5,74.0 968.5,73.4 969.6,72.8 970.7,72.3 971.8,71.8 972.9,71.4 974.0,71.0 975.2,70.6 976.4,70.3 977.6,70.0 978.8,69.7 980.1,69.4 981.3,69.2 982.6,69.0 983.9,68.9 985.2,68.7 986.6,68.6 987.9,68.5 989.3,68.4 990.6,68.3 992.0,68.2 993.4,68.1 994.8,68.1 996.2,68.0 997.6,68.0 999.0,67.9 1000.5,67.9 1001.9,67.9 1003.3,67.9 1004.7,67.9 1006.1,67.9 1007.6,67.9 1009.0,67.9 1010.4,67.9 1011.8,67.9 1013.3,68.0 1014.7,68.0 1016.1,68.0 1017.6,68.1 1019.0,68.1 1020.5,68.2 1021.9,68.2 1023.4,68.3 1024.9,68.4 1026.4,68.4 1027.9,68.5 1029.4,68.6 1030.9,68.7 1032.4,68.8 1034.0,68.9 1035.5,69.0 1037.1,69.1 1038.7,69.2 1040.3,69.3 1041.9,69.4 1043.5,69.5 1045.2,69.7 1046.8,69.8 1048.5,69.9 1050.1,70.1 1051.8,70.2 1053.5,70.3 1055.3,70.5 1057.0,70.7 1058.7,70.8 1060.5,71.0 1062.3,71.1 1064.1,71.3 1065.9,71.5 1067.7,71.7 1069.6,71.8 1071.4,72.0 1073.3,72.2 1075.2,72.4 1077.1,72.6 1079.1,72.8 1081.0,73.0 1083.0,73.2 1085.0,73.4 1087.1,73.6 1089.1,73.9 1091.2,74.1 1093.3,74.3 1095.4,74.5 1097.5,74.7 1099.7,75.0 1101.8,75.2 1104.0,75.5 1106.2,75.7 1108.5,75.9 1110.8,76.2 1113.0,76.4 1115.3,76.7 1117.7,76.9 1120.0,77.2 1122.4,77.5 1124.8,77.7 1127.3,78.0 1129.7,78.3 1132.2,78.5 1134.7,78.8 1137.2,79.1 1139.8,79.4 1142.4,79.7 1145.0,80.0 1147.6,80.3 1150.3,80.6 1153.0,80.9 1155.7,81.2 1158.4,81.5 1161.2,81.8 1164.0,82.1 1166.8,82.4 1169.6,82.7 1172.5,83.1 1175.4,83.4 1178.3,83.7 1181.3,84.0 1184.2,84.4 1187.2,84.7 1190.3,85.1 1193.3,85.4 1196.4,85.8 1199.5,86.1 1202.6,86.5 1205.8,86.8 1208.9,87.2 1212.2,87.6 1215.4,87.9 1218.6,88.3 1221.9,88.7 1225.2,89.0 1228.5,89.4 1231.9,89.8 1235.3,90.2 1238.7,90.6 1242.1,91.0 1245.5,91.4 1249.0,91.7 1252.4,92.1 1255.9,92.5 1259.4,92.9 1263.0,93.3 1266.5,93.7 1270.1,94.1 1273.7,94.5 1277.3,94.9 1280.9,95.4 1284.5,95.8 1288.1,96.2 1291.8,96.6 1295.5,97.0 1299.1,97.4 1302.8,97.9 1306.4,98.3 1310.1,98.7 1313.7,99.1 1317.4,99.5 1321.0,99.9 1324.6,100.3 1328.2,100.8 1331.7,101.2 1335.3,101.6 1338.8,102.0 1342.3,102.4 1345.8,102.8 1349.4,103.2 1352.9,103.6 1356.4,104.0 1359.9,104.4 1363.4,104.8 1366.9,105.2 1370.4,105.5 1373.8,105.9 1377.3,106.3 1380.7,106.7 1384.1,107.1 1387.5,107.5 1390.8,107.9 1394.1,108.2 1397.3,108.6 1400.6,109.0 1403.7,109.3 1406.9,109.7 1410.0,110.0 1413.0,110.4 1416.1,110.7 1419.0,111.0 1422.0,111.4 1424.9,111.7 1427.8,112.0 1430.7,112.4 1433.5,112.7 1436.3,113.0 1439.0,113.3 1441.7,113.6 1444.4,113.9 1447.0,114.2 1449.6,114.5 1452.1,114.8 1454.6,115.1 1457.0,115.4 1459.5,115.6 1461.8,115.9 1464.1,116.2 1466.4,116.4 1468.7,116.7 1470.9,116.9 1473.0,117.2 1475.2,117.4 1477.3,117.6 1479.3,117.9 1481.3,118.1 1483.3,118.3 1485.2,118.5 1487.2,118.7 1489.0,119.0 1490.9,119.2 1492.7,119.4 1494.5,119.6 1496.2,119.8 1497.9,120.0 1499.6,120.1 1501.3,120.3 1502.9,120.5 1504.5,120.7 1506.1,120.9 1507.7,121.1 1509.2,121.2 1510.8,121.4 1512.3,121.6 1513.8,121.7 1515.2,121.9 1516.7,122.1 1518.1,122.2 1519.5,122.4 1520.9,122.5 1522.3,122.7 1523.6,122.8 1524.9,123.0 1526.2,123.1 1527.5,123.3 1528.7,123.4 1530.0,123.5 1531.2,123.7 1532.3,123.8 1533.5,123.9 1534.6,124.1 1535.8,124.2 1536.8,124.3 1537.9,124.4 1539.0,124.5 1540.0,124.6 1541.0,124.8 1542.0,124.9 1542.9,125.0 1543.8,125.1 1544.7,125.2 1545.6,125.2 1546.4,125.3 1547.2,125.4 1548.0,125.5 1548.8,125.6 1549.5,125.7 1550.3,125.8 1551.0,125.8 1551.7,125.9 1552.5,126.0 1553.2,126.1 1553.9,126.2 1554.7,126.2 1555.4,126.3 1556.2,126.4 1557.0,126.5 1557.8,126.6 1558.5,126.7 1559.3,126.7 1560.1,126.8 1560.9,126.9 1561.7,127.0 1562.5,127.1 1563.3,127.2 1564.1,127.3 1564.9,127.4 1565.7,127.4 1566.5,127.5 1567.3,127.6 1568.1,127.7 1568.8,127.8 1569.6,127.9 1570.4,128.0 1571.2,128.0 1572.0,128.1 1572.7,128.2 1573.5,128.3 1574.3,128.4 1575.0,128.5 1575.8,128.5 1576.5,128.6 1577.2,128.7 1577.9,128.8 1578.7,128.8 1579.4,128.9 1580.0,129.0 1580.7,129.1 1581.4,129.1 1582.0,129.2 1582.7,129.3 1583.3,129.3 1583.9,129.4 1584.5,129.5 1585.1,129.5 1585.7,129.6 1586.2,129.6 1586.8,129.7 1587.3,129.8 1587.8,129.8 1588.3,129.9 1588.7,129.9 1589.2,130.0 1589.6,130.0 1590.0,130.0 1590.4,130.1 1590.8,130.1 1591.1,130.1 1591.4,130.2 1591.7,130.2 1592.0,130.2 1592.2,130.3 1592.5,130.3 1592.7,130.3 1592.8,130.3 1593.0,130.3 1593.1,130.3 1593.2,130.3 1593.3,130.3 1593.3,130.3 1593.3,130.3 1593.3,130.3 1593.2,130.3 1593.1,130.3 1593.0,130.3 1592.9,130.3 1592.7,130.2 1592.5,130.2 1592.2,130.2 1591.9,130.1 1591.6,130.1 1591.3,130.0 1590.9,130.0 1590.5,129.9 1590.0,129.9 1589.5,129.8 1589.0,129.8 1588.4,129.7 1587.8,129.6 1587.1,129.5 1586.5,129.5 1585.7,129.4 1585.0,129.3 1584.1,129.2 1583.3,129.1 1582.4,129.0 1581.4,128.9 1580.5,128.7 1579.4,128.6 1578.4,128.5 1577.2,128.4 1576.1,128.2"/></clipPath><clipPath id="tri"><polygon points="1403.65,114.99 1079.47,85.85 1128.03,395.98"/></clipPath>
<linearGradient id="inset" x1="0" y1="0" x2="1" y2="1"><stop offset="0" stop-color="#ff8c30"/><stop offset="1" stop-color="#ff4424"/></linearGradient>
<linearGradient id="thdr" x1="0" y1="0" x2="0" y2="1"><stop offset="0" stop-color="#2c2c2c"/><stop offset="0.5" stop-color="#262626"/><stop offset="0.52" stop-color="#161616"/><stop offset="1" stop-color="#111111"/></linearGradient>
<linearGradient id="tab" x1="0" y1="0" x2="0" y2="1"><stop offset="0" stop-color="#b9b9b9"/><stop offset="0.5" stop-color="#9a9a9a"/><stop offset="1" stop-color="#6c6c6c"/></linearGradient>
<linearGradient id="tabsel" x1="0" y1="0" x2="0" y2="1"><stop offset="0" stop-color="#1e1e1e"/><stop offset="1" stop-color="#2c2c2c"/></linearGradient>
<linearGradient id="btn" x1="0" y1="0" x2="0" y2="1"><stop offset="0" stop-color="#bdbdbd"/><stop offset="1" stop-color="#7a7a7a"/></linearGradient>
<linearGradient id="btnd" x1="0" y1="0" x2="0" y2="1"><stop offset="0" stop-color="#3a3a3a"/><stop offset="1" stop-color="#262626"/></linearGradient>
<linearGradient id="knob" x1="0" y1="0" x2="0" y2="1"><stop offset="0" stop-color="#8c8c8c"/><stop offset="1" stop-color="#c4c4c4"/></linearGradient>
<linearGradient id="knobd" x1="0" y1="0" x2="0" y2="1"><stop offset="0" stop-color="#262626"/><stop offset="1" stop-color="#3c3c3c"/></linearGradient></defs>
<rect x="0.00" y="0.00" width="1559.00" height="858.00" fill="#333333" />
<text x="6.8" y="61.9" font-size="39.68" fill="#f2f2f2" textLength="224.6" lengthAdjust="spacingAndGlyphs">ColorChecker</text>
<text x="33.9" y="97.8" font-size="13.95" fill="#eeeeee" textLength="311.4" lengthAdjust="spacingAndGlyphs">Display analysis is performed with the X-Rite/</text>
<text x="33.9" y="118.1" font-size="13.95" fill="#eeeeee" textLength="255.6" lengthAdjust="spacingAndGlyphs">Pantone ColorChecker® target colors.</text>
<text x="101.6" y="163.1" font-size="18.46" fill="#eeeeee" textLength="101.2" lengthAdjust="spacingAndGlyphs">dE Formula:</text>
<rect x="210.60" y="143.50" width="138.40" height="24.50" fill="url(#dd)" stroke="#262626" stroke-width="1"/>
<text x="214.8" y="164.2" font-size="16.72" fill="#eeeeee" textLength="32.2" lengthAdjust="spacingAndGlyphs">2000</text>
<polygon points="335,153.5 344,153.5 339.5,159" fill="#111"/>
<text x="174.8" y="193.1" font-size="14.10" fill="#d2d2d2" text-anchor="middle" textLength="73.9" lengthAdjust="spacingAndGlyphs" stroke="#d2d2d2" stroke-width="0.30">DeltaE 2000</text>
<rect x="17.50" y="198.60" width="314.00" height="310.70" fill="#232323" />
<line x1="59.2" y1="198.6" x2="59.2" y2="509.3" stroke="#9a9a9a" stroke-width="1.2"/>
<line x1="100.9" y1="198.6" x2="100.9" y2="509.3" stroke="#9a9a9a" stroke-width="1.2"/>
<line x1="142.7" y1="198.6" x2="142.7" y2="509.3" stroke="#9a9a9a" stroke-width="1.2"/>
<line x1="184.4" y1="198.6" x2="184.4" y2="509.3" stroke="#9a9a9a" stroke-width="1.2"/>
<line x1="226.2" y1="198.6" x2="226.2" y2="509.3" stroke="#9a9a9a" stroke-width="1.2"/>
<line x1="268.0" y1="198.6" x2="268.0" y2="509.3" stroke="#9a9a9a" stroke-width="1.2"/>
<line x1="309.7" y1="198.6" x2="309.7" y2="509.3" stroke="#9a9a9a" stroke-width="1.2"/>
<rect x="17.5" y="198.6" width="314.0" height="310.7" fill="none" stroke="#9a9a9a" stroke-width="1.2"/>
<line x1="17.4" y1="509.3" x2="17.4" y2="514.3" stroke="#c8c8c8" stroke-width="1.6"/>
<text x="17.4" y="530.0" font-size="13.08" fill="#d2d2d2" text-anchor="middle" textLength="7.6" lengthAdjust="spacingAndGlyphs" stroke="#d2d2d2" stroke-width="0.30">0</text>
<line x1="59.2" y1="509.3" x2="59.2" y2="514.3" stroke="#c8c8c8" stroke-width="1.6"/>
<text x="59.2" y="530.0" font-size="13.08" fill="#d2d2d2" text-anchor="middle" textLength="7.6" lengthAdjust="spacingAndGlyphs" stroke="#d2d2d2" stroke-width="0.30">2</text>
<line x1="100.9" y1="509.3" x2="100.9" y2="514.3" stroke="#c8c8c8" stroke-width="1.6"/>
<text x="100.9" y="530.0" font-size="13.08" fill="#d2d2d2" text-anchor="middle" textLength="7.6" lengthAdjust="spacingAndGlyphs" stroke="#d2d2d2" stroke-width="0.30">4</text>
<line x1="142.7" y1="509.3" x2="142.7" y2="514.3" stroke="#c8c8c8" stroke-width="1.6"/>
<text x="142.7" y="530.0" font-size="13.08" fill="#d2d2d2" text-anchor="middle" textLength="7.6" lengthAdjust="spacingAndGlyphs" stroke="#d2d2d2" stroke-width="0.30">6</text>
<line x1="184.4" y1="509.3" x2="184.4" y2="514.3" stroke="#c8c8c8" stroke-width="1.6"/>
<text x="184.4" y="530.0" font-size="13.08" fill="#d2d2d2" text-anchor="middle" textLength="7.6" lengthAdjust="spacingAndGlyphs" stroke="#d2d2d2" stroke-width="0.30">8</text>
<line x1="226.2" y1="509.3" x2="226.2" y2="514.3" stroke="#c8c8c8" stroke-width="1.6"/>
<text x="226.2" y="530.0" font-size="13.08" fill="#d2d2d2" text-anchor="middle" textLength="15.3" lengthAdjust="spacingAndGlyphs" stroke="#d2d2d2" stroke-width="0.30">10</text>
<line x1="268.0" y1="509.3" x2="268.0" y2="514.3" stroke="#c8c8c8" stroke-width="1.6"/>
<text x="268.0" y="530.0" font-size="13.08" fill="#d2d2d2" text-anchor="middle" textLength="15.3" lengthAdjust="spacingAndGlyphs" stroke="#d2d2d2" stroke-width="0.30">12</text>
<line x1="309.7" y1="509.3" x2="309.7" y2="514.3" stroke="#c8c8c8" stroke-width="1.6"/>
<text x="309.7" y="530.0" font-size="13.08" fill="#d2d2d2" text-anchor="middle" textLength="15.3" lengthAdjust="spacingAndGlyphs" stroke="#d2d2d2" stroke-width="0.30">14</text>
<rect x="18.2" y="502.70" width="113.12" height="6.2" fill="#050505"/>
<rect x="18.9" y="503.50" width="110.82" height="3.4" fill="url(#bar0)"/>
<rect x="18.9" y="503.50" width="110.82" height="3.4" fill="url(#bshade)"/>
<rect x="18.2" y="496.10" width="97.00" height="6.2" fill="#050505"/>
<rect x="18.9" y="496.90" width="94.70" height="3.4" fill="url(#bar1)"/>
<rect x="18.9" y="496.90" width="94.70" height="3.4" fill="url(#bshade)"/>
<rect x="18.2" y="489.50" width="90.24" height="6.2" fill="#050505"/>
<rect x="18.9" y="490.30" width="87.94" height="3.4" fill="url(#bar2)"/>
<rect x="18.9" y="490.30" width="87.94" height="3.4" fill="url(#bshade)"/>
<rect x="18.2" y="482.90" width="84.48" height="6.2" fill="#050505"/>
<rect x="18.9" y="483.70" width="82.18" height="3.4" fill="url(#bar3)"/>
<rect x="18.9" y="483.70" width="82.18" height="3.4" fill="url(#bshade)"/>
<rect x="18.2" y="476.30" width="78.55" height="6.2" fill="#050505"/>
<rect x="18.9" y="477.10" width="76.25" height="3.4" fill="url(#bar4)"/>
<rect x="18.9" y="477.10" width="76.25" height="3.4" fill="url(#bshade)"/>
<rect x="18.2" y="469.70" width="23.27" height="6.2" fill="#050505"/>
<rect x="18.9" y="470.50" width="20.97" height="3.4" fill="url(#bar5)"/>
<rect x="18.9" y="470.50" width="20.97" height="3.4" fill="url(#bshade)"/>
<rect x="18.2" y="463.10" width="46.65" height="6.2" fill="#050505"/>
<rect x="18.9" y="463.90" width="44.35" height="3.4" fill="url(#bar6)"/>
<rect x="18.9" y="463.90" width="44.35" height="3.4" fill="url(#bshade)"/>
<rect x="18.2" y="456.50" width="50.30" height="6.2" fill="#050505"/>
<rect x="18.9" y="457.30" width="48.00" height="3.4" fill="url(#bar7)"/>
<rect x="18.9" y="457.30" width="48.00" height="3.4" fill="url(#bshade)"/>
<rect x="18.2" y="449.90" width="52.29" height="6.2" fill="#050505"/>
<rect x="18.9" y="450.70" width="49.99" height="3.4" fill="url(#bar8)"/>
<rect x="18.9" y="450.70" width="49.99" height="3.4" fill="url(#bshade)"/>
<rect x="18.2" y="443.30" width="45.86" height="6.2" fill="#050505"/>
<rect x="18.9" y="444.10" width="43.56" height="3.4" fill="url(#bar9)"/>
<rect x="18.9" y="444.10" width="43.56" height="3.4" fill="url(#bshade)"/>
<rect x="18.2" y="436.70" width="49.65" height="6.2" fill="#050505"/>
<rect x="18.9" y="437.50" width="47.35" height="3.4" fill="url(#bar10)"/>
<rect x="18.9" y="437.50" width="47.35" height="3.4" fill="url(#bshade)"/>
<rect x="18.2" y="430.10" width="35.60" height="6.2" fill="#050505"/>
<rect x="18.9" y="430.90" width="33.30" height="3.4" fill="url(#bar11)"/>
<rect x="18.9" y="430.90" width="33.30" height="3.4" fill="url(#bshade)"/>
<rect x="18.2" y="423.50" width="49.14" height="6.2" fill="#050505"/>
<rect x="18.9" y="424.30" width="46.84" height="3.4" fill="url(#bar12)"/>
<rect x="18.9" y="424.30" width="46.84" height="3.4" fill="url(#bshade)"/>
<rect x="18.2" y="416.90" width="42.18" height="6.2" fill="#050505"/>
<rect x="18.9" y="417.70" width="39.88" height="3.4" fill="url(#bar13)"/>
<rect x="18.9" y="417.70" width="39.88" height="3.4" fill="url(#bshade)"/>
<rect x="18.2" y="410.30" width="32.99" height="6.2" fill="#050505"/>
<rect x="18.9" y="411.10" width="30.69" height="3.4" fill="url(#bar14)"/>
<rect x="18.9" y="411.10" width="30.69" height="3.4" fill="url(#bshade)"/>
<rect x="18.2" y="403.70" width="38.21" height="6.2" fill="#050505"/>
<rect x="18.9" y="404.50" width="35.91" height="3.4" fill="url(#bar15)"/>
<rect x="18.9" y="404.50" width="35.91" height="3.4" fill="url(#bshade)"/>
<rect x="18.2" y="397.10" width="38.21" height="6.2" fill="#050505"/>
<rect x="18.9" y="397.90" width="35.91" height="3.4" fill="url(#bar16)"/>
<rect x="18.9" y="397.90" width="35.91" height="3.4" fill="url(#bshade)"/>
<rect x="18.2" y="390.50" width="49.28" height="6.2" fill="#050505"/>
<rect x="18.9" y="391.30" width="46.98" height="3.4" fill="url(#bar17)"/>
<rect x="18.9" y="391.30" width="46.98" height="3.4" fill="url(#bshade)"/>
<rect x="18.2" y="383.90" width="41.34" height="6.2" fill="#050505"/>
<rect x="18.9" y="384.70" width="39.04" height="3.4" fill="url(#bar18)"/>
<rect x="18.9" y="384.70" width="39.04" height="3.4" fill="url(#bshade)"/>
<rect x="18.2" y="377.30" width="38.21" height="6.2" fill="#050505"/>
<rect x="18.9" y="378.10" width="35.91" height="3.4" fill="url(#bar19)"/>
<rect x="18.9" y="378.10" width="35.91" height="3.4" fill="url(#bshade)"/>
<rect x="18.2" y="370.70" width="36.12" height="6.2" fill="#050505"/>
<rect x="18.9" y="371.50" width="33.82" height="3.4" fill="url(#bar20)"/>
<rect x="18.9" y="371.50" width="33.82" height="3.4" fill="url(#bshade)"/>
<rect x="18.2" y="364.10" width="45.94" height="6.2" fill="#050505"/>
<rect x="18.9" y="364.90" width="43.64" height="3.4" fill="url(#bar21)"/>
<rect x="18.9" y="364.90" width="43.64" height="3.4" fill="url(#bshade)"/>
<rect x="18.2" y="357.50" width="36.12" height="6.2" fill="#050505"/>
<rect x="18.9" y="358.30" width="33.82" height="3.4" fill="url(#bar22)"/>
<rect x="18.9" y="358.30" width="33.82" height="3.4" fill="url(#bshade)"/>
<rect x="18.2" y="350.90" width="38.21" height="6.2" fill="#050505"/>
<rect x="18.9" y="351.70" width="35.91" height="3.4" fill="url(#bar23)"/>
<rect x="18.9" y="351.70" width="35.91" height="3.4" fill="url(#bshade)"/>
<rect x="18.2" y="344.30" width="30.07" height="6.2" fill="#050505"/>
<rect x="18.9" y="345.10" width="27.77" height="3.4" fill="url(#bar24)"/>
<rect x="18.9" y="345.10" width="27.77" height="3.4" fill="url(#bshade)"/>
<rect x="18.2" y="337.70" width="30.28" height="6.2" fill="#050505"/>
<rect x="18.9" y="338.50" width="27.98" height="3.4" fill="url(#bar25)"/>
<rect x="18.9" y="338.50" width="27.98" height="3.4" fill="url(#bshade)"/>
<rect x="18.2" y="331.10" width="31.53" height="6.2" fill="#050505"/>
<rect x="18.9" y="331.90" width="29.23" height="3.4" fill="url(#bar26)"/>
<rect x="18.9" y="331.90" width="29.23" height="3.4" fill="url(#bshade)"/>
<rect x="18.2" y="324.50" width="32.99" height="6.2" fill="#050505"/>
<rect x="18.9" y="325.30" width="30.69" height="3.4" fill="url(#bar27)"/>
<rect x="18.9" y="325.30" width="30.69" height="3.4" fill="url(#bshade)"/>
<rect x="18.2" y="317.90" width="33.20" height="6.2" fill="#050505"/>
<rect x="18.9" y="318.70" width="30.90" height="3.4" fill="url(#bar28)"/>
<rect x="18.9" y="318.70" width="30.90" height="3.4" fill="url(#bshade)"/>
<rect x="18.2" y="311.30" width="49.69" height="6.2" fill="#050505"/>
<rect x="18.9" y="312.10" width="47.39" height="3.4" fill="url(#bar29)"/>
<rect x="18.9" y="312.10" width="47.39" height="3.4" fill="url(#bshade)"/>
<rect x="18.2" y="304.70" width="42.18" height="6.2" fill="#050505"/>
<rect x="18.9" y="305.50" width="39.88" height="3.4" fill="url(#bar30)"/>
<rect x="18.9" y="305.50" width="39.88" height="3.4" fill="url(#bshade)"/>
<rect x="18.2" y="298.10" width="45.10" height="6.2" fill="#050505"/>
<rect x="18.9" y="298.90" width="42.80" height="3.4" fill="url(#bar31)"/>
<rect x="18.9" y="298.90" width="42.80" height="3.4" fill="url(#bshade)"/>
<rect x="18.2" y="291.50" width="46.98" height="6.2" fill="#050505"/>
<rect x="18.9" y="292.30" width="44.68" height="3.4" fill="url(#bar32)"/>
<rect x="18.9" y="292.30" width="44.68" height="3.4" fill="url(#bshade)"/>
<rect x="18.2" y="284.90" width="45.10" height="6.2" fill="#050505"/>
<rect x="18.9" y="285.70" width="42.80" height="3.4" fill="url(#bar33)"/>
<rect x="18.9" y="285.70" width="42.80" height="3.4" fill="url(#bshade)"/>
<rect x="18.2" y="278.30" width="40.92" height="6.2" fill="#050505"/>
<rect x="18.9" y="279.10" width="38.62" height="3.4" fill="url(#bar34)"/>
<rect x="18.9" y="279.10" width="38.62" height="3.4" fill="url(#bshade)"/>
<rect x="18.2" y="271.70" width="46.98" height="6.2" fill="#050505"/>
<rect x="18.9" y="272.50" width="44.68" height="3.4" fill="url(#bar35)"/>
<rect x="18.9" y="272.50" width="44.68" height="3.4" fill="url(#bshade)"/>
<rect x="18.2" y="265.10" width="49.28" height="6.2" fill="#050505"/>
<rect x="18.9" y="265.90" width="46.98" height="3.4" fill="url(#bar36)"/>
<rect x="18.9" y="265.90" width="46.98" height="3.4" fill="url(#bshade)"/>
<rect x="18.2" y="258.50" width="45.94" height="6.2" fill="#050505"/>
<rect x="18.9" y="259.30" width="43.64" height="3.4" fill="url(#bar37)"/>
<rect x="18.9" y="259.30" width="43.64" height="3.4" fill="url(#bshade)"/>
<rect x="18.2" y="251.90" width="49.28" height="6.2" fill="#050505"/>
<rect x="18.9" y="252.70" width="46.98" height="3.4" fill="url(#bar38)"/>
<rect x="18.9" y="252.70" width="46.98" height="3.4" fill="url(#bshade)"/>
<rect x="18.2" y="245.30" width="42.39" height="6.2" fill="#050505"/>
<rect x="18.9" y="246.10" width="40.09" height="3.4" fill="url(#bar39)"/>
<rect x="18.9" y="246.10" width="40.09" height="3.4" fill="url(#bshade)"/>
<rect x="18.2" y="238.70" width="42.18" height="6.2" fill="#050505"/>
<rect x="18.9" y="239.50" width="39.88" height="3.4" fill="url(#bar40)"/>
<rect x="18.9" y="239.50" width="39.88" height="3.4" fill="url(#bshade)"/>
<rect x="18.2" y="232.10" width="34.87" height="6.2" fill="#050505"/>
<rect x="18.9" y="232.90" width="32.57" height="3.4" fill="url(#bar41)"/>
<rect x="18.9" y="232.90" width="32.57" height="3.4" fill="url(#bshade)"/>
<rect x="18.2" y="225.50" width="45.94" height="6.2" fill="#050505"/>
<rect x="18.9" y="226.30" width="43.64" height="3.4" fill="url(#bar42)"/>
<rect x="18.9" y="226.30" width="43.64" height="3.4" fill="url(#bshade)"/>
<rect x="18.2" y="218.90" width="45.10" height="6.2" fill="#050505"/>
<rect x="18.9" y="219.70" width="42.80" height="3.4" fill="url(#bar43)"/>
<rect x="18.9" y="219.70" width="42.80" height="3.4" fill="url(#bshade)"/>
<rect x="18.2" y="212.30" width="45.10" height="6.2" fill="#050505"/>
<rect x="18.9" y="213.10" width="42.80" height="3.4" fill="url(#bar44)"/>
<rect x="18.9" y="213.10" width="42.80" height="3.4" fill="url(#bshade)"/>
<rect x="18.2" y="205.70" width="45.10" height="6.2" fill="#050505"/>
<rect x="18.9" y="206.50" width="42.80" height="3.4" fill="url(#bar45)"/>
<rect x="18.9" y="206.50" width="42.80" height="3.4" fill="url(#bshade)"/>
<rect x="18.2" y="199.10" width="44.06" height="6.2" fill="#050505"/>
<rect x="18.9" y="199.90" width="41.76" height="3.4" fill="url(#bar46)"/>
<rect x="18.9" y="199.90" width="41.76" height="3.4" fill="url(#bshade)"/>
<text x="436.7" y="53.1" font-size="13.66" fill="#d2d2d2" text-anchor="middle" textLength="42.3" lengthAdjust="spacingAndGlyphs" stroke="#d2d2d2" stroke-width="0.30">Delta L</text>
<rect x="373.40" y="57.60" width="143.00" height="316.00" fill="#232323" />
<line x1="373.4" y1="373.6" x2="516.4" y2="373.6" stroke="#9a9a9a" stroke-width="1.2"/>
<line x1="367.4" y1="373.6" x2="373.4" y2="373.6" stroke="#c8c8c8" stroke-width="1.6"/>
<text x="366.9" y="378.1" font-size="13.08" fill="#d2d2d2" text-anchor="end" textLength="11.6" lengthAdjust="spacingAndGlyphs" stroke="#d2d2d2" stroke-width="0.30">-4</text>
<line x1="373.4" y1="334.1" x2="516.4" y2="334.1" stroke="#9a9a9a" stroke-width="1.2"/>
<line x1="367.4" y1="334.1" x2="373.4" y2="334.1" stroke="#c8c8c8" stroke-width="1.6"/>
<text x="366.9" y="338.6" font-size="13.08" fill="#d2d2d2" text-anchor="end" textLength="11.6" lengthAdjust="spacingAndGlyphs" stroke="#d2d2d2" stroke-width="0.30">-3</text>
<line x1="373.4" y1="294.6" x2="516.4" y2="294.6" stroke="#9a9a9a" stroke-width="1.2"/>
<line x1="367.4" y1="294.6" x2="373.4" y2="294.6" stroke="#c8c8c8" stroke-width="1.6"/>
<text x="366.9" y="299.1" font-size="13.08" fill="#d2d2d2" text-anchor="end" textLength="11.6" lengthAdjust="spacingAndGlyphs" stroke="#d2d2d2" stroke-width="0.30">-2</text>
<line x1="373.4" y1="255.1" x2="516.4" y2="255.1" stroke="#9a9a9a" stroke-width="1.2"/>
<line x1="367.4" y1="255.1" x2="373.4" y2="255.1" stroke="#c8c8c8" stroke-width="1.6"/>
<text x="366.9" y="259.6" font-size="13.08" fill="#d2d2d2" text-anchor="end" textLength="11.6" lengthAdjust="spacingAndGlyphs" stroke="#d2d2d2" stroke-width="0.30">-1</text>
<line x1="373.4" y1="215.6" x2="516.4" y2="215.6" stroke="#9a9a9a" stroke-width="1.2"/>
<line x1="367.4" y1="215.6" x2="373.4" y2="215.6" stroke="#c8c8c8" stroke-width="1.6"/>
<text x="366.9" y="220.1" font-size="13.08" fill="#d2d2d2" text-anchor="end" textLength="7.3" lengthAdjust="spacingAndGlyphs" stroke="#d2d2d2" stroke-width="0.30">0</text>
<line x1="373.4" y1="176.1" x2="516.4" y2="176.1" stroke="#9a9a9a" stroke-width="1.2"/>
<line x1="367.4" y1="176.1" x2="373.4" y2="176.1" stroke="#c8c8c8" stroke-width="1.6"/>
<text x="366.9" y="180.6" font-size="13.08" fill="#d2d2d2" text-anchor="end" textLength="7.3" lengthAdjust="spacingAndGlyphs" stroke="#d2d2d2" stroke-width="0.30">1</text>
<line x1="373.4" y1="136.6" x2="516.4" y2="136.6" stroke="#9a9a9a" stroke-width="1.2"/>
<line x1="367.4" y1="136.6" x2="373.4" y2="136.6" stroke="#c8c8c8" stroke-width="1.6"/>
<text x="366.9" y="141.1" font-size="13.08" fill="#d2d2d2" text-anchor="end" textLength="7.3" lengthAdjust="spacingAndGlyphs" stroke="#d2d2d2" stroke-width="0.30">2</text>
<line x1="373.4" y1="97.1" x2="516.4" y2="97.1" stroke="#9a9a9a" stroke-width="1.2"/>
<line x1="367.4" y1="97.1" x2="373.4" y2="97.1" stroke="#c8c8c8" stroke-width="1.6"/>
<text x="366.9" y="101.6" font-size="13.08" fill="#d2d2d2" text-anchor="end" textLength="7.3" lengthAdjust="spacingAndGlyphs" stroke="#d2d2d2" stroke-width="0.30">3</text>
<line x1="373.4" y1="57.6" x2="516.4" y2="57.6" stroke="#9a9a9a" stroke-width="1.2"/>
<line x1="367.4" y1="57.6" x2="373.4" y2="57.6" stroke="#c8c8c8" stroke-width="1.6"/>
<text x="366.9" y="62.1" font-size="13.08" fill="#d2d2d2" text-anchor="end" textLength="7.3" lengthAdjust="spacingAndGlyphs" stroke="#d2d2d2" stroke-width="0.30">4</text>
<rect x="373.4" y="57.6" width="143.0" height="316" fill="none" stroke="#9a9a9a" stroke-width="1.2"/>
<rect x="387.4" y="215.6" width="114.5" height="44.2" fill="url(#dbar2)" stroke="#000" stroke-width="1.3"/>
<text x="621.3" y="53.1" font-size="13.66" fill="#d2d2d2" text-anchor="middle" textLength="43.7" lengthAdjust="spacingAndGlyphs" stroke="#d2d2d2" stroke-width="0.30">Delta C</text>
<rect x="558.40" y="57.60" width="142.60" height="316.00" fill="#232323" />
<line x1="558.4" y1="373.6" x2="701.0" y2="373.6" stroke="#9a9a9a" stroke-width="1.2"/>
<line x1="552.4" y1="373.6" x2="558.4" y2="373.6" stroke="#c8c8c8" stroke-width="1.6"/>
<text x="551.9" y="378.1" font-size="13.08" fill="#d2d2d2" text-anchor="end" textLength="11.6" lengthAdjust="spacingAndGlyphs" stroke="#d2d2d2" stroke-width="0.30">-4</text>
<line x1="558.4" y1="334.1" x2="701.0" y2="334.1" stroke="#9a9a9a" stroke-width="1.2"/>
<line x1="552.4" y1="334.1" x2="558.4" y2="334.1" stroke="#c8c8c8" stroke-width="1.6"/>
<text x="551.9" y="338.6" font-size="13.08" fill="#d2d2d2" text-anchor="end" textLength="11.6" lengthAdjust="spacingAndGlyphs" stroke="#d2d2d2" stroke-width="0.30">-3</text>
<line x1="558.4" y1="294.6" x2="701.0" y2="294.6" stroke="#9a9a9a" stroke-width="1.2"/>
<line x1="552.4" y1="294.6" x2="558.4" y2="294.6" stroke="#c8c8c8" stroke-width="1.6"/>
<text x="551.9" y="299.1" font-size="13.08" fill="#d2d2d2" text-anchor="end" textLength="11.6" lengthAdjust="spacingAndGlyphs" stroke="#d2d2d2" stroke-width="0.30">-2</text>
<line x1="558.4" y1="255.1" x2="701.0" y2="255.1" stroke="#9a9a9a" stroke-width="1.2"/>
<line x1="552.4" y1="255.1" x2="558.4" y2="255.1" stroke="#c8c8c8" stroke-width="1.6"/>
<text x="551.9" y="259.6" font-size="13.08" fill="#d2d2d2" text-anchor="end" textLength="11.6" lengthAdjust="spacingAndGlyphs" stroke="#d2d2d2" stroke-width="0.30">-1</text>
<line x1="558.4" y1="215.6" x2="701.0" y2="215.6" stroke="#9a9a9a" stroke-width="1.2"/>
<line x1="552.4" y1="215.6" x2="558.4" y2="215.6" stroke="#c8c8c8" stroke-width="1.6"/>
<text x="551.9" y="220.1" font-size="13.08" fill="#d2d2d2" text-anchor="end" textLength="7.3" lengthAdjust="spacingAndGlyphs" stroke="#d2d2d2" stroke-width="0.30">0</text>
<line x1="558.4" y1="176.1" x2="701.0" y2="176.1" stroke="#9a9a9a" stroke-width="1.2"/>
<line x1="552.4" y1="176.1" x2="558.4" y2="176.1" stroke="#c8c8c8" stroke-width="1.6"/>
<text x="551.9" y="180.6" font-size="13.08" fill="#d2d2d2" text-anchor="end" textLength="7.3" lengthAdjust="spacingAndGlyphs" stroke="#d2d2d2" stroke-width="0.30">1</text>
<line x1="558.4" y1="136.6" x2="701.0" y2="136.6" stroke="#9a9a9a" stroke-width="1.2"/>
<line x1="552.4" y1="136.6" x2="558.4" y2="136.6" stroke="#c8c8c8" stroke-width="1.6"/>
<text x="551.9" y="141.1" font-size="13.08" fill="#d2d2d2" text-anchor="end" textLength="7.3" lengthAdjust="spacingAndGlyphs" stroke="#d2d2d2" stroke-width="0.30">2</text>
<line x1="558.4" y1="97.1" x2="701.0" y2="97.1" stroke="#9a9a9a" stroke-width="1.2"/>
<line x1="552.4" y1="97.1" x2="558.4" y2="97.1" stroke="#c8c8c8" stroke-width="1.6"/>
<text x="551.9" y="101.6" font-size="13.08" fill="#d2d2d2" text-anchor="end" textLength="7.3" lengthAdjust="spacingAndGlyphs" stroke="#d2d2d2" stroke-width="0.30">3</text>
<line x1="558.4" y1="57.6" x2="701.0" y2="57.6" stroke="#9a9a9a" stroke-width="1.2"/>
<line x1="552.4" y1="57.6" x2="558.4" y2="57.6" stroke="#c8c8c8" stroke-width="1.6"/>
<text x="551.9" y="62.1" font-size="13.08" fill="#d2d2d2" text-anchor="end" textLength="7.3" lengthAdjust="spacingAndGlyphs" stroke="#d2d2d2" stroke-width="0.30">4</text>
<rect x="558.4" y="57.6" width="142.6" height="316" fill="none" stroke="#9a9a9a" stroke-width="1.2"/>
<rect x="572.4" y="209.7" width="114.1" height="5.9" fill="url(#dbar2)" stroke="#000" stroke-width="1.3"/>
<text x="806.4" y="53.1" font-size="13.66" fill="#d2d2d2" text-anchor="middle" textLength="45.4" lengthAdjust="spacingAndGlyphs" stroke="#d2d2d2" stroke-width="0.30">Delta H</text>
<rect x="743.90" y="57.60" width="143.50" height="316.00" fill="#232323" />
<line x1="743.9" y1="373.6" x2="887.4" y2="373.6" stroke="#9a9a9a" stroke-width="1.2"/>
<line x1="737.9" y1="373.6" x2="743.9" y2="373.6" stroke="#c8c8c8" stroke-width="1.6"/>
<text x="737.4" y="378.1" font-size="13.08" fill="#d2d2d2" text-anchor="end" textLength="11.6" lengthAdjust="spacingAndGlyphs" stroke="#d2d2d2" stroke-width="0.30">-4</text>
<line x1="743.9" y1="334.1" x2="887.4" y2="334.1" stroke="#9a9a9a" stroke-width="1.2"/>
<line x1="737.9" y1="334.1" x2="743.9" y2="334.1" stroke="#c8c8c8" stroke-width="1.6"/>
<text x="737.4" y="338.6" font-size="13.08" fill="#d2d2d2" text-anchor="end" textLength="11.6" lengthAdjust="spacingAndGlyphs" stroke="#d2d2d2" stroke-width="0.30">-3</text>
<line x1="743.9" y1="294.6" x2="887.4" y2="294.6" stroke="#9a9a9a" stroke-width="1.2"/>
<line x1="737.9" y1="294.6" x2="743.9" y2="294.6" stroke="#c8c8c8" stroke-width="1.6"/>
<text x="737.4" y="299.1" font-size="13.08" fill="#d2d2d2" text-anchor="end" textLength="11.6" lengthAdjust="spacingAndGlyphs" stroke="#d2d2d2" stroke-width="0.30">-2</text>
<line x1="743.9" y1="255.1" x2="887.4" y2="255.1" stroke="#9a9a9a" stroke-width="1.2"/>
<line x1="737.9" y1="255.1" x2="743.9" y2="255.1" stroke="#c8c8c8" stroke-width="1.6"/>
<text x="737.4" y="259.6" font-size="13.08" fill="#d2d2d2" text-anchor="end" textLength="11.6" lengthAdjust="spacingAndGlyphs" stroke="#d2d2d2" stroke-width="0.30">-1</text>
<line x1="743.9" y1="215.6" x2="887.4" y2="215.6" stroke="#9a9a9a" stroke-width="1.2"/>
<line x1="737.9" y1="215.6" x2="743.9" y2="215.6" stroke="#c8c8c8" stroke-width="1.6"/>
<text x="737.4" y="220.1" font-size="13.08" fill="#d2d2d2" text-anchor="end" textLength="7.3" lengthAdjust="spacingAndGlyphs" stroke="#d2d2d2" stroke-width="0.30">0</text>
<line x1="743.9" y1="176.1" x2="887.4" y2="176.1" stroke="#9a9a9a" stroke-width="1.2"/>
<line x1="737.9" y1="176.1" x2="743.9" y2="176.1" stroke="#c8c8c8" stroke-width="1.6"/>
<text x="737.4" y="180.6" font-size="13.08" fill="#d2d2d2" text-anchor="end" textLength="7.3" lengthAdjust="spacingAndGlyphs" stroke="#d2d2d2" stroke-width="0.30">1</text>
<line x1="743.9" y1="136.6" x2="887.4" y2="136.6" stroke="#9a9a9a" stroke-width="1.2"/>
<line x1="737.9" y1="136.6" x2="743.9" y2="136.6" stroke="#c8c8c8" stroke-width="1.6"/>
<text x="737.4" y="141.1" font-size="13.08" fill="#d2d2d2" text-anchor="end" textLength="7.3" lengthAdjust="spacingAndGlyphs" stroke="#d2d2d2" stroke-width="0.30">2</text>
<line x1="743.9" y1="97.1" x2="887.4" y2="97.1" stroke="#9a9a9a" stroke-width="1.2"/>
<line x1="737.9" y1="97.1" x2="743.9" y2="97.1" stroke="#c8c8c8" stroke-width="1.6"/>
<text x="737.4" y="101.6" font-size="13.08" fill="#d2d2d2" text-anchor="end" textLength="7.3" lengthAdjust="spacingAndGlyphs" stroke="#d2d2d2" stroke-width="0.30">3</text>
<line x1="743.9" y1="57.6" x2="887.4" y2="57.6" stroke="#9a9a9a" stroke-width="1.2"/>
<line x1="737.9" y1="57.6" x2="743.9" y2="57.6" stroke="#c8c8c8" stroke-width="1.6"/>
<text x="737.4" y="62.1" font-size="13.08" fill="#d2d2d2" text-anchor="end" textLength="7.3" lengthAdjust="spacingAndGlyphs" stroke="#d2d2d2" stroke-width="0.30">4</text>
<rect x="743.9" y="57.6" width="143.5" height="316" fill="none" stroke="#9a9a9a" stroke-width="1.2"/>
<rect x="757.9" y="112.1" width="115.0" height="103.5" fill="url(#dbar)" stroke="#000" stroke-width="1.3"/>
<rect x="350.40" y="386.00" width="554.60" height="150.30" fill="#000000" />
<text x="0" y="0" font-size="13.6" fill="#eeeeee" text-anchor="middle" font-weight="bold" transform="translate(363.2,415.4) rotate(-90)" textLength="36" lengthAdjust="spacingAndGlyphs">Actual</text>
<text x="0" y="0" font-size="13.6" fill="#eeeeee" text-anchor="middle" font-weight="bold" transform="translate(363.2,477.6) rotate(-90)" textLength="36" lengthAdjust="spacingAndGlyphs">Target</text>
<svg x="350.4" y="386" width="554.6" height="150.3" viewBox="350.4 386 554.6 150.3" overflow="hidden">
<rect x="366.20" y="392.20" width="54.70" height="109.30" fill="#effcff" />
<rect x="366.20" y="446.50" width="54.70" height="55.00" fill="#f8f8f8" />
<rect x="366.7" y="392.7" width="53.7" height="108.3" fill="none" stroke="#f0f0f0" stroke-width="1.1"/>
<text x="393.6" y="516.4" font-size="13.08" fill="#eeeeee" text-anchor="middle" textLength="29.9" lengthAdjust="spacingAndGlyphs" stroke="#eeeeee" stroke-width="0.25">White</text>
<rect x="430.09" y="392.20" width="54.70" height="109.30" fill="#dbe6e6" />
<rect x="430.09" y="446.50" width="54.70" height="55.00" fill="#e5e5e5" />
<rect x="430.6" y="392.7" width="53.7" height="108.3" fill="none" stroke="#f0f0f0" stroke-width="1.1"/>
<text x="457.4" y="516.4" font-size="13.08" fill="#eeeeee" text-anchor="middle" textLength="41.6" lengthAdjust="spacingAndGlyphs" stroke="#eeeeee" stroke-width="0.25">Gray 80</text>
<rect x="493.98" y="392.20" width="54.70" height="109.30" fill="#c6d0d1" />
<rect x="493.98" y="446.50" width="54.70" height="55.00" fill="#d1d1d1" />
<rect x="494.5" y="392.7" width="53.7" height="108.3" fill="none" stroke="#f0f0f0" stroke-width="1.1"/>
<text x="521.3" y="516.4" font-size="13.08" fill="#eeeeee" text-anchor="middle" textLength="41.6" lengthAdjust="spacingAndGlyphs" stroke="#eeeeee" stroke-width="0.25">Gray 65</text>
<rect x="557.87" y="392.20" width="54.70" height="109.30" fill="#adb6b5" />
<rect x="557.87" y="446.50" width="54.70" height="55.00" fill="#bbbbbb" />
<rect x="558.4" y="392.7" width="53.7" height="108.3" fill="none" stroke="#f0f0f0" stroke-width="1.1"/>
<text x="585.2" y="516.4" font-size="13.08" fill="#eeeeee" text-anchor="middle" textLength="41.6" lengthAdjust="spacingAndGlyphs" stroke="#eeeeee" stroke-width="0.25">Gray 50</text>
<rect x="621.76" y="392.20" width="54.70" height="109.30" fill="#949a99" />
<rect x="621.76" y="446.50" width="54.70" height="55.00" fill="#9f9f9f" />
<rect x="622.3" y="392.7" width="53.7" height="108.3" fill="none" stroke="#f0f0f0" stroke-width="1.1"/>
<text x="649.1" y="516.4" font-size="13.08" fill="#eeeeee" text-anchor="middle" textLength="41.6" lengthAdjust="spacingAndGlyphs" stroke="#eeeeee" stroke-width="0.25">Gray 35</text>
<rect x="685.65" y="392.20" width="54.70" height="109.30" fill="#06080b" />
<rect x="685.65" y="446.50" width="54.70" height="55.00" fill="#000000" />
<rect x="686.1" y="392.7" width="53.7" height="108.3" fill="none" stroke="#f0f0f0" stroke-width="1.1"/>
<text x="713.0" y="516.4" font-size="13.08" fill="#eeeeee" text-anchor="middle" textLength="28.6" lengthAdjust="spacingAndGlyphs" stroke="#eeeeee" stroke-width="0.25">Black</text>
<rect x="749.54" y="392.20" width="54.70" height="109.30" fill="#6a4f40" />
<rect x="749.54" y="446.50" width="54.70" height="55.00" fill="#725243" />
<rect x="750.0" y="392.7" width="53.7" height="108.3" fill="none" stroke="#f0f0f0" stroke-width="1.1"/>
<text x="776.9" y="516.4" font-size="13.08" fill="#eeeeee" text-anchor="middle" textLength="50.7" lengthAdjust="spacingAndGlyphs" stroke="#eeeeee" stroke-width="0.25">Dark Skin</text>
<rect x="813.43" y="392.20" width="54.70" height="109.30" fill="#b9957f" />
<rect x="813.43" y="446.50" width="54.70" height="55.00" fill="#c29480" />
<rect x="813.9" y="392.7" width="53.7" height="108.3" fill="none" stroke="#f0f0f0" stroke-width="1.1"/>
<text x="840.8" y="516.4" font-size="13.08" fill="#eeeeee" text-anchor="middle" textLength="51.4" lengthAdjust="spacingAndGlyphs" stroke="#eeeeee" stroke-width="0.25">Light Skin</text>
<rect x="877.32" y="392.20" width="54.70" height="109.30" fill="#577aa0" />
<rect x="877.32" y="446.50" width="54.70" height="55.00" fill="#5f7da4" />
<rect x="877.8" y="392.7" width="53.7" height="108.3" fill="none" stroke="#f0f0f0" stroke-width="1.1"/>
<text x="904.7" y="516.4" font-size="13.08" fill="#eeeeee" text-anchor="middle" textLength="46.2" lengthAdjust="spacingAndGlyphs" stroke="#eeeeee" stroke-width="0.25">Blue Sky</text>
</svg>
<rect x="350.40" y="536.30" width="554.60" height="15.20" fill="#666666" />
<rect x="366" y="538.3" width="95" height="11.2" rx="5.6" fill="#474747"/>
<rect x="351.5" y="538" width="12.5" height="12" rx="2" fill="#7a7a7a"/>
<polygon points="360,540.5 360,547.5 355,544" fill="#3a3a3a"/>
<rect x="891" y="538" width="12.5" height="12" rx="2" fill="#7a7a7a"/>
<polygon points="895,540.5 895,547.5 900,544" fill="#3a3a3a"/>
<rect x="915" y="32" width="644.5" height="516.3" fill="#313131" stroke="#d98c5e" stroke-width="6.4"/>
<text x="1236.4" y="52.3" font-size="13.52" fill="#d2d2d2" text-anchor="middle" textLength="79.7" lengthAdjust="spacingAndGlyphs" stroke="#d2d2d2" stroke-width="0.30">CIE 1976 u&#x27;v&#x27;</text>
<rect x="953.80" y="57.00" width="599.60" height="461.60" fill="#232323" />
<g clip-path="url(#locus)"><rect x="981" y="67" width="57" height="2" fill="#009900"/><rect x="972" y="69" width="91" height="2" fill="#009900"/><rect x="967" y="71" width="116" height="2" fill="url(#go7)"/><rect x="964" y="73" width="138" height="2" fill="url(#go8)"/><rect x="962" y="75" width="158" height="2" fill="url(#go9)"/><rect x="960" y="77" width="178" height="2" fill="url(#go10)"/><rect x="958" y="79" width="198" height="2" fill="url(#go11)"/><rect x="957" y="81" width="217" height="2" fill="url(#go12)"/><rect x="956" y="83" width="236" height="2" fill="url(#go13)"/><rect x="955" y="85" width="254" height="2" fill="url(#go14)"/><rect x="955" y="87" width="272" height="2" fill="url(#go15)"/><rect x="954" y="89" width="290" height="2" fill="url(#go16)"/><rect x="954" y="91" width="308" height="2" fill="url(#go17)"/><rect x="953" y="93" width="327" height="2" fill="url(#go18)"/><rect x="953" y="95" width="344" height="2" fill="url(#go19)"/><rect x="953" y="97" width="362" height="2" fill="url(#go20)"/><rect x="953" y="99" width="379" height="2" fill="url(#go21)"/><rect x="953" y="101" width="397" height="2" fill="url(#go22)"/><rect x="953" y="103" width="415" height="2" fill="url(#go23)"/><rect x="953" y="105" width="432" height="2" fill="url(#go24)"/><rect x="953" y="107" width="450" height="2" fill="url(#go25)"/><rect x="953" y="109" width="468" height="2" fill="url(#go26)"/><rect x="953" y="111" width="485" height="2" fill="url(#go27)"/><rect x="953" y="113" width="503" height="2" fill="url(#go28)"/><rect x="953" y="115" width="521" height="2" fill="url(#go29)"/><rect x="954" y="117" width="537" height="2" fill="url(#go30)"/><rect x="954" y="119" width="555" height="2" fill="url(#go31)"/><rect x="954" y="121" width="573" height="2" fill="url(#go32)"/><rect x="955" y="123" width="590" height="2" fill="url(#go33)"/><rect x="955" y="125" width="598" height="2" fill="url(#go34)"/><rect x="955" y="127" width="598" height="2" fill="url(#go35)"/><rect x="956" y="129" width="597" height="2" fill="url(#go36)"/><rect x="956" y="131" width="597" height="2" fill="url(#go37)"/><rect x="956" y="133" width="597" height="2" fill="url(#go38)"/><rect x="957" y="135" width="596" height="2" fill="url(#go39)"/><rect x="957" y="137" width="596" height="2" fill="url(#go40)"/><rect x="958" y="139" width="595" height="2" fill="url(#go41)"/><rect x="958" y="141" width="595" height="2" fill="url(#go42)"/><rect x="959" y="143" width="594" height="2" fill="url(#go43)"/><rect x="959" y="145" width="594" height="2" fill="url(#go44)"/><rect x="960" y="147" width="593" height="2" fill="url(#go45)"/><rect x="961" y="149" width="592" height="2" fill="url(#go46)"/><rect x="961" y="151" width="592" height="2" fill="url(#go47)"/><rect x="962" y="153" width="591" height="2" fill="url(#go48)"/><rect x="962" y="155" width="590" height="2" fill="url(#go49)"/><rect x="963" y="157" width="587" height="2" fill="url(#go50)"/><rect x="964" y="159" width="584" height="2" fill="url(#go51)"/><rect x="964" y="161" width="582" height="2" fill="url(#go52)"/><rect x="965" y="163" width="579" height="2" fill="url(#go53)"/><rect x="966" y="165" width="576" height="2" fill="url(#go54)"/><rect x="966" y="167" width="574" height="2" fill="url(#go55)"/><rect x="967" y="169" width="571" height="2" fill="url(#go56)"/><rect x="968" y="171" width="568" height="2" fill="url(#go57)"/><rect x="968" y="173" width="566" height="2" fill="url(#go58)"/><rect x="969" y="175" width="563" height="2" fill="url(#go59)"/><rect x="970" y="177" width="560" height="2" fill="url(#go60)"/><rect x="970" y="179" width="559" height="2" fill="url(#go61)"/><rect x="971" y="181" width="556" height="2" fill="url(#go62)"/><rect x="972" y="183" width="553" height="2" fill="url(#go63)"/><rect x="973" y="185" width="550" height="2" fill="url(#go64)"/><rect x="973" y="187" width="548" height="2" fill="url(#go65)"/><rect x="974" y="189" width="545" height="2" fill="url(#go66)"/><rect x="975" y="191" width="542" height="2" fill="url(#go67)"/><rect x="976" y="193" width="539" height="2" fill="url(#go68)"/><rect x="976" y="195" width="537" height="2" fill="url(#go69)"/><rect x="977" y="197" width="534" height="2" fill="url(#go70)"/><rect x="978" y="199" width="531" height="2" fill="url(#go71)"/><rect x="979" y="201" width="528" height="2" fill="url(#go72)"/><rect x="980" y="203" width="525" height="2" fill="url(#go73)"/><rect x="980" y="205" width="523" height="2" fill="url(#go74)"/><rect x="981" y="207" width="520" height="2" fill="url(#go75)"/><rect x="982" y="209" width="517" height="2" fill="url(#go76)"/><rect x="983" y="211" width="514" height="2" fill="url(#go77)"/><rect x="984" y="213" width="511" height="2" fill="url(#go78)"/><rect x="985" y="215" width="508" height="2" fill="url(#go79)"/><rect x="985" y="217" width="506" height="2" fill="url(#go80)"/><rect x="986" y="219" width="504" height="2" fill="url(#go81)"/><rect x="987" y="221" width="501" height="2" fill="url(#go82)"/><rect x="988" y="223" width="498" height="2" fill="url(#go83)"/><rect x="989" y="225" width="495" height="2" fill="url(#go84)"/><rect x="990" y="227" width="492" height="2" fill="url(#go85)"/><rect x="991" y="229" width="489" height="2" fill="url(#go86)"/><rect x="992" y="231" width="486" height="2" fill="url(#go87)"/><rect x="993" y="233" width="483" height="2" fill="url(#go88)"/><rect x="993" y="235" width="481" height="2" fill="url(#go89)"/><rect x="994" y="237" width="478" height="2" fill="url(#go90)"/><rect x="995" y="239" width="475" height="2" fill="url(#go91)"/><rect x="996" y="241" width="472" height="2" fill="url(#go92)"/><rect x="997" y="243" width="469" height="2" fill="url(#go93)"/><rect x="998" y="245" width="466" height="2" fill="url(#go94)"/><rect x="999" y="247" width="463" height="2" fill="url(#go95)"/><rect x="1000" y="249" width="460" height="2" fill="url(#go96)"/><rect x="1001" y="251" width="457" height="2" fill="url(#go97)"/><rect x="1002" y="253" width="454" height="2" fill="url(#go98)"/><rect x="1003" y="255" width="451" height="2" fill="url(#go99)"/><rect x="1004" y="257" width="448" height="2" fill="url(#go100)"/><rect x="1005" y="259" width="445" height="2" fill="url(#go101)"/><rect x="1006" y="261" width="443" height="2" fill="url(#go102)"/><rect x="1007" y="263" width="440" height="2" fill="url(#go103)"/><rect x="1008" y="265" width="437" height="2" fill="url(#go104)"/><rect x="1009" y="267" width="434" height="2" fill="url(#go105)"/><rect x="1010" y="269" width="431" height="2" fill="url(#go106)"/><rect x="1011" y="271" width="428" height="2" fill="url(#go107)"/><rect x="1013" y="273" width="424" height="2" fill="url(#go108)"/><rect x="1014" y="275" width="421" height="2" fill="url(#go109)"/><rect x="1015" y="277" width="418" height="2" fill="url(#go110)"/><rect x="1016" y="279" width="415" height="2" fill="url(#go111)"/><rect x="1017" y="281" width="412" height="2" fill="url(#go112)"/><rect x="1018" y="283" width="409" height="2" fill="url(#go113)"/><rect x="1019" y="285" width="406" height="2" fill="url(#go114)"/><rect x="1020" y="287" width="403" height="2" fill="url(#go115)"/><rect x="1021" y="289" width="400" height="2" fill="url(#go116)"/><rect x="1023" y="291" width="396" height="2" fill="url(#go117)"/><rect x="1024" y="293" width="393" height="2" fill="url(#go118)"/><rect x="1025" y="295" width="390" height="2" fill="url(#go119)"/><rect x="1026" y="297" width="387" height="2" fill="url(#go120)"/><rect x="1027" y="299" width="384" height="2" fill="url(#go121)"/><rect x="1028" y="301" width="382" height="2" fill="url(#go122)"/><rect x="1029" y="303" width="379" height="2" fill="url(#go123)"/><rect x="1031" y="305" width="375" height="2" fill="url(#go124)"/><rect x="1032" y="307" width="372" height="2" fill="url(#go125)"/><rect x="1033" y="309" width="369" height="2" fill="url(#go126)"/><rect x="1034" y="311" width="366" height="2" fill="url(#go127)"/><rect x="1035" y="313" width="363" height="2" fill="url(#go128)"/><rect x="1037" y="315" width="359" height="2" fill="url(#go129)"/><rect x="1038" y="317" width="356" height="2" fill="url(#go130)"/><rect x="1039" y="319" width="353" height="2" fill="url(#go131)"/><rect x="1040" y="321" width="350" height="2" fill="url(#go132)"/><rect x="1041" y="323" width="347" height="2" fill="url(#go133)"/><rect x="1043" y="325" width="343" height="2" fill="url(#go134)"/><rect x="1044" y="327" width="340" height="2" fill="url(#go135)"/><rect x="1045" y="329" width="337" height="2" fill="url(#go136)"/><rect x="1046" y="331" width="334" height="2" fill="url(#go137)"/><rect x="1047" y="333" width="331" height="2" fill="url(#go138)"/><rect x="1049" y="335" width="327" height="2" fill="url(#go139)"/><rect x="1050" y="337" width="324" height="2" fill="url(#go140)"/><rect x="1051" y="339" width="321" height="2" fill="url(#go141)"/><rect x="1052" y="341" width="319" height="2" fill="url(#go142)"/><rect x="1054" y="343" width="315" height="2" fill="url(#go143)"/><rect x="1055" y="345" width="312" height="2" fill="url(#go144)"/><rect x="1056" y="347" width="309" height="2" fill="url(#go145)"/><rect x="1057" y="349" width="306" height="2" fill="url(#go146)"/><rect x="1059" y="351" width="302" height="2" fill="url(#go147)"/><rect x="1060" y="353" width="299" height="2" fill="url(#go148)"/><rect x="1061" y="355" width="296" height="2" fill="url(#go149)"/><rect x="1063" y="357" width="292" height="2" fill="url(#go150)"/><rect x="1064" y="359" width="289" height="2" fill="url(#go151)"/><rect x="1065" y="361" width="286" height="2" fill="url(#go152)"/><rect x="1067" y="363" width="282" height="2" fill="url(#go153)"/><rect x="1068" y="365" width="279" height="2" fill="url(#go154)"/><rect x="1069" y="367" width="276" height="2" fill="url(#go155)"/><rect x="1071" y="369" width="272" height="2" fill="url(#go156)"/><rect x="1072" y="371" width="269" height="2" fill="url(#go157)"/><rect x="1073" y="373" width="266" height="2" fill="url(#go158)"/><rect x="1075" y="375" width="262" height="2" fill="url(#go159)"/><rect x="1076" y="377" width="259" height="2" fill="url(#go160)"/><rect x="1078" y="379" width="255" height="2" fill="url(#go161)"/><rect x="1079" y="381" width="252" height="2" fill="url(#go162)"/><rect x="1080" y="383" width="250" height="2" fill="url(#go163)"/><rect x="1082" y="385" width="246" height="2" fill="url(#go164)"/><rect x="1083" y="387" width="243" height="2" fill="url(#go165)"/><rect x="1085" y="389" width="239" height="2" fill="url(#go166)"/><rect x="1086" y="391" width="236" height="2" fill="url(#go167)"/><rect x="1088" y="393" width="232" height="2" fill="url(#go168)"/><rect x="1089" y="395" width="229" height="2" fill="url(#go169)"/><rect x="1091" y="397" width="225" height="2" fill="url(#go170)"/><rect x="1092" y="399" width="222" height="2" fill="url(#go171)"/><rect x="1094" y="401" width="218" height="2" fill="url(#go172)"/><rect x="1095" y="403" width="215" height="2" fill="url(#go173)"/><rect x="1097" y="405" width="211" height="2" fill="url(#go174)"/><rect x="1098" y="407" width="208" height="2" fill="url(#go175)"/><rect x="1100" y="409" width="204" height="2" fill="url(#go176)"/><rect x="1102" y="411" width="200" height="2" fill="url(#go177)"/><rect x="1103" y="413" width="197" height="2" fill="url(#go178)"/><rect x="1105" y="415" width="193" height="2" fill="url(#go179)"/><rect x="1106" y="417" width="190" height="2" fill="url(#go180)"/><rect x="1108" y="419" width="186" height="2" fill="url(#go181)"/><rect x="1110" y="421" width="182" height="2" fill="url(#go182)"/><rect x="1111" y="423" width="180" height="2" fill="url(#go183)"/><rect x="1113" y="425" width="176" height="2" fill="url(#go184)"/><rect x="1115" y="427" width="172" height="2" fill="url(#go185)"/><rect x="1117" y="429" width="168" height="2" fill="url(#go186)"/><rect x="1118" y="431" width="165" height="2" fill="url(#go187)"/><rect x="1120" y="433" width="161" height="2" fill="url(#go188)"/><rect x="1122" y="435" width="157" height="2" fill="url(#go189)"/><rect x="1124" y="437" width="153" height="2" fill="url(#go190)"/><rect x="1126" y="439" width="149" height="2" fill="url(#go191)"/><rect x="1128" y="441" width="145" height="2" fill="url(#go192)"/><rect x="1130" y="443" width="141" height="2" fill="url(#go193)"/><rect x="1132" y="445" width="137" height="2" fill="url(#go194)"/><rect x="1134" y="447" width="133" height="2" fill="url(#go195)"/><rect x="1136" y="449" width="129" height="2" fill="url(#go196)"/><rect x="1138" y="451" width="125" height="2" fill="url(#go197)"/><rect x="1140" y="453" width="121" height="2" fill="url(#go198)"/><rect x="1142" y="455" width="117" height="2" fill="url(#go199)"/><rect x="1144" y="457" width="113" height="2" fill="url(#go200)"/><rect x="1147" y="459" width="108" height="2" fill="url(#go201)"/><rect x="1149" y="461" width="104" height="2" fill="url(#go202)"/><rect x="1151" y="463" width="100" height="2" fill="url(#go203)"/><rect x="1154" y="465" width="96" height="2" fill="url(#go204)"/><rect x="1156" y="467" width="92" height="2" fill="url(#go205)"/><rect x="1158" y="469" width="88" height="2" fill="url(#go206)"/><rect x="1161" y="471" width="83" height="2" fill="url(#go207)"/><rect x="1163" y="473" width="79" height="2" fill="url(#go208)"/><rect x="1166" y="475" width="74" height="2" fill="url(#go209)"/><rect x="1168" y="477" width="70" height="2" fill="url(#go210)"/><rect x="1171" y="479" width="65" height="2" fill="url(#go211)"/><rect x="1173" y="481" width="61" height="2" fill="url(#go212)"/><rect x="1176" y="483" width="56" height="2" fill="url(#go213)"/><rect x="1178" y="485" width="52" height="2" fill="url(#go214)"/><rect x="1180" y="487" width="48" height="2" fill="url(#go215)"/><rect x="1183" y="489" width="43" height="2" fill="url(#go216)"/><rect x="1185" y="491" width="39" height="2" fill="url(#go217)"/><rect x="1188" y="493" width="34" height="2" fill="url(#go218)"/><rect x="1190" y="495" width="30" height="2" fill="url(#go219)"/><rect x="1193" y="497" width="25" height="2" fill="url(#go220)"/><rect x="1195" y="499" width="21" height="2" fill="url(#go221)"/><rect x="1198" y="501" width="16" height="2" fill="url(#go222)"/><rect x="1201" y="503" width="11" height="2" fill="url(#go223)"/><rect x="1204" y="505" width="6" height="2" fill="#2000c4"/></g><g clip-path="url(#tri)"><rect x="1077" y="85" width="17" height="2" fill="url(#gi14)"/><rect x="1078" y="87" width="39" height="2" fill="url(#gi15)"/><rect x="1078" y="89" width="61" height="2" fill="url(#gi16)"/><rect x="1078" y="91" width="83" height="2" fill="url(#gi17)"/><rect x="1079" y="93" width="104" height="2" fill="url(#gi18)"/><rect x="1079" y="95" width="127" height="2" fill="url(#gi19)"/><rect x="1079" y="97" width="149" height="2" fill="url(#gi20)"/><rect x="1080" y="99" width="170" height="2" fill="url(#gi21)"/><rect x="1080" y="101" width="192" height="2" fill="url(#gi22)"/><rect x="1080" y="103" width="215" height="2" fill="url(#gi23)"/><rect x="1080" y="105" width="237" height="2" fill="url(#gi24)"/><rect x="1081" y="107" width="258" height="2" fill="url(#gi25)"/><rect x="1081" y="109" width="280" height="2" fill="url(#gi26)"/><rect x="1081" y="111" width="303" height="2" fill="url(#gi27)"/><rect x="1082" y="113" width="324" height="2" fill="url(#gi28)"/><rect x="1082" y="115" width="324" height="2" fill="url(#gi29)"/><rect x="1082" y="117" width="322" height="2" fill="url(#gi30)"/><rect x="1083" y="119" width="319" height="2" fill="url(#gi31)"/><rect x="1083" y="121" width="317" height="2" fill="url(#gi32)"/><rect x="1083" y="123" width="315" height="2" fill="url(#gi33)"/><rect x="1084" y="125" width="312" height="2" fill="url(#gi34)"/><rect x="1084" y="127" width="310" height="2" fill="url(#gi35)"/><rect x="1084" y="129" width="308" height="2" fill="url(#gi36)"/><rect x="1085" y="131" width="305" height="2" fill="url(#gi37)"/><rect x="1085" y="133" width="303" height="2" fill="url(#gi38)"/><rect x="1085" y="135" width="301" height="2" fill="url(#gi39)"/><rect x="1085" y="137" width="299" height="2" fill="url(#gi40)"/><rect x="1086" y="139" width="296" height="2" fill="url(#gi41)"/><rect x="1086" y="141" width="294" height="2" fill="url(#gi42)"/><rect x="1086" y="143" width="292" height="2" fill="url(#gi43)"/><rect x="1087" y="145" width="289" height="2" fill="url(#gi44)"/><rect x="1087" y="147" width="287" height="2" fill="url(#gi45)"/><rect x="1087" y="149" width="285" height="2" fill="url(#gi46)"/><rect x="1088" y="151" width="282" height="2" fill="url(#gi47)"/><rect x="1088" y="153" width="280" height="2" fill="url(#gi48)"/><rect x="1088" y="155" width="278" height="2" fill="url(#gi49)"/><rect x="1089" y="157" width="275" height="2" fill="url(#gi50)"/><rect x="1089" y="159" width="273" height="2" fill="url(#gi51)"/><rect x="1089" y="161" width="272" height="2" fill="url(#gi52)"/><rect x="1090" y="163" width="269" height="2" fill="url(#gi53)"/><rect x="1090" y="165" width="267" height="2" fill="url(#gi54)"/><rect x="1090" y="167" width="265" height="2" fill="url(#gi55)"/><rect x="1090" y="169" width="263" height="2" fill="url(#gi56)"/><rect x="1091" y="171" width="260" height="2" fill="url(#gi57)"/><rect x="1091" y="173" width="258" height="2" fill="url(#gi58)"/><rect x="1091" y="175" width="256" height="2" fill="url(#gi59)"/><rect x="1092" y="177" width="253" height="2" fill="url(#gi60)"/><rect x="1092" y="179" width="251" height="2" fill="url(#gi61)"/><rect x="1092" y="181" width="249" height="2" fill="url(#gi62)"/><rect x="1093" y="183" width="246" height="2" fill="url(#gi63)"/><rect x="1093" y="185" width="244" height="2" fill="url(#gi64)"/><rect x="1093" y="187" width="242" height="2" fill="url(#gi65)"/><rect x="1094" y="189" width="239" height="2" fill="url(#gi66)"/><rect x="1094" y="191" width="237" height="2" fill="url(#gi67)"/><rect x="1094" y="193" width="235" height="2" fill="url(#gi68)"/><rect x="1095" y="195" width="232" height="2" fill="url(#gi69)"/><rect x="1095" y="197" width="230" height="2" fill="url(#gi70)"/><rect x="1095" y="199" width="228" height="2" fill="url(#gi71)"/><rect x="1096" y="201" width="225" height="2" fill="url(#gi72)"/><rect x="1096" y="203" width="223" height="2" fill="url(#gi73)"/><rect x="1096" y="205" width="221" height="2" fill="url(#gi74)"/><rect x="1096" y="207" width="219" height="2" fill="url(#gi75)"/><rect x="1097" y="209" width="216" height="2" fill="url(#gi76)"/><rect x="1097" y="211" width="214" height="2" fill="url(#gi77)"/><rect x="1097" y="213" width="213" height="2" fill="url(#gi78)"/><rect x="1098" y="215" width="210" height="2" fill="url(#gi79)"/><rect x="1098" y="217" width="208" height="2" fill="url(#gi80)"/><rect x="1098" y="219" width="206" height="2" fill="url(#gi81)"/><rect x="1099" y="221" width="203" height="2" fill="url(#gi82)"/><rect x="1099" y="223" width="201" height="2" fill="url(#gi83)"/><rect x="1099" y="225" width="199" height="2" fill="url(#gi84)"/><rect x="1100" y="227" width="196" height="2" fill="url(#gi85)"/><rect x="1100" y="229" width="194" height="2" fill="url(#gi86)"/><rect x="1100" y="231" width="192" height="2" fill="url(#gi87)"/><rect x="1101" y="233" width="189" height="2" fill="url(#gi88)"/><rect x="1101" y="235" width="187" height="2" fill="url(#gi89)"/><rect x="1101" y="237" width="185" height="2" fill="url(#gi90)"/><rect x="1101" y="239" width="183" height="2" fill="url(#gi91)"/><rect x="1102" y="241" width="180" height="2" fill="url(#gi92)"/><rect x="1102" y="243" width="178" height="2" fill="url(#gi93)"/><rect x="1102" y="245" width="176" height="2" fill="url(#gi94)"/><rect x="1103" y="247" width="173" height="2" fill="url(#gi95)"/><rect x="1103" y="249" width="171" height="2" fill="url(#gi96)"/><rect x="1103" y="251" width="169" height="2" fill="url(#gi97)"/><rect x="1104" y="253" width="166" height="2" fill="url(#gi98)"/><rect x="1104" y="255" width="164" height="2" fill="url(#gi99)"/><rect x="1104" y="257" width="162" height="2" fill="url(#gi100)"/><rect x="1105" y="259" width="159" height="2" fill="url(#gi101)"/><rect x="1105" y="261" width="157" height="2" fill="url(#gi102)"/><rect x="1105" y="263" width="155" height="2" fill="url(#gi103)"/><rect x="1106" y="265" width="153" height="2" fill="url(#gi104)"/><rect x="1106" y="267" width="151" height="2" fill="url(#gi105)"/><rect x="1106" y="269" width="149" height="2" fill="url(#gi106)"/><rect x="1106" y="271" width="147" height="2" fill="url(#gi107)"/><rect x="1107" y="273" width="144" height="2" fill="url(#gi108)"/><rect x="1107" y="275" width="142" height="2" fill="url(#gi109)"/><rect x="1107" y="277" width="140" height="2" fill="url(#gi110)"/><rect x="1108" y="279" width="137" height="2" fill="url(#gi111)"/><rect x="1108" y="281" width="135" height="2" fill="url(#gi112)"/><rect x="1108" y="283" width="133" height="2" fill="url(#gi113)"/><rect x="1109" y="285" width="130" height="2" fill="url(#gi114)"/><rect x="1109" y="287" width="128" height="2" fill="url(#gi115)"/><rect x="1109" y="289" width="126" height="2" fill="url(#gi116)"/><rect x="1110" y="291" width="123" height="2" fill="url(#gi117)"/><rect x="1110" y="293" width="121" height="2" fill="url(#gi118)"/><rect x="1110" y="295" width="119" height="2" fill="url(#gi119)"/><rect x="1111" y="297" width="116" height="2" fill="url(#gi120)"/><rect x="1111" y="299" width="114" height="2" fill="url(#gi121)"/><rect x="1111" y="301" width="112" height="2" fill="url(#gi122)"/><rect x="1111" y="303" width="110" height="2" fill="url(#gi123)"/><rect x="1112" y="305" width="107" height="2" fill="url(#gi124)"/><rect x="1112" y="307" width="105" height="2" fill="url(#gi125)"/><rect x="1112" y="309" width="103" height="2" fill="url(#gi126)"/><rect x="1113" y="311" width="100" height="2" fill="url(#gi127)"/><rect x="1113" y="313" width="98" height="2" fill="url(#gi128)"/><rect x="1113" y="315" width="96" height="2" fill="url(#gi129)"/><rect x="1114" y="317" width="93" height="2" fill="url(#gi130)"/><rect x="1114" y="319" width="92" height="2" fill="url(#gi131)"/><rect x="1114" y="321" width="90" height="2" fill="url(#gi132)"/><rect x="1115" y="323" width="87" height="2" fill="url(#gi133)"/><rect x="1115" y="325" width="85" height="2" fill="url(#gi134)"/><rect x="1115" y="327" width="83" height="2" fill="url(#gi135)"/><rect x="1116" y="329" width="80" height="2" fill="url(#gi136)"/><rect x="1116" y="331" width="78" height="2" fill="url(#gi137)"/><rect x="1116" y="333" width="76" height="2" fill="url(#gi138)"/><rect x="1116" y="335" width="74" height="2" fill="url(#gi139)"/><rect x="1117" y="337" width="71" height="2" fill="url(#gi140)"/><rect x="1117" y="339" width="69" height="2" fill="url(#gi141)"/><rect x="1117" y="341" width="67" height="2" fill="url(#gi142)"/><rect x="1118" y="343" width="64" height="2" fill="url(#gi143)"/><rect x="1118" y="345" width="62" height="2" fill="url(#gi144)"/><rect x="1118" y="347" width="60" height="2" fill="url(#gi145)"/><rect x="1119" y="349" width="57" height="2" fill="url(#gi146)"/><rect x="1119" y="351" width="55" height="2" fill="url(#gi147)"/><rect x="1119" y="353" width="53" height="2" fill="url(#gi148)"/><rect x="1120" y="355" width="50" height="2" fill="url(#gi149)"/><rect x="1120" y="357" width="48" height="2" fill="url(#gi150)"/><rect x="1120" y="359" width="46" height="2" fill="url(#gi151)"/><rect x="1121" y="361" width="43" height="2" fill="url(#gi152)"/><rect x="1121" y="363" width="41" height="2" fill="url(#gi153)"/><rect x="1121" y="365" width="39" height="2" fill="url(#gi154)"/><rect x="1121" y="367" width="37" height="2" fill="url(#gi155)"/><rect x="1122" y="369" width="34" height="2" fill="url(#gi156)"/><rect x="1122" y="371" width="33" height="2" fill="url(#gi157)"/><rect x="1122" y="373" width="31" height="2" fill="url(#gi158)"/><rect x="1123" y="375" width="28" height="2" fill="url(#gi159)"/><rect x="1123" y="377" width="26" height="2" fill="url(#gi160)"/><rect x="1123" y="379" width="24" height="2" fill="url(#gi161)"/><rect x="1124" y="381" width="21" height="2" fill="url(#gi162)"/><rect x="1124" y="383" width="19" height="2" fill="url(#gi163)"/><rect x="1124" y="385" width="17" height="2" fill="url(#gi164)"/><rect x="1125" y="387" width="14" height="2" fill="url(#gi165)"/><rect x="1125" y="389" width="12" height="2" fill="url(#gi166)"/><rect x="1125" y="391" width="10" height="2" fill="url(#gi167)"/><rect x="1126" y="393" width="7" height="2" fill="url(#gi168)"/><rect x="1126" y="395" width="5" height="2" fill="url(#gi169)"/></g>
<line x1="947.8" y1="519.1" x2="953.8" y2="519.1" stroke="#c8c8c8" stroke-width="1.3"/>
<text x="946.5" y="524.2" font-size="12.50" fill="#d2d2d2" text-anchor="end" textLength="7.5" lengthAdjust="spacingAndGlyphs" stroke="#d2d2d2" stroke-width="0.30">0</text>
<line x1="953.3" y1="518.6" x2="953.3" y2="523.8" stroke="#c8c8c8" stroke-width="1.3"/>
<text x="953.3" y="539.3" font-size="12.50" fill="#d2d2d2" text-anchor="middle" textLength="7.5" lengthAdjust="spacingAndGlyphs" stroke="#d2d2d2" stroke-width="0.30">0</text>
<line x1="947.8" y1="480.7" x2="953.8" y2="480.7" stroke="#c8c8c8" stroke-width="1.3"/>
<text x="946.5" y="485.8" font-size="12.50" fill="#d2d2d2" text-anchor="end" textLength="26.3" lengthAdjust="spacingAndGlyphs" stroke="#d2d2d2" stroke-width="0.30">0,05</text>
<line x1="1003.2" y1="518.6" x2="1003.2" y2="523.8" stroke="#c8c8c8" stroke-width="1.3"/>
<text x="1003.2" y="539.3" font-size="12.50" fill="#d2d2d2" text-anchor="middle" textLength="26.3" lengthAdjust="spacingAndGlyphs" stroke="#d2d2d2" stroke-width="0.30">0,05</text>
<line x1="947.8" y1="442.2" x2="953.8" y2="442.2" stroke="#c8c8c8" stroke-width="1.3"/>
<text x="946.5" y="447.3" font-size="12.50" fill="#d2d2d2" text-anchor="end" textLength="18.8" lengthAdjust="spacingAndGlyphs" stroke="#d2d2d2" stroke-width="0.30">0,1</text>
<line x1="1053.2" y1="518.6" x2="1053.2" y2="523.8" stroke="#c8c8c8" stroke-width="1.3"/>
<text x="1053.2" y="539.3" font-size="12.50" fill="#d2d2d2" text-anchor="middle" textLength="18.8" lengthAdjust="spacingAndGlyphs" stroke="#d2d2d2" stroke-width="0.30">0,1</text>
<line x1="947.8" y1="403.8" x2="953.8" y2="403.8" stroke="#c8c8c8" stroke-width="1.3"/>
<text x="946.5" y="408.9" font-size="12.50" fill="#d2d2d2" text-anchor="end" textLength="26.3" lengthAdjust="spacingAndGlyphs" stroke="#d2d2d2" stroke-width="0.30">0,15</text>
<line x1="1103.2" y1="518.6" x2="1103.2" y2="523.8" stroke="#c8c8c8" stroke-width="1.3"/>
<text x="1103.2" y="539.3" font-size="12.50" fill="#d2d2d2" text-anchor="middle" textLength="26.3" lengthAdjust="spacingAndGlyphs" stroke="#d2d2d2" stroke-width="0.30">0,15</text>
<line x1="947.8" y1="365.3" x2="953.8" y2="365.3" stroke="#c8c8c8" stroke-width="1.3"/>
<text x="946.5" y="370.4" font-size="12.50" fill="#d2d2d2" text-anchor="end" textLength="18.8" lengthAdjust="spacingAndGlyphs" stroke="#d2d2d2" stroke-width="0.30">0,2</text>
<line x1="1153.1" y1="518.6" x2="1153.1" y2="523.8" stroke="#c8c8c8" stroke-width="1.3"/>
<text x="1153.1" y="539.3" font-size="12.50" fill="#d2d2d2" text-anchor="middle" textLength="18.8" lengthAdjust="spacingAndGlyphs" stroke="#d2d2d2" stroke-width="0.30">0,2</text>
<line x1="947.8" y1="326.9" x2="953.8" y2="326.9" stroke="#c8c8c8" stroke-width="1.3"/>
<text x="946.5" y="332.0" font-size="12.50" fill="#d2d2d2" text-anchor="end" textLength="26.3" lengthAdjust="spacingAndGlyphs" stroke="#d2d2d2" stroke-width="0.30">0,25</text>
<line x1="1203.0" y1="518.6" x2="1203.0" y2="523.8" stroke="#c8c8c8" stroke-width="1.3"/>
<text x="1203.0" y="539.3" font-size="12.50" fill="#d2d2d2" text-anchor="middle" textLength="26.3" lengthAdjust="spacingAndGlyphs" stroke="#d2d2d2" stroke-width="0.30">0,25</text>
<line x1="947.8" y1="288.4" x2="953.8" y2="288.4" stroke="#c8c8c8" stroke-width="1.3"/>
<text x="946.5" y="293.5" font-size="12.50" fill="#d2d2d2" text-anchor="end" textLength="18.8" lengthAdjust="spacingAndGlyphs" stroke="#d2d2d2" stroke-width="0.30">0,3</text>
<line x1="1253.0" y1="518.6" x2="1253.0" y2="523.8" stroke="#c8c8c8" stroke-width="1.3"/>
<text x="1253.0" y="539.3" font-size="12.50" fill="#d2d2d2" text-anchor="middle" textLength="18.8" lengthAdjust="spacingAndGlyphs" stroke="#d2d2d2" stroke-width="0.30">0,3</text>
<line x1="947.8" y1="249.9" x2="953.8" y2="249.9" stroke="#c8c8c8" stroke-width="1.3"/>
<text x="946.5" y="255.0" font-size="12.50" fill="#d2d2d2" text-anchor="end" textLength="26.3" lengthAdjust="spacingAndGlyphs" stroke="#d2d2d2" stroke-width="0.30">0,35</text>
<line x1="1303.0" y1="518.6" x2="1303.0" y2="523.8" stroke="#c8c8c8" stroke-width="1.3"/>
<text x="1303.0" y="539.3" font-size="12.50" fill="#d2d2d2" text-anchor="middle" textLength="26.3" lengthAdjust="spacingAndGlyphs" stroke="#d2d2d2" stroke-width="0.30">0,35</text>
<line x1="947.8" y1="211.5" x2="953.8" y2="211.5" stroke="#c8c8c8" stroke-width="1.3"/>
<text x="946.5" y="216.6" font-size="12.50" fill="#d2d2d2" text-anchor="end" textLength="18.8" lengthAdjust="spacingAndGlyphs" stroke="#d2d2d2" stroke-width="0.30">0,4</text>
<line x1="1352.9" y1="518.6" x2="1352.9" y2="523.8" stroke="#c8c8c8" stroke-width="1.3"/>
<text x="1352.9" y="539.3" font-size="12.50" fill="#d2d2d2" text-anchor="middle" textLength="18.8" lengthAdjust="spacingAndGlyphs" stroke="#d2d2d2" stroke-width="0.30">0,4</text>
<line x1="947.8" y1="173.1" x2="953.8" y2="173.1" stroke="#c8c8c8" stroke-width="1.3"/>
<text x="946.5" y="178.2" font-size="12.50" fill="#d2d2d2" text-anchor="end" textLength="26.3" lengthAdjust="spacingAndGlyphs" stroke="#d2d2d2" stroke-width="0.30">0,45</text>
<line x1="1402.8" y1="518.6" x2="1402.8" y2="523.8" stroke="#c8c8c8" stroke-width="1.3"/>
<text x="1402.8" y="539.3" font-size="12.50" fill="#d2d2d2" text-anchor="middle" textLength="26.3" lengthAdjust="spacingAndGlyphs" stroke="#d2d2d2" stroke-width="0.30">0,45</text>
<line x1="947.8" y1="134.6" x2="953.8" y2="134.6" stroke="#c8c8c8" stroke-width="1.3"/>
<text x="946.5" y="139.7" font-size="12.50" fill="#d2d2d2" text-anchor="end" textLength="18.8" lengthAdjust="spacingAndGlyphs" stroke="#d2d2d2" stroke-width="0.30">0,5</text>
<line x1="1452.8" y1="518.6" x2="1452.8" y2="523.8" stroke="#c8c8c8" stroke-width="1.3"/>
<text x="1452.8" y="539.3" font-size="12.50" fill="#d2d2d2" text-anchor="middle" textLength="18.8" lengthAdjust="spacingAndGlyphs" stroke="#d2d2d2" stroke-width="0.30">0,5</text>
<line x1="947.8" y1="96.1" x2="953.8" y2="96.1" stroke="#c8c8c8" stroke-width="1.3"/>
<text x="946.5" y="101.2" font-size="12.50" fill="#d2d2d2" text-anchor="end" textLength="26.3" lengthAdjust="spacingAndGlyphs" stroke="#d2d2d2" stroke-width="0.30">0,55</text>
<line x1="1502.8" y1="518.6" x2="1502.8" y2="523.8" stroke="#c8c8c8" stroke-width="1.3"/>
<text x="1502.8" y="539.3" font-size="12.50" fill="#d2d2d2" text-anchor="middle" textLength="26.3" lengthAdjust="spacingAndGlyphs" stroke="#d2d2d2" stroke-width="0.30">0,55</text>
<rect x="953.8" y="57.0" width="599.6" height="461.6" fill="none" stroke="#9a9a9a" stroke-width="1.2"/>
<rect x="1071.3" y="78.7" width="12.6" height="12.6" fill="none" stroke="#ffffff" stroke-width="1.6"/>
<rect x="1094.1" y="101.5" width="12.6" height="12.6" fill="none" stroke="#ffffff" stroke-width="1.6"/>
<rect x="1130.7" y="93.5" width="12.6" height="12.6" fill="none" stroke="#ffffff" stroke-width="1.6"/>
<rect x="1128.4" y="113.8" width="12.6" height="12.6" fill="none" stroke="#ffffff" stroke-width="1.6"/>
<rect x="1150.7" y="85.8" width="12.6" height="12.6" fill="none" stroke="#ffffff" stroke-width="1.6"/>
<rect x="1175.5" y="89.5" width="12.6" height="12.6" fill="none" stroke="#ffffff" stroke-width="1.6"/>
<rect x="1205.7" y="95.8" width="12.6" height="12.6" fill="none" stroke="#ffffff" stroke-width="1.6"/>
<rect x="1100.1" y="143.8" width="12.6" height="12.6" fill="none" stroke="#ffffff" stroke-width="1.6"/>
<rect x="1085.6" y="161.5" width="12.6" height="12.6" fill="none" stroke="#ffffff" stroke-width="1.6"/>
<rect x="1122.7" y="187.7" width="12.6" height="12.6" fill="none" stroke="#ffffff" stroke-width="1.6"/>
<rect x="1141.2" y="192.9" width="12.6" height="12.6" fill="none" stroke="#ffffff" stroke-width="1.6"/>
<rect x="1090.7" y="190.6" width="12.6" height="12.6" fill="none" stroke="#ffffff" stroke-width="1.6"/>
<rect x="1233.7" y="182.3" width="12.6" height="12.6" fill="none" stroke="#ffffff" stroke-width="1.6"/>
<rect x="1174.4" y="209.4" width="12.6" height="12.6" fill="none" stroke="#ffffff" stroke-width="1.6"/>
<rect x="1124.4" y="237.7" width="12.6" height="12.6" fill="none" stroke="#ffffff" stroke-width="1.6"/>
<rect x="1124.4" y="284.2" width="12.6" height="12.6" fill="none" stroke="#ffffff" stroke-width="1.6"/>
<rect x="1252.0" y="256.5" width="12.6" height="12.6" fill="none" stroke="#ffffff" stroke-width="1.6"/>
<rect x="1396.6" y="108.5" width="12.6" height="12.6" fill="none" stroke="#ffffff" stroke-width="1.6"/>
<rect x="1321.5" y="127.4" width="12.6" height="12.6" fill="none" stroke="#ffffff" stroke-width="1.6"/>
<rect x="1263.7" y="138.7" width="12.6" height="12.6" fill="none" stroke="#ffffff" stroke-width="1.6"/>
<rect x="1122.3" y="389.5" width="12.6" height="12.6" fill="none" stroke="#ffffff" stroke-width="1.6"/>
<rect x="1245.7" y="98.2" width="12.6" height="12.6" fill="none" stroke="#ffffff" stroke-width="1.6"/>
<rect x="1245.7" y="102.7" width="12.6" height="12.6" fill="none" stroke="#ffffff" stroke-width="1.6"/>
<rect x="1212.5" y="108.3" width="12.6" height="12.6" fill="none" stroke="#ffffff" stroke-width="1.6"/>
<rect x="1221.9" y="107.5" width="12.6" height="12.6" fill="none" stroke="#ffffff" stroke-width="1.6"/>
<rect x="1228.9" y="112.5" width="12.6" height="12.6" fill="none" stroke="#ffffff" stroke-width="1.6"/>
<rect x="1198.5" y="115.7" width="12.6" height="12.6" fill="none" stroke="#ffffff" stroke-width="1.6"/>
<rect x="1220.3" y="119.5" width="12.6" height="12.6" fill="none" stroke="#ffffff" stroke-width="1.6"/>
<rect x="1221.9" y="120.9" width="12.6" height="12.6" fill="none" stroke="#ffffff" stroke-width="1.6"/>
<rect x="1207.7" y="121.6" width="12.6" height="12.6" fill="none" stroke="#ffffff" stroke-width="1.6"/>
<rect x="1180.5" y="122.7" width="12.6" height="12.6" fill="none" stroke="#ffffff" stroke-width="1.6"/>
<rect x="1189.8" y="126.7" width="12.6" height="12.6" fill="none" stroke="#ffffff" stroke-width="1.6"/>
<rect x="1179.7" y="133.3" width="12.6" height="12.6" fill="none" stroke="#ffffff" stroke-width="1.6"/>
<rect x="1192.9" y="121.4" width="12.6" height="12.6" fill="none" stroke="#ffffff" stroke-width="1.6"/>
<rect x="1144.7" y="150.7" width="11.8" height="11.8" fill="none" stroke="#000000" stroke-width="2.0"/>
<circle cx="1072.2" cy="82.7" r="3.95" fill="#40ff40" stroke="#141414" stroke-width="1.35"/>
<circle cx="1094.4" cy="103.5" r="3.95" fill="#4e7a50" stroke="#141414" stroke-width="1.35"/>
<circle cx="1131.3" cy="96.4" r="3.95" fill="#a0a85a" stroke="#141414" stroke-width="1.35"/>
<circle cx="1129.3" cy="117.2" r="3.95" fill="#58684a" stroke="#141414" stroke-width="1.35"/>
<circle cx="1150.7" cy="89.3" r="3.95" fill="#ffef20" stroke="#141414" stroke-width="1.35"/>
<circle cx="1178.4" cy="93.3" r="3.95" fill="#e0b840" stroke="#141414" stroke-width="1.35"/>
<circle cx="1209.0" cy="98.2" r="3.95" fill="#dca850" stroke="#141414" stroke-width="1.35"/>
<circle cx="1101.3" cy="149.2" r="3.95" fill="#78b0a2" stroke="#141414" stroke-width="1.35"/>
<circle cx="1087.3" cy="170.3" r="3.95" fill="#40e8f8" stroke="#141414" stroke-width="1.35"/>
<circle cx="1146.4" cy="157.8" r="3.95" fill="#9a9a9a" stroke="#141414" stroke-width="1.35"/>
<circle cx="1147.8" cy="155.8" r="3.95" fill="#aaaaaa" stroke="#141414" stroke-width="1.35"/>
<circle cx="1141.3" cy="187.7" r="3.95" fill="#000000" stroke="#141414" stroke-width="1.35"/>
<circle cx="1123.3" cy="196.3" r="3.95" fill="#5878a0" stroke="#141414" stroke-width="1.35"/>
<circle cx="1143.3" cy="202.0" r="3.95" fill="#8a88aa" stroke="#141414" stroke-width="1.35"/>
<circle cx="1091.3" cy="199.2" r="3.95" fill="#207a98" stroke="#141414" stroke-width="1.35"/>
<circle cx="1239.5" cy="191.2" r="3.95" fill="#bb6090" stroke="#141414" stroke-width="1.35"/>
<circle cx="1179.2" cy="221.1" r="3.95" fill="#5c3c68" stroke="#141414" stroke-width="1.35"/>
<circle cx="1126.0" cy="251.1" r="3.95" fill="#4a5aa0" stroke="#141414" stroke-width="1.35"/>
<circle cx="1252.7" cy="272.9" r="3.95" fill="#ff40f0" stroke="#141414" stroke-width="1.35"/>
<circle cx="1404.2" cy="113.5" r="3.95" fill="#ff1010" stroke="#141414" stroke-width="1.35"/>
<circle cx="1334.1" cy="131.2" r="3.95" fill="#b04848" stroke="#141414" stroke-width="1.35"/>
<circle cx="1271.2" cy="144.6" r="3.95" fill="#b86070" stroke="#141414" stroke-width="1.35"/>
<circle cx="1127.3" cy="304.3" r="3.95" fill="#3a4a90" stroke="#141414" stroke-width="1.35"/>
<circle cx="1250.9" cy="102.8" r="3.95" fill="#c88850" stroke="#141414" stroke-width="1.35"/>
<circle cx="1252.3" cy="106.6" r="3.95" fill="#a86a40" stroke="#141414" stroke-width="1.35"/>
<circle cx="1182.6" cy="138.5" r="3.95" fill="#9a7058" stroke="#141414" stroke-width="1.35"/>
<circle cx="1183.5" cy="128.9" r="3.95" fill="#f4c8a8" stroke="#141414" stroke-width="1.35"/>
<circle cx="1182.6" cy="136.4" r="3.95" fill="#f0c4aa" stroke="#141414" stroke-width="1.35"/>
<circle cx="1195.1" cy="131.8" r="3.95" fill="#7a5444" stroke="#141414" stroke-width="1.35"/>
<circle cx="1195.4" cy="127.4" r="3.95" fill="#c49474" stroke="#141414" stroke-width="1.35"/>
<circle cx="1202.4" cy="119.2" r="3.95" fill="#c89474" stroke="#141414" stroke-width="1.35"/>
<circle cx="1201.5" cy="125.1" r="3.95" fill="#cc9474" stroke="#141414" stroke-width="1.35"/>
<circle cx="1210.6" cy="126.2" r="3.95" fill="#d49474" stroke="#141414" stroke-width="1.35"/>
<circle cx="1217.5" cy="112.0" r="3.95" fill="#8a5a3a" stroke="#141414" stroke-width="1.35"/>
<circle cx="1228.6" cy="111.4" r="3.95" fill="#6e4a32" stroke="#141414" stroke-width="1.35"/>
<circle cx="1235.6" cy="115.4" r="3.95" fill="#6a4232" stroke="#141414" stroke-width="1.35"/>
<circle cx="1216.4" cy="119.5" r="3.95" fill="#d89470" stroke="#141414" stroke-width="1.35"/>
<circle cx="1223.7" cy="118.9" r="3.95" fill="#c88c6c" stroke="#141414" stroke-width="1.35"/>
<circle cx="1225.7" cy="124.5" r="3.95" fill="#f4a484" stroke="#141414" stroke-width="1.35"/>
<circle cx="1126" cy="407.1" r="3.3" fill="#1a1aff" stroke="#111" stroke-width="0.8"/>
<rect x="1356.00" y="351.50" width="196.00" height="131.00" fill="#262626" />
<rect x="1360.8" y="355.8" width="187" height="122.8" fill="url(#inset)" stroke="#8c8c8c" stroke-width="1.6"/>
<svg x="1361.8" y="356.8" width="185" height="120.8" viewBox="1361.8 356.8 185 120.8" overflow="hidden">
<rect x="1386.1" y="392.4" width="12.6" height="12.6" fill="none" stroke="#fff0e8" stroke-width="1.5"/>
<rect x="1484.3" y="373.5" width="12.6" height="12.6" fill="none" stroke="#fff0e8" stroke-width="1.5"/>
<rect x="1530.4" y="374.4" width="12.6" height="12.6" fill="none" stroke="#fff0e8" stroke-width="1.5"/>
<rect x="1447.4" y="410.0" width="12.6" height="12.6" fill="none" stroke="#fff0e8" stroke-width="1.5"/>
<rect x="1530.0" y="409.2" width="12.6" height="12.6" fill="none" stroke="#fff0e8" stroke-width="1.5"/>
<rect x="1363.5" y="422.6" width="12.6" height="12.6" fill="none" stroke="#fff0e8" stroke-width="1.5"/>
<rect x="1370.6" y="429.7" width="12.6" height="12.6" fill="none" stroke="#fff0e8" stroke-width="1.5"/>
<rect x="1465.0" y="422.6" width="12.6" height="12.6" fill="none" stroke="#fff0e8" stroke-width="1.5"/>
<rect x="1379.0" y="441.5" width="12.6" height="12.6" fill="none" stroke="#fff0e8" stroke-width="1.5"/>
<rect x="1451.6" y="445.7" width="12.6" height="12.6" fill="none" stroke="#fff0e8" stroke-width="1.5"/>
<circle cx="1506.0" cy="359.7" r="3.90" fill="#8a6448" stroke="#141414" stroke-width="1.35"/>
<circle cx="1392.0" cy="381.1" r="3.90" fill="#b88a68" stroke="#141414" stroke-width="1.35"/>
<circle cx="1457.4" cy="401.2" r="3.90" fill="#c08868" stroke="#141414" stroke-width="1.35"/>
<circle cx="1474.6" cy="414.2" r="3.90" fill="#c08060" stroke="#141414" stroke-width="1.35"/>
<circle cx="1368.5" cy="416.7" r="3.90" fill="#f0b890" stroke="#141414" stroke-width="1.35"/>
<circle cx="1378.2" cy="423.0" r="3.90" fill="#b08060" stroke="#141414" stroke-width="1.35"/>
<circle cx="1386.5" cy="434.4" r="3.90" fill="#b07858" stroke="#141414" stroke-width="1.35"/>
<circle cx="1457.9" cy="440.7" r="3.90" fill="#f0a484" stroke="#141414" stroke-width="1.35"/>
</svg>
<rect x="1314.00" y="488.00" width="236.00" height="25.00" fill="#2a2a2a" />
<text x="1315.0" y="508.2" font-size="19.33" fill="#eeeeee" textLength="207.6" lengthAdjust="spacingAndGlyphs">RGB Triplet: 217, 140, 94</text>
<text x="46.2" y="580.8" font-size="24.71" fill="#eeeeee" textLength="217.4" lengthAdjust="spacingAndGlyphs">Avg dE2000: 2,29</text>
<text x="42.0" y="619.4" font-size="25.29" fill="#eeeeee" textLength="226.0" lengthAdjust="spacingAndGlyphs">Max dE2000: 5,42</text>
<text x="12.6" y="664.7" font-size="26.31" fill="#eeeeee" textLength="204.4" lengthAdjust="spacingAndGlyphs">Current Reading</text>
<text x="12.6" y="697.0" font-size="21.22" fill="#eeeeee" textLength="95.2" lengthAdjust="spacingAndGlyphs">x: 0,4483</text>
<text x="159.5" y="697.0" font-size="21.22" fill="#eeeeee" textLength="95.2" lengthAdjust="spacingAndGlyphs">y: 0,3901</text>
<text x="12.6" y="735.3" font-size="21.22" fill="#eeeeee" textLength="89.4" lengthAdjust="spacingAndGlyphs">fL: 55,06</text>
<text x="12.6" y="767.0" font-size="21.22" fill="#eeeeee" textLength="148.4" lengthAdjust="spacingAndGlyphs">cd/m²: 188,63</text>
<svg x="299" y="563.5" width="1260" height="215" viewBox="299 563.5 1260 215" overflow="hidden">
<rect x="299.00" y="563.50" width="1260.00" height="215.00" fill="#2b2b2b" />
<rect x="300.50" y="565.00" width="1260.00" height="24.00" fill="url(#thdr)" />
<text x="492.5" y="582.3" font-size="14.40" fill="#f0f0f0" text-anchor="middle" textLength="40.9" lengthAdjust="spacingAndGlyphs">White</text>
<text x="575.0" y="582.3" font-size="14.40" fill="#f0f0f0" text-anchor="middle" textLength="56.9" lengthAdjust="spacingAndGlyphs">Gray 80</text>
<text x="657.5" y="582.3" font-size="14.40" fill="#f0f0f0" text-anchor="middle" textLength="56.9" lengthAdjust="spacingAndGlyphs">Gray 65</text>
<text x="740.0" y="582.3" font-size="14.40" fill="#f0f0f0" text-anchor="middle" textLength="56.9" lengthAdjust="spacingAndGlyphs">Gray 50</text>
<text x="822.5" y="582.3" font-size="14.40" fill="#f0f0f0" text-anchor="middle" textLength="56.9" lengthAdjust="spacingAndGlyphs">Gray 35</text>
<text x="900.7" y="582.3" font-size="14.40" fill="#f0f0f0" text-anchor="middle" textLength="39.1" lengthAdjust="spacingAndGlyphs">Black</text>
<text x="975.8" y="582.3" font-size="14.40" fill="#f0f0f0" text-anchor="middle" textLength="69.3" lengthAdjust="spacingAndGlyphs">Dark Skin</text>
<text x="1056.0" y="582.3" font-size="14.40" fill="#f0f0f0" text-anchor="middle" textLength="70.2" lengthAdjust="spacingAndGlyphs">Light Skin</text>
<text x="1139.7" y="582.3" font-size="14.40" fill="#f0f0f0" text-anchor="middle" textLength="63.1" lengthAdjust="spacingAndGlyphs">Blue Sky</text>
<text x="1217.0" y="582.3" font-size="14.40" fill="#f0f0f0" text-anchor="middle" textLength="52.4" lengthAdjust="spacingAndGlyphs">Foliage</text>
<text x="1302.0" y="582.3" font-size="14.40" fill="#f0f0f0" text-anchor="middle" textLength="84.4" lengthAdjust="spacingAndGlyphs">Blue Flower</text>
<text x="1402.8" y="582.3" font-size="14.40" fill="#f0f0f0" text-anchor="middle" textLength="92.4" lengthAdjust="spacingAndGlyphs">Bluish Green</text>
<text x="1496.0" y="582.3" font-size="14.40" fill="#f0f0f0" text-anchor="middle" textLength="53.3" lengthAdjust="spacingAndGlyphs">Orange</text>
<text x="1542.0" y="582.3" font-size="14.40" fill="#f0f0f0" textLength="94.2" lengthAdjust="spacingAndGlyphs">Purplish Blue</text>
<rect x="300.50" y="589.00" width="1260.00" height="21.85" fill="#424242" />
<text x="314.6" y="605.0" font-size="14.40" fill="#f4f4f4" font-weight="bold" textLength="67.4" lengthAdjust="spacingAndGlyphs">x: CIE31</text>
<text x="456.3" y="605.0" font-size="14.40" fill="#eeeeee" textLength="52.9" lengthAdjust="spacingAndGlyphs">0,3031</text>
<text x="538.6" y="605.0" font-size="14.40" fill="#eeeeee" textLength="52.9" lengthAdjust="spacingAndGlyphs">0,3053</text>
<text x="620.9" y="605.0" font-size="14.40" fill="#eeeeee" textLength="52.9" lengthAdjust="spacingAndGlyphs">0,3060</text>
<text x="703.6" y="605.0" font-size="14.40" fill="#eeeeee" textLength="52.9" lengthAdjust="spacingAndGlyphs">0,3064</text>
<text x="786.7" y="605.0" font-size="14.40" fill="#eeeeee" textLength="52.9" lengthAdjust="spacingAndGlyphs">0,3069</text>
<text x="869.3" y="605.0" font-size="14.40" fill="#eeeeee" textLength="52.9" lengthAdjust="spacingAndGlyphs">0,2693</text>
<text x="942.0" y="605.0" font-size="14.40" fill="#eeeeee" textLength="52.9" lengthAdjust="spacingAndGlyphs">0,4013</text>
<text x="1020.6" y="605.0" font-size="14.40" fill="#eeeeee" textLength="52.9" lengthAdjust="spacingAndGlyphs">0,3768</text>
<text x="1103.0" y="605.0" font-size="14.40" fill="#eeeeee" textLength="52.9" lengthAdjust="spacingAndGlyphs">0,2417</text>
<text x="1185.3" y="605.0" font-size="14.40" fill="#eeeeee" textLength="52.9" lengthAdjust="spacingAndGlyphs">0,3354</text>
<text x="1258.5" y="605.0" font-size="14.40" fill="#eeeeee" textLength="52.9" lengthAdjust="spacingAndGlyphs">0,2607</text>
<text x="1356.0" y="605.0" font-size="14.40" fill="#eeeeee" textLength="52.9" lengthAdjust="spacingAndGlyphs">0,2554</text>
<text x="1459.8" y="605.0" font-size="14.40" fill="#eeeeee" textLength="52.9" lengthAdjust="spacingAndGlyphs">0,5171</text>
<text x="1541.5" y="605.0" font-size="14.40" fill="#eeeeee" textLength="52.9" lengthAdjust="spacingAndGlyphs">0,2524</text>
<rect x="300.50" y="610.75" width="1260.00" height="21.85" fill="#7f7f7f" />
<text x="314.6" y="626.8" font-size="14.40" fill="#f4f4f4" font-weight="bold" textLength="67.4" lengthAdjust="spacingAndGlyphs">y: CIE31</text>
<text x="456.3" y="626.8" font-size="14.40" fill="#eeeeee" textLength="52.9" lengthAdjust="spacingAndGlyphs">0,3259</text>
<text x="538.6" y="626.8" font-size="14.40" fill="#eeeeee" textLength="52.9" lengthAdjust="spacingAndGlyphs">0,3282</text>
<text x="620.9" y="626.8" font-size="14.40" fill="#eeeeee" textLength="52.9" lengthAdjust="spacingAndGlyphs">0,3290</text>
<text x="703.6" y="626.8" font-size="14.40" fill="#eeeeee" textLength="52.9" lengthAdjust="spacingAndGlyphs">0,3296</text>
<text x="786.7" y="626.8" font-size="14.40" fill="#eeeeee" textLength="52.9" lengthAdjust="spacingAndGlyphs">0,3303</text>
<text x="869.3" y="626.8" font-size="14.40" fill="#eeeeee" textLength="52.9" lengthAdjust="spacingAndGlyphs">0,2721</text>
<text x="942.0" y="626.8" font-size="14.40" fill="#eeeeee" textLength="52.9" lengthAdjust="spacingAndGlyphs">0,3700</text>
<text x="1020.6" y="626.8" font-size="14.40" fill="#eeeeee" textLength="52.9" lengthAdjust="spacingAndGlyphs">0,3601</text>
<text x="1103.0" y="626.8" font-size="14.40" fill="#eeeeee" textLength="52.9" lengthAdjust="spacingAndGlyphs">0,2621</text>
<text x="1185.3" y="626.8" font-size="14.40" fill="#eeeeee" textLength="52.9" lengthAdjust="spacingAndGlyphs">0,4391</text>
<text x="1258.5" y="626.8" font-size="14.40" fill="#eeeeee" textLength="52.9" lengthAdjust="spacingAndGlyphs">0,2481</text>
<text x="1356.0" y="626.8" font-size="14.40" fill="#eeeeee" textLength="52.9" lengthAdjust="spacingAndGlyphs">0,3648</text>
<text x="1459.8" y="626.8" font-size="14.40" fill="#eeeeee" textLength="52.9" lengthAdjust="spacingAndGlyphs">0,4143</text>
<text x="1541.5" y="626.8" font-size="14.40" fill="#eeeeee" textLength="52.9" lengthAdjust="spacingAndGlyphs">0,1901</text>
<rect x="300.50" y="632.50" width="1260.00" height="21.85" fill="#424242" />
<text x="314.6" y="648.5" font-size="14.40" fill="#f4f4f4" font-weight="bold" textLength="11.5" lengthAdjust="spacingAndGlyphs">Y</text>
<text x="456.3" y="648.5" font-size="14.40" fill="#eeeeee" textLength="72.1" lengthAdjust="spacingAndGlyphs">573,3208</text>
<text x="538.6" y="648.5" font-size="14.40" fill="#eeeeee" textLength="72.1" lengthAdjust="spacingAndGlyphs">446,9450</text>
<text x="620.9" y="648.5" font-size="14.40" fill="#eeeeee" textLength="72.1" lengthAdjust="spacingAndGlyphs">356,3529</text>
<text x="703.6" y="648.5" font-size="14.40" fill="#eeeeee" textLength="72.1" lengthAdjust="spacingAndGlyphs">271,7272</text>
<text x="786.7" y="648.5" font-size="14.40" fill="#eeeeee" textLength="72.1" lengthAdjust="spacingAndGlyphs">186,5365</text>
<text x="869.3" y="648.5" font-size="14.40" fill="#eeeeee" textLength="52.9" lengthAdjust="spacingAndGlyphs">0,6317</text>
<text x="942.0" y="648.5" font-size="14.40" fill="#eeeeee" textLength="62.5" lengthAdjust="spacingAndGlyphs">51,9438</text>
<text x="1020.6" y="648.5" font-size="14.40" fill="#eeeeee" textLength="72.1" lengthAdjust="spacingAndGlyphs">190,9181</text>
<text x="1103.0" y="648.5" font-size="14.40" fill="#eeeeee" textLength="62.5" lengthAdjust="spacingAndGlyphs">99,4425</text>
<text x="1185.3" y="648.5" font-size="14.40" fill="#eeeeee" textLength="62.5" lengthAdjust="spacingAndGlyphs">68,4701</text>
<text x="1258.5" y="648.5" font-size="14.40" fill="#eeeeee" textLength="72.1" lengthAdjust="spacingAndGlyphs">125,0369</text>
<text x="1356.0" y="648.5" font-size="14.40" fill="#eeeeee" textLength="72.1" lengthAdjust="spacingAndGlyphs">231,1461</text>
<text x="1459.8" y="648.5" font-size="14.40" fill="#eeeeee" textLength="72.1" lengthAdjust="spacingAndGlyphs">154,9691</text>
<text x="1541.5" y="648.5" font-size="14.40" fill="#eeeeee" textLength="62.5" lengthAdjust="spacingAndGlyphs">60,1234</text>
<rect x="300.50" y="654.25" width="1260.00" height="21.85" fill="#7f7f7f" />
<text x="314.6" y="670.2" font-size="14.40" fill="#f4f4f4" font-weight="bold" textLength="120.9" lengthAdjust="spacingAndGlyphs">Target x:CIE31</text>
<text x="456.3" y="670.2" font-size="14.40" fill="#eeeeee" textLength="52.9" lengthAdjust="spacingAndGlyphs">0,3127</text>
<text x="538.6" y="670.2" font-size="14.40" fill="#eeeeee" textLength="52.9" lengthAdjust="spacingAndGlyphs">0,3127</text>
<text x="620.9" y="670.2" font-size="14.40" fill="#eeeeee" textLength="52.9" lengthAdjust="spacingAndGlyphs">0,3127</text>
<text x="703.6" y="670.2" font-size="14.40" fill="#eeeeee" textLength="52.9" lengthAdjust="spacingAndGlyphs">0,3127</text>
<text x="786.7" y="670.2" font-size="14.40" fill="#eeeeee" textLength="52.9" lengthAdjust="spacingAndGlyphs">0,3127</text>
<text x="869.3" y="670.2" font-size="14.40" fill="#eeeeee" textLength="52.9" lengthAdjust="spacingAndGlyphs">0,3127</text>
<text x="942.0" y="670.2" font-size="14.40" fill="#eeeeee" textLength="52.9" lengthAdjust="spacingAndGlyphs">0,4003</text>
<text x="1020.6" y="670.2" font-size="14.40" fill="#eeeeee" textLength="52.9" lengthAdjust="spacingAndGlyphs">0,3795</text>
<text x="1103.0" y="670.2" font-size="14.40" fill="#eeeeee" textLength="52.9" lengthAdjust="spacingAndGlyphs">0,2496</text>
<text x="1185.3" y="670.2" font-size="14.40" fill="#eeeeee" textLength="52.9" lengthAdjust="spacingAndGlyphs">0,3395</text>
<text x="1258.5" y="670.2" font-size="14.40" fill="#eeeeee" textLength="52.9" lengthAdjust="spacingAndGlyphs">0,2681</text>
<text x="1356.0" y="670.2" font-size="14.40" fill="#eeeeee" textLength="52.9" lengthAdjust="spacingAndGlyphs">0,2626</text>
<text x="1459.8" y="670.2" font-size="14.40" fill="#eeeeee" textLength="52.9" lengthAdjust="spacingAndGlyphs">0,5122</text>
<text x="1541.5" y="670.2" font-size="14.40" fill="#eeeeee" textLength="52.9" lengthAdjust="spacingAndGlyphs">0,2174</text>
<rect x="300.50" y="676.00" width="1260.00" height="21.85" fill="#424242" />
<text x="314.6" y="692.0" font-size="14.40" fill="#f4f4f4" font-weight="bold" textLength="120.9" lengthAdjust="spacingAndGlyphs">Target y:CIE31</text>
<text x="456.3" y="692.0" font-size="14.40" fill="#eeeeee" textLength="52.9" lengthAdjust="spacingAndGlyphs">0,3290</text>
<text x="538.6" y="692.0" font-size="14.40" fill="#eeeeee" textLength="52.9" lengthAdjust="spacingAndGlyphs">0,3290</text>
<text x="620.9" y="692.0" font-size="14.40" fill="#eeeeee" textLength="52.9" lengthAdjust="spacingAndGlyphs">0,3290</text>
<text x="703.6" y="692.0" font-size="14.40" fill="#eeeeee" textLength="52.9" lengthAdjust="spacingAndGlyphs">0,3290</text>
<text x="786.7" y="692.0" font-size="14.40" fill="#eeeeee" textLength="52.9" lengthAdjust="spacingAndGlyphs">0,3290</text>
<text x="869.3" y="692.0" font-size="14.40" fill="#eeeeee" textLength="52.9" lengthAdjust="spacingAndGlyphs">0,3290</text>
<text x="942.0" y="692.0" font-size="14.40" fill="#eeeeee" textLength="52.9" lengthAdjust="spacingAndGlyphs">0,3642</text>
<text x="1020.6" y="692.0" font-size="14.40" fill="#eeeeee" textLength="52.9" lengthAdjust="spacingAndGlyphs">0,3562</text>
<text x="1103.0" y="692.0" font-size="14.40" fill="#eeeeee" textLength="52.9" lengthAdjust="spacingAndGlyphs">0,2656</text>
<text x="1185.3" y="692.0" font-size="14.40" fill="#eeeeee" textLength="52.9" lengthAdjust="spacingAndGlyphs">0,4271</text>
<text x="1258.5" y="692.0" font-size="14.40" fill="#eeeeee" textLength="52.9" lengthAdjust="spacingAndGlyphs">0,2525</text>
<text x="1356.0" y="692.0" font-size="14.40" fill="#eeeeee" textLength="52.9" lengthAdjust="spacingAndGlyphs">0,3616</text>
<text x="1459.8" y="692.0" font-size="14.40" fill="#eeeeee" textLength="52.9" lengthAdjust="spacingAndGlyphs">0,4063</text>
<text x="1541.5" y="692.0" font-size="14.40" fill="#eeeeee" textLength="52.9" lengthAdjust="spacingAndGlyphs">0,1745</text>
<rect x="300.50" y="697.75" width="1260.00" height="21.85" fill="#7f7f7f" />
<text x="314.6" y="713.8" font-size="14.40" fill="#f4f4f4" font-weight="bold" textLength="70.9" lengthAdjust="spacingAndGlyphs">Target Y</text>
<text x="456.3" y="713.8" font-size="14.40" fill="#eeeeee" textLength="72.1" lengthAdjust="spacingAndGlyphs">573,3208</text>
<text x="538.6" y="713.8" font-size="14.40" fill="#eeeeee" textLength="72.1" lengthAdjust="spacingAndGlyphs">453,6676</text>
<text x="620.9" y="713.8" font-size="14.40" fill="#eeeeee" textLength="72.1" lengthAdjust="spacingAndGlyphs">365,5476</text>
<text x="703.6" y="713.8" font-size="14.40" fill="#eeeeee" textLength="72.1" lengthAdjust="spacingAndGlyphs">281,5125</text>
<text x="786.7" y="713.8" font-size="14.40" fill="#eeeeee" textLength="72.1" lengthAdjust="spacingAndGlyphs">196,0267</text>
<text x="869.3" y="713.8" font-size="14.40" fill="#eeeeee" textLength="52.9" lengthAdjust="spacingAndGlyphs">0,0000</text>
<text x="942.0" y="713.8" font-size="14.40" fill="#eeeeee" textLength="62.5" lengthAdjust="spacingAndGlyphs">57,7523</text>
<text x="1020.6" y="713.8" font-size="14.40" fill="#eeeeee" textLength="72.1" lengthAdjust="spacingAndGlyphs">200,0612</text>
<text x="1103.0" y="713.8" font-size="14.40" fill="#eeeeee" textLength="72.1" lengthAdjust="spacingAndGlyphs">107,2018</text>
<text x="1185.3" y="713.8" font-size="14.40" fill="#eeeeee" textLength="62.5" lengthAdjust="spacingAndGlyphs">74,7178</text>
<text x="1258.5" y="713.8" font-size="14.40" fill="#eeeeee" textLength="72.1" lengthAdjust="spacingAndGlyphs">133,6897</text>
<text x="1356.0" y="713.8" font-size="14.40" fill="#eeeeee" textLength="72.1" lengthAdjust="spacingAndGlyphs">240,0667</text>
<text x="1459.8" y="713.8" font-size="14.40" fill="#eeeeee" textLength="72.1" lengthAdjust="spacingAndGlyphs">162,5240</text>
<text x="1541.5" y="713.8" font-size="14.40" fill="#eeeeee" textLength="62.5" lengthAdjust="spacingAndGlyphs">67,0144</text>
<rect x="300.50" y="719.50" width="1260.00" height="21.85" fill="#424242" />
<text x="314.6" y="735.5" font-size="14.40" fill="#f4f4f4" font-weight="bold" textLength="69.2" lengthAdjust="spacingAndGlyphs">ΔE 2000</text>
<text x="456.3" y="735.5" font-size="14.40" fill="#eeeeee" textLength="52.9" lengthAdjust="spacingAndGlyphs">5,4174</text>
<text x="538.6" y="735.5" font-size="14.40" fill="#eeeeee" textLength="52.9" lengthAdjust="spacingAndGlyphs">4,6456</text>
<text x="620.9" y="735.5" font-size="14.40" fill="#eeeeee" textLength="52.9" lengthAdjust="spacingAndGlyphs">4,3219</text>
<text x="703.6" y="735.5" font-size="14.40" fill="#eeeeee" textLength="52.9" lengthAdjust="spacingAndGlyphs">4,0459</text>
<text x="786.7" y="735.5" font-size="14.40" fill="#eeeeee" textLength="52.9" lengthAdjust="spacingAndGlyphs">3,7619</text>
<text x="869.3" y="735.5" font-size="14.40" fill="#eeeeee" textLength="52.9" lengthAdjust="spacingAndGlyphs">1,1145</text>
<text x="942.0" y="735.5" font-size="14.40" fill="#eeeeee" textLength="52.9" lengthAdjust="spacingAndGlyphs">2,2340</text>
<text x="1020.6" y="735.5" font-size="14.40" fill="#eeeeee" textLength="52.9" lengthAdjust="spacingAndGlyphs">2,4089</text>
<text x="1103.0" y="735.5" font-size="14.40" fill="#eeeeee" textLength="52.9" lengthAdjust="spacingAndGlyphs">2,5045</text>
<text x="1185.3" y="735.5" font-size="14.40" fill="#eeeeee" textLength="52.9" lengthAdjust="spacingAndGlyphs">2,1962</text>
<text x="1258.5" y="735.5" font-size="14.40" fill="#eeeeee" textLength="52.9" lengthAdjust="spacingAndGlyphs">2,3777</text>
<text x="1356.0" y="735.5" font-size="14.40" fill="#eeeeee" textLength="52.9" lengthAdjust="spacingAndGlyphs">1,7051</text>
<text x="1459.8" y="735.5" font-size="14.40" fill="#eeeeee" textLength="52.9" lengthAdjust="spacingAndGlyphs">2,3533</text>
<text x="1541.5" y="735.5" font-size="14.40" fill="#eeeeee" textLength="52.9" lengthAdjust="spacingAndGlyphs">2,0123</text>
<rect x="300.50" y="741.25" width="1260.00" height="21.85" fill="#7f7f7f" />
<text x="314.6" y="757.2" font-size="14.40" fill="#f4f4f4" font-weight="bold" textLength="55.8" lengthAdjust="spacingAndGlyphs">ΔE ITP</text>
<text x="456.3" y="757.2" font-size="14.40" fill="#eeeeee" textLength="52.9" lengthAdjust="spacingAndGlyphs">6,1559</text>
<text x="538.6" y="757.2" font-size="14.40" fill="#eeeeee" textLength="52.9" lengthAdjust="spacingAndGlyphs">5,1627</text>
<text x="620.9" y="757.2" font-size="14.40" fill="#eeeeee" textLength="52.9" lengthAdjust="spacingAndGlyphs">5,1330</text>
<text x="703.6" y="757.2" font-size="14.40" fill="#eeeeee" textLength="52.9" lengthAdjust="spacingAndGlyphs">5,2911</text>
<text x="786.7" y="757.2" font-size="14.40" fill="#eeeeee" textLength="52.9" lengthAdjust="spacingAndGlyphs">5,7615</text>
<text x="869.3" y="757.2" font-size="14.40" fill="#eeeeee" textLength="62.5" lengthAdjust="spacingAndGlyphs">93,3534</text>
<text x="942.0" y="757.2" font-size="14.40" fill="#eeeeee" textLength="52.9" lengthAdjust="spacingAndGlyphs">7,9227</text>
<text x="1020.6" y="757.2" font-size="14.40" fill="#eeeeee" textLength="52.9" lengthAdjust="spacingAndGlyphs">4,9329</text>
<text x="1103.0" y="757.2" font-size="14.40" fill="#eeeeee" textLength="52.9" lengthAdjust="spacingAndGlyphs">7,7976</text>
<text x="1185.3" y="757.2" font-size="14.40" fill="#eeeeee" textLength="52.9" lengthAdjust="spacingAndGlyphs">8,2971</text>
<text x="1258.5" y="757.2" font-size="14.40" fill="#eeeeee" textLength="52.9" lengthAdjust="spacingAndGlyphs">7,0867</text>
<text x="1356.0" y="757.2" font-size="14.40" fill="#eeeeee" textLength="52.9" lengthAdjust="spacingAndGlyphs">5,9179</text>
<text x="1459.8" y="757.2" font-size="14.40" fill="#eeeeee" textLength="52.9" lengthAdjust="spacingAndGlyphs">7,8942</text>
<text x="1541.5" y="757.2" font-size="14.40" fill="#eeeeee" textLength="62.5" lengthAdjust="spacingAndGlyphs">10,1234</text>
<rect x="300.50" y="763.00" width="1260.00" height="14.00" fill="#5e5e5e" />
<rect x="320" y="765" width="366" height="10.5" rx="5.2" fill="#3c3c3c"/>
<rect x="302" y="764.5" width="14.5" height="11.5" rx="2" fill="#7d7d7d"/>
<polygon points="312,766.8 312,773.8 306.5,770.3" fill="#3a3a3a"/>
<rect x="1545" y="764.5" width="14.5" height="11.5" rx="2" fill="#7d7d7d"/>
<polygon points="1549,766.8 1549,773.8 1554.5,770.3" fill="#3a3a3a"/>
</svg>
<line x1="299.8" y1="564" x2="299.8" y2="777.5" stroke="#111" stroke-width="1.6"/>
<line x1="299" y1="564.3" x2="1559" y2="564.3" stroke="#111" stroke-width="1.2"/>
<rect x="0.00" y="800.00" width="1241.00" height="49.50" fill="#2a2a2a" />
<rect x="0.00" y="849.50" width="1241.00" height="9.00" fill="#5a5a5a" />
<polygon points="9,851 9,858 3,854.5" fill="#3a3a3a"/>
<rect x="1226" y="850.5" width="13" height="8" rx="2" fill="#7a7a7a"/>
<path d="M-5.6,849.5 V805 Q-5.6,801 -1.6,801 H39.4 Q43.4,801 43.4,805 V849.5 Z" fill="url(#tab)"/>
<rect x="-1.4" y="805.8" width="40.4" height="24.4" rx="3.5" fill="#0a87a5" stroke="rgba(0,0,0,0.25)" stroke-width="0.8"/>
<text x="18.8" y="845.3" font-size="11.19" fill="#262626" text-anchor="middle" textLength="24.1" lengthAdjust="spacingAndGlyphs" stroke="#262626" stroke-width="0.35">Cyan</text>
<path d="M46.4,849.5 V805 Q46.4,801 50.4,801 H91.4 Q95.4,801 95.4,805 V849.5 Z" fill="url(#tab)"/>
<rect x="50.6" y="805.8" width="40.4" height="24.4" rx="3.5" fill="#ff0000" stroke="rgba(0,0,0,0.25)" stroke-width="0.8"/>
<text x="70.8" y="845.3" font-size="11.19" fill="#262626" text-anchor="middle" textLength="47.5" lengthAdjust="spacingAndGlyphs" stroke="#262626" stroke-width="0.35">100% Red</text>
<path d="M98.4,849.5 V805 Q98.4,801 102.4,801 H143.4 Q147.4,801 147.4,805 V849.5 Z" fill="url(#tab)"/>
<rect x="102.6" y="805.8" width="40.4" height="12.2" rx="3.5" fill="#00ff00" stroke="rgba(0,0,0,0.25)" stroke-width="0.8"/>
<text x="122.8" y="833.0" font-size="11.19" fill="#262626" text-anchor="middle" textLength="26.4" lengthAdjust="spacingAndGlyphs" stroke="#262626" stroke-width="0.35">100%</text>
<text x="122.8" y="845.3" font-size="11.19" fill="#262626" text-anchor="middle" textLength="28.6" lengthAdjust="spacingAndGlyphs" stroke="#262626" stroke-width="0.35">Green</text>
<path d="M150.4,849.5 V805 Q150.4,801 154.4,801 H195.4 Q199.4,801 199.4,805 V849.5 Z" fill="url(#tab)"/>
<rect x="154.6" y="805.8" width="40.4" height="12.2" rx="3.5" fill="#0000ff" stroke="rgba(0,0,0,0.25)" stroke-width="0.8"/>
<text x="174.8" y="833.0" font-size="11.19" fill="#262626" text-anchor="middle" textLength="26.4" lengthAdjust="spacingAndGlyphs" stroke="#262626" stroke-width="0.35">100%</text>
<text x="174.8" y="845.3" font-size="11.19" fill="#262626" text-anchor="middle" textLength="20.6" lengthAdjust="spacingAndGlyphs" stroke="#262626" stroke-width="0.35">Blue</text>
<path d="M202.4,849.5 V805 Q202.4,801 206.4,801 H247.4 Q251.4,801 251.4,805 V849.5 Z" fill="url(#tab)"/>
<rect x="206.6" y="805.8" width="40.4" height="12.2" rx="3.5" fill="#00ffff" stroke="rgba(0,0,0,0.25)" stroke-width="0.8"/>
<text x="226.8" y="833.0" font-size="11.19" fill="#262626" text-anchor="middle" textLength="26.4" lengthAdjust="spacingAndGlyphs" stroke="#262626" stroke-width="0.35">100%</text>
<text x="226.8" y="845.3" font-size="11.19" fill="#262626" text-anchor="middle" textLength="24.1" lengthAdjust="spacingAndGlyphs" stroke="#262626" stroke-width="0.35">Cyan</text>
<path d="M254.4,849.5 V805 Q254.4,801 258.4,801 H299.4 Q303.4,801 303.4,805 V849.5 Z" fill="url(#tab)"/>
<rect x="258.6" y="805.8" width="40.4" height="12.2" rx="3.5" fill="#ff00ff" stroke="rgba(0,0,0,0.25)" stroke-width="0.8"/>
<text x="278.8" y="833.0" font-size="11.19" fill="#262626" text-anchor="middle" textLength="26.4" lengthAdjust="spacingAndGlyphs" stroke="#262626" stroke-width="0.35">100%</text>
<text x="278.8" y="845.3" font-size="11.19" fill="#262626" text-anchor="middle" textLength="40.1" lengthAdjust="spacingAndGlyphs" stroke="#262626" stroke-width="0.35">Magenta</text>
<path d="M306.4,849.5 V805 Q306.4,801 310.4,801 H351.4 Q355.4,801 355.4,805 V849.5 Z" fill="url(#tab)"/>
<rect x="310.6" y="805.8" width="40.4" height="12.2" rx="3.5" fill="#ffff00" stroke="rgba(0,0,0,0.25)" stroke-width="0.8"/>
<text x="330.8" y="833.0" font-size="11.19" fill="#262626" text-anchor="middle" textLength="26.4" lengthAdjust="spacingAndGlyphs" stroke="#262626" stroke-width="0.35">100%</text>
<text x="330.8" y="845.3" font-size="11.19" fill="#262626" text-anchor="middle" textLength="30.4" lengthAdjust="spacingAndGlyphs" stroke="#262626" stroke-width="0.35">Yellow</text>
<path d="M358.4,849.5 V805 Q358.4,801 362.4,801 H403.4 Q407.4,801 407.4,805 V849.5 Z" fill="url(#tab)"/>
<rect x="362.6" y="805.8" width="40.4" height="24.4" rx="3.5" fill="#7a4428" stroke="rgba(0,0,0,0.25)" stroke-width="0.8"/>
<text x="382.8" y="845.3" font-size="11.19" fill="#262626" text-anchor="middle" textLength="12.6" lengthAdjust="spacingAndGlyphs" stroke="#262626" stroke-width="0.35">2E</text>
<path d="M410.4,849.5 V805 Q410.4,801 414.4,801 H455.4 Q459.4,801 459.4,805 V849.5 Z" fill="url(#tab)"/>
<rect x="414.6" y="805.8" width="40.4" height="24.4" rx="3.5" fill="#c98a68" stroke="rgba(0,0,0,0.25)" stroke-width="0.8"/>
<text x="434.8" y="845.3" font-size="11.19" fill="#262626" text-anchor="middle" textLength="12.0" lengthAdjust="spacingAndGlyphs" stroke="#262626" stroke-width="0.35">2F</text>
<path d="M462.4,849.5 V805 Q462.4,801 466.4,801 H507.4 Q511.4,801 511.4,805 V849.5 Z" fill="url(#tab)"/>
<rect x="466.6" y="805.8" width="40.4" height="24.4" rx="3.5" fill="#ffc8a0" stroke="rgba(0,0,0,0.25)" stroke-width="0.8"/>
<text x="486.8" y="845.3" font-size="11.19" fill="#262626" text-anchor="middle" textLength="12.6" lengthAdjust="spacingAndGlyphs" stroke="#262626" stroke-width="0.35">2K</text>
<path d="M514.4,849.5 V805 Q514.4,801 518.4,801 H559.4 Q563.4,801 563.4,805 V849.5 Z" fill="url(#tab)"/>
<rect x="518.6" y="805.8" width="40.4" height="24.4" rx="3.5" fill="#ffcfb0" stroke="rgba(0,0,0,0.25)" stroke-width="0.8"/>
<text x="538.8" y="845.3" font-size="11.19" fill="#262626" text-anchor="middle" textLength="13.2" lengthAdjust="spacingAndGlyphs" stroke="#262626" stroke-width="0.35">5D</text>
<path d="M566.4,849.5 V805 Q566.4,801 570.4,801 H611.4 Q615.4,801 615.4,805 V849.5 Z" fill="url(#tab)"/>
<rect x="570.6" y="805.8" width="40.4" height="24.4" rx="3.5" fill="#f5a878" stroke="rgba(0,0,0,0.25)" stroke-width="0.8"/>
<text x="590.8" y="845.3" font-size="11.19" fill="#262626" text-anchor="middle" textLength="12.6" lengthAdjust="spacingAndGlyphs" stroke="#262626" stroke-width="0.35">7E</text>
<path d="M618.4,849.5 V805 Q618.4,801 622.4,801 H663.4 Q667.4,801 667.4,805 V849.5 Z" fill="url(#tab)"/>
<rect x="622.6" y="805.8" width="40.4" height="24.4" rx="3.5" fill="#cf9060" stroke="rgba(0,0,0,0.25)" stroke-width="0.8"/>
<text x="642.8" y="845.3" font-size="11.19" fill="#262626" text-anchor="middle" textLength="12.0" lengthAdjust="spacingAndGlyphs" stroke="#262626" stroke-width="0.35">7F</text>
<path d="M670.4,849.5 V805 Q670.4,801 674.4,801 H715.4 Q719.4,801 719.4,805 V849.5 Z" fill="url(#tab)"/>
<rect x="674.6" y="805.8" width="40.4" height="24.4" rx="3.5" fill="#995c33" stroke="rgba(0,0,0,0.25)" stroke-width="0.8"/>
<text x="694.8" y="845.3" font-size="11.19" fill="#262626" text-anchor="middle" textLength="13.7" lengthAdjust="spacingAndGlyphs" stroke="#262626" stroke-width="0.35">7G</text>
<path d="M722.4,849.5 V805 Q722.4,801 726.4,801 H767.4 Q771.4,801 771.4,805 V849.5 Z" fill="url(#tab)"/>
<rect x="726.6" y="805.8" width="40.4" height="24.4" rx="3.5" fill="#d8a07a" stroke="rgba(0,0,0,0.25)" stroke-width="0.8"/>
<text x="746.8" y="845.3" font-size="11.19" fill="#262626" text-anchor="middle" textLength="13.2" lengthAdjust="spacingAndGlyphs" stroke="#262626" stroke-width="0.35">7H</text>
<path d="M774.4,849.5 V805 Q774.4,801 778.4,801 H819.4 Q823.4,801 823.4,805 V849.5 Z" fill="url(#tab)"/>
<rect x="778.6" y="805.8" width="40.4" height="24.4" rx="3.5" fill="#a65b26" stroke="rgba(0,0,0,0.25)" stroke-width="0.8"/>
<text x="798.8" y="845.3" font-size="11.19" fill="#262626" text-anchor="middle" textLength="8.6" lengthAdjust="spacingAndGlyphs" stroke="#262626" stroke-width="0.35">7I</text>
<path d="M826.4,849.5 V805 Q826.4,801 830.4,801 H871.4 Q875.4,801 875.4,805 V849.5 Z" fill="url(#tab)"/>
<rect x="830.6" y="805.8" width="40.4" height="24.4" rx="3.5" fill="#d88460" stroke="rgba(0,0,0,0.25)" stroke-width="0.8"/>
<text x="850.8" y="845.3" font-size="11.19" fill="#262626" text-anchor="middle" textLength="10.9" lengthAdjust="spacingAndGlyphs" stroke="#262626" stroke-width="0.35">7J</text>
<path d="M878.4,849.5 V805 Q878.4,801 882.4,801 H923.4 Q927.4,801 927.4,805 V849.5 Z" fill="url(#tab)"/>
<rect x="882.6" y="805.8" width="40.4" height="24.4" rx="3.5" fill="#d38a6c" stroke="rgba(0,0,0,0.25)" stroke-width="0.8"/>
<text x="902.8" y="845.3" font-size="11.19" fill="#262626" text-anchor="middle" textLength="13.2" lengthAdjust="spacingAndGlyphs" stroke="#262626" stroke-width="0.35">8D</text>
<path d="M930.4,849.5 V805 Q930.4,801 934.4,801 H975.4 Q979.4,801 979.4,805 V849.5 Z" fill="url(#tab)"/>
<rect x="934.6" y="805.8" width="40.4" height="24.4" rx="3.5" fill="#ff9a78" stroke="rgba(0,0,0,0.25)" stroke-width="0.8"/>
<text x="954.8" y="845.3" font-size="11.19" fill="#262626" text-anchor="middle" textLength="12.6" lengthAdjust="spacingAndGlyphs" stroke="#262626" stroke-width="0.35">8E</text>
<path d="M982.4,849.5 V805 Q982.4,801 986.4,801 H1027.4 Q1031.4,801 1031.4,805 V849.5 Z" fill="url(#tab)"/>
<rect x="986.6" y="805.8" width="40.4" height="24.4" rx="3.5" fill="#cc906e" stroke="rgba(0,0,0,0.25)" stroke-width="0.8"/>
<text x="1006.8" y="845.3" font-size="11.19" fill="#262626" text-anchor="middle" textLength="12.0" lengthAdjust="spacingAndGlyphs" stroke="#262626" stroke-width="0.35">8F</text>
<path d="M1034.4,849.5 V805 Q1034.4,801 1038.4,801 H1079.4 Q1083.4,801 1083.4,805 V849.5 Z" fill="url(#tab)"/>
<rect x="1038.6" y="805.8" width="40.4" height="24.4" rx="3.5" fill="#cf8c6c" stroke="rgba(0,0,0,0.25)" stroke-width="0.8"/>
<text x="1058.8" y="845.3" font-size="11.19" fill="#262626" text-anchor="middle" textLength="13.7" lengthAdjust="spacingAndGlyphs" stroke="#262626" stroke-width="0.35">8G</text>
<path d="M1086.4,849.5 V805 Q1086.4,801 1090.4,801 H1131.4 Q1135.4,801 1135.4,805 V849.5 Z" fill="url(#tab)"/>
<rect x="1090.6" y="805.8" width="40.4" height="24.4" rx="3.5" fill="#d89470" stroke="rgba(0,0,0,0.25)" stroke-width="0.8"/>
<text x="1110.8" y="845.3" font-size="11.19" fill="#262626" text-anchor="middle" textLength="13.2" lengthAdjust="spacingAndGlyphs" stroke="#262626" stroke-width="0.35">8H</text>
<path d="M1138.4,849.5 V805 Q1138.4,801 1142.4,801 H1183.4 Q1187.4,801 1187.4,805 V849.5 Z" fill="url(#tab)"/>
<rect x="1142.6" y="805.8" width="40.4" height="24.4" rx="3.5" fill="#7a4a28" stroke="rgba(0,0,0,0.25)" stroke-width="0.8"/>
<text x="1162.8" y="845.3" font-size="11.19" fill="#262626" text-anchor="middle" textLength="8.6" lengthAdjust="spacingAndGlyphs" stroke="#262626" stroke-width="0.35">8I</text>
<path d="M1190.4,849.5 V805 Q1190.4,801 1194.4,801 H1235.4 Q1239.4,801 1239.4,805 V849.5 Z" fill="url(#tabsel)"/>
<rect x="1194.6" y="805.8" width="40.4" height="24.4" rx="3.5" fill="#d98c5e" stroke="rgba(0,0,0,0.25)" stroke-width="0.8"/>
<text x="1214.8" y="845.3" font-size="11.19" fill="#ffffff" text-anchor="middle" font-weight="bold" textLength="11.5" lengthAdjust="spacingAndGlyphs" stroke="#ffffff" stroke-width="0.35">8J</text>
<rect x="1240.50" y="800.00" width="319.00" height="58.00" fill="#2a2a2a" />
<path d="M1241.5,858 V805 Q1241.5,801 1245.5,801 H1285 Q1289,801 1289,805 V819 H1241.5 Z" fill="url(#btn)"/>
<rect x="1241.5" y="820" width="47.5" height="38" fill="url(#btn)"/>
<circle cx="1265.3" cy="809.8" r="7" fill="url(#knob)"/>
<polygon points="1260.8,812.5 1269.8,812.5 1265.3,807.5" fill="#333"/>
<rect x="1250.5" y="826" width="29" height="28" rx="4" fill="none" stroke="#2a2a2a" stroke-width="2.5"/>
<rect x="1257.6" y="833.8" width="14.8" height="14.5" fill="#000"/>
<path d="M1290.0,831 V805 Q1290.0,801 1294.0,801 H1336.0 V831 Z" fill="url(#btn)"/>
<circle cx="1313.0" cy="815.8" r="9.6" fill="url(#knob)"/>
<rect x="1308.40" y="811.40" width="9.20" height="9.20" fill="#2e2e2e" />
<rect x="1336.80" y="801.00" width="44.20" height="30.00" fill="url(#btn)" />
<circle cx="1358.9" cy="815.8" r="9.6" fill="url(#knob)"/>
<polygon points="1354.9,809.8 1354.9,821.8 1364.9,815.8" fill="#2e2e2e"/>
<rect x="1381.80" y="801.00" width="44.20" height="30.00" fill="url(#btn)" />
<circle cx="1403.9" cy="815.8" r="9.6" fill="url(#knob)"/>
<path d="M1400.4,810.3 h-2.5 v11 h2.5 M1407.4,810.3 h2.5 v11 h-2.5" fill="none" stroke="#2e2e2e" stroke-width="1.8"/>
<rect x="1401.7" y="814.9" width="1.8" height="1.8" fill="#2e2e2e"/><rect x="1404.3" y="814.9" width="1.8" height="1.8" fill="#2e2e2e"/>
<rect x="1426.80" y="801.00" width="44.20" height="30.00" fill="url(#btn)" />
<circle cx="1448.9" cy="815.8" r="9.6" fill="url(#knob)"/>
<path d="M1448.9,815.8 c-2,-3.2 -6.2,-3.2 -6.2,0 c0,3.2 4.2,3.2 6.2,0 c2,-3.2 6.2,-3.2 6.2,0 c0,3.2 -4.2,3.2 -6.2,0 z" fill="none" stroke="#2e2e2e" stroke-width="1.7"/>
<rect x="1471.80" y="801.00" width="44.20" height="30.00" fill="url(#btnd)" />
<circle cx="1493.9" cy="815.8" r="9.6" fill="url(#knobd)"/>
<path d="M1488.9,816.1 A5,5 0 0 1 1497.5,812.3 M1498.9,815.5 A5,5 0 0 1 1490.3,819.3" fill="none" stroke="#1c1c1c" stroke-width="2.3"/>
<polygon points="1495.4,809.6 1500.1,810.0 1499.1,814.6" fill="#1c1c1c"/>
<polygon points="1492.4,822.0 1487.7,821.6 1488.7,817.0" fill="#1c1c1c"/>
<rect x="1516.80" y="801.00" width="44.40" height="30.00" fill="url(#btn)" />
<circle cx="1539.0" cy="815.8" r="9.6" fill="url(#knob)"/>
<path d="M1290,858 V836 Q1290,832 1294,832 H1426 V858 Z" fill="url(#btn)"/>
<rect x="1427.00" y="832.00" width="132.00" height="26.00" fill="url(#btn)" />
<circle cx="1320.8" cy="847.8" r="9.8" fill="url(#knob)"/>
<path d="M1319.5,843.6 l-4,4.2 l4,4.2 M1323.8,843.6 l-4,4.2 l4,4.2" fill="none" stroke="#2a2a2a" stroke-width="1.5"/>
<text x="1348.0" y="854.0" font-size="21.08" fill="#2e2e2e" textLength="50.5" lengthAdjust="spacingAndGlyphs" stroke="#2e2e2e" stroke-width="0.6">Back</text>
<text x="1454.6" y="854.9" font-size="22.53" fill="#2e2e2e" textLength="51.1" lengthAdjust="spacingAndGlyphs" stroke="#2e2e2e" stroke-width="0.6">Next</text>
<circle cx="1533.9" cy="846.8" r="9.8" fill="url(#knob)"/>
<path d="M1530.2,842.6 l4,4.2 l-4,4.2 M1534.5,842.6 l4,4.2 l-4,4.2" fill="none" stroke="#2a2a2a" stroke-width="1.5"/>
</svg></body></html>
